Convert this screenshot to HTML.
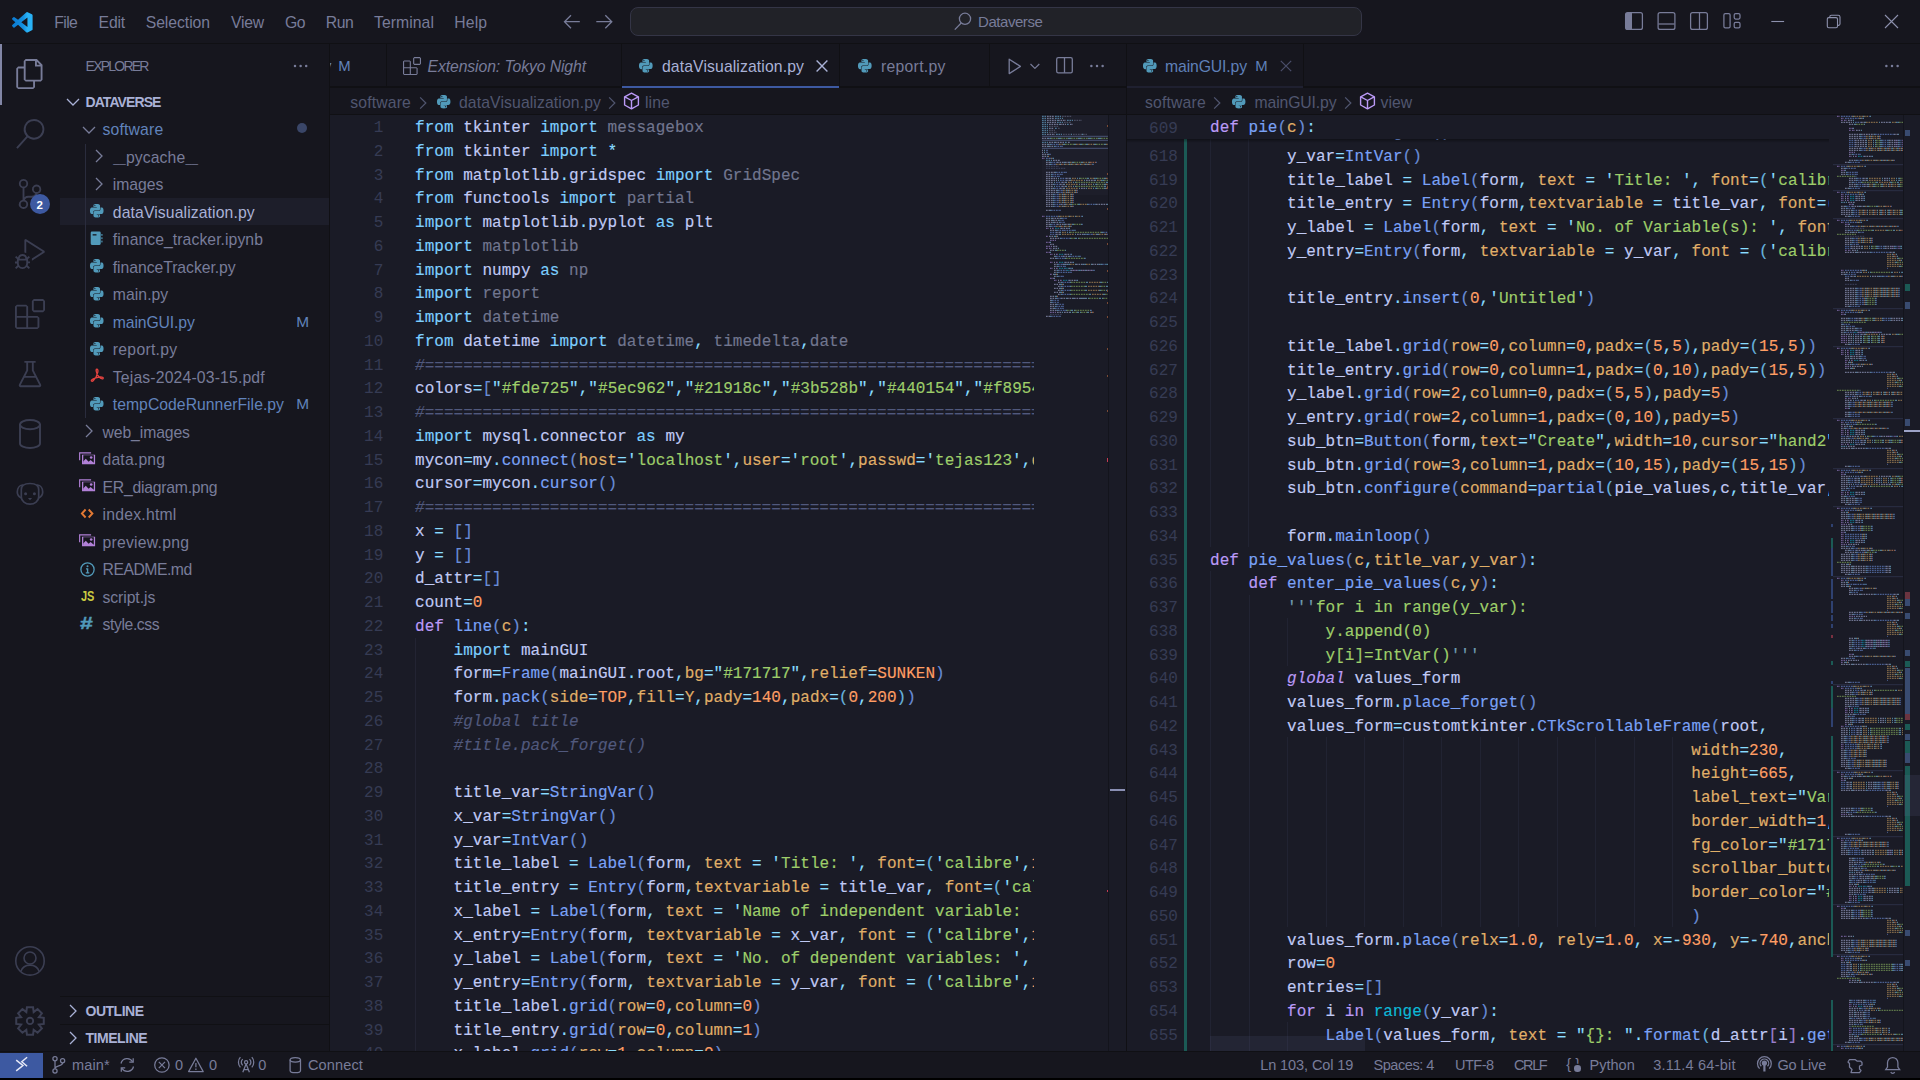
<!DOCTYPE html>
<html lang="en"><head><meta charset="utf-8"><title>Dataverse - Visual Studio Code</title>
<style>

*{box-sizing:border-box}
html,body{margin:0;padding:0;width:1920px;height:1080px;overflow:hidden;background:#16161e}
body{position:relative;font-family:"Liberation Sans",sans-serif;color:#787c99}
.a{position:absolute}
.ic{position:absolute;overflow:visible}
.t{position:absolute;white-space:pre;line-height:1;display:block}
.code{position:absolute;left:0;top:0;font-family:"Liberation Mono",monospace;font-size:16px;letter-spacing:0.025px;white-space:pre;color:#c0caf5}
.ln{position:absolute;white-space:pre;height:24px;line-height:24px;-webkit-text-stroke:0.15px}
.num{position:absolute;text-align:right;height:24px;line-height:24px;color:#363b54;font-family:"Liberation Mono",monospace;font-size:16px;letter-spacing:0.025px}
.k{color:#7dcfff}.d{color:#bb9af7}.i{font-style:italic}.f{color:#7aa2f7}.bf{color:#0db9d7}.p{color:#e0af68}
.n{color:#ff9e64}.s{color:#9ece6a}.q{color:#89ddff}.o{color:#89ddff}.v{color:#c0caf5}.u{color:#71768f}
.tq{color:#6f9bb0}.c{color:#51597d;font-style:italic}.C{color:#ff9e64}.b1{color:#698cd6}.b2{color:#68b3de}.b3{color:#9a7ecc}

</style></head>
<body>
<div class="a" style="left:0px;top:0px;width:1920px;height:43px;background:#16161e;"></div><div class="a" style="left:0px;top:43px;width:1920px;height:1px;background:#101014;"></div><svg class="ic" style="left:11.7px;top:11.6px" width="20.6" height="20.6" viewBox="0 0 24 24"><defs><linearGradient id="vg" x1="0" x2="1" y1="0" y2="0"><stop offset="0" stop-color="#0b7ad1"/><stop offset="0.55" stop-color="#1490e0"/><stop offset="0.75" stop-color="#29b2f6"/></linearGradient></defs><path fill="url(#vg)" d="M23.15 2.587L18.21.21a1.494 1.494 0 0 0-1.705.29l-9.46 8.63-4.12-3.128a.999.999 0 0 0-1.276.057L.327 7.261A1 1 0 0 0 .326 8.74L3.899 12 .326 15.26a1 1 0 0 0 .001 1.479L1.65 17.94a.999.999 0 0 0 1.276.057l4.12-3.128 9.46 8.63a1.492 1.492 0 0 0 1.704.29l4.942-2.377A1.5 1.5 0 0 0 24 20.06V3.939a1.5 1.5 0 0 0-.85-1.352zm-5.146 14.861L10.826 12l7.178-5.448v10.896z"/></svg><span class="t" style="left:54.3px;top:14px;font-size:15.75px;line-height:17px;color:#787c99;letter-spacing:-0.598px;">File</span><span class="t" style="left:98.6px;top:14px;font-size:15.75px;line-height:17px;color:#787c99;letter-spacing:-0.185px;">Edit</span><span class="t" style="left:145.7px;top:14px;font-size:15.75px;line-height:17px;color:#787c99;letter-spacing:-0.055px;">Selection</span><span class="t" style="left:231px;top:14px;font-size:15.75px;line-height:17px;color:#787c99;letter-spacing:-0.215px;">View</span><span class="t" style="left:285px;top:14px;font-size:15.75px;line-height:17px;color:#787c99;letter-spacing:-0.508px;">Go</span><span class="t" style="left:325.7px;top:14px;font-size:15.75px;line-height:17px;color:#787c99;letter-spacing:-0.435px;">Run</span><span class="t" style="left:374px;top:14px;font-size:15.75px;line-height:17px;color:#787c99;letter-spacing:0.059px;">Terminal</span><span class="t" style="left:454.3px;top:14px;font-size:15.75px;line-height:17px;color:#787c99;letter-spacing:0.148px;">Help</span><svg class="ic" style="left:560px;top:12px" width="60" height="20" viewBox="560 12 60 20"><g fill="none" stroke="#787c99" stroke-width="1.3"><path d="M579.8 21.7H564.6M571 15.2l-6.5 6.5 6.5 6.5"/><path d="M596.3 21.7h15.3M605.3 15.2l6.5 6.5-6.5 6.5"/></g></svg><div class="a" style="left:630px;top:7px;width:732px;height:29px;background:#212228;border:1px solid #343546;border-radius:8px"></div><svg class="ic" style="left:954px;top:11.5px" width="18" height="18" viewBox="0 0 18 18"><g fill="none" stroke="#787c99" stroke-width="1.3"><circle cx="11" cy="6.8" r="5.6"/><path d="M7.2 11L0.8 17.6"/></g></svg><span class="t" style="left:978px;top:13px;font-size:15px;line-height:17px;color:#787c99;letter-spacing:-0.442px;">Dataverse</span><svg class="ic" style="left:1620px;top:8px" width="130" height="28" viewBox="1620 8 130 28"><g fill="none" stroke="#787c99" stroke-width="1.25">
<rect x="1625.6" y="12.6" width="16.8" height="16.8" rx="2"/><path d="M1626 13h6v16h-6z" fill="#787c99" stroke="none"/>
<rect x="1658.1" y="12.6" width="16.8" height="16.8" rx="2"/><path d="M1658.5 24h16"/>
<rect x="1690.6" y="12.6" width="16.8" height="16.8" rx="2"/><path d="M1699.5 13v16"/>
<rect x="1723.9" y="13.6" width="6.2" height="14.2" rx="1.4"/><rect x="1734.2" y="13.6" width="5.8" height="5.4" rx="1.4"/><rect x="1734.2" y="22.4" width="5.8" height="5.4" rx="1.4"/>
</g></svg><svg class="ic" style="left:1760px;top:8px" width="150" height="28" viewBox="1760 8 150 28"><g fill="none" stroke="#8d91ad" stroke-width="1.1">
<path d="M1771.3 21.5h12.8"/>
<rect x="1827.3" y="17.6" width="10.2" height="10.2" rx="1.5"/><path d="M1829.8 17.4v-.6a1.6 1.6 0 0 1 1.6-1.6h6.8a1.8 1.8 0 0 1 1.8 1.8v6.8a1.6 1.6 0 0 1-1.6 1.6h-.7"/>
<path d="M1885 15l13 13M1898 15l-13 13"/>
</g></svg><div class="a" style="left:0px;top:44px;width:2.4px;height:60.5px;background:#8286a6;"></div><svg class="ic" style="left:15px;top:59px" width="30" height="30" viewBox="0 0 24 24"><path fill="#787c99" d="M17.5 0h-9L7 1.5V6H2.5L1 7.5v15.07L2.5 24h12.07L16 22.57V18h4.7l1.3-1.43V4.5L17.5 0zm0 2.12l2.38 2.38H17.5V2.12zm-3 20.38h-12v-15H7v9.07L8.5 18h6v4.5zm6-6h-12v-15H16V6h4.5v10.5z"/></svg><svg class="ic" style="left:15px;top:119px" width="30" height="30" viewBox="0 0 24 24"><path fill="#3b3e52" d="M15.25 0a8.25 8.25 0 0 0-6.18 13.72L1 22.88l1.12 1 8.05-9.12A8.251 8.251 0 1 0 15.25.01V0zm0 15a6.75 6.75 0 1 1 0-13.5 6.75 6.75 0 0 1 0 13.5z"/></svg><svg class="ic" style="left:15px;top:179px" width="30" height="30" viewBox="0 0 24 24"><path fill="#3b3e52" d="M21.007 8.222A3.738 3.738 0 0 0 15.045 5.2a3.737 3.737 0 0 0 1.156 6.583 2.988 2.988 0 0 1-2.668 1.67h-2.99a4.456 4.456 0 0 0-2.989 1.165V7.4a3.737 3.737 0 1 0-1.494 0v9.117a3.776 3.776 0 1 0 1.816.099 2.99 2.99 0 0 1 2.668-1.667h2.99a4.484 4.484 0 0 0 4.223-3.039 3.736 3.736 0 0 0 3.25-3.687zM4.565 3.738a2.242 2.242 0 1 1 4.484 0 2.242 2.242 0 0 1-4.484 0zm4.484 16.441a2.242 2.242 0 1 1-4.484 0 2.242 2.242 0 0 1 4.484 0zm8.221-9.715a2.242 2.242 0 1 1 0-4.485 2.242 2.242 0 0 1 0 4.485z"/></svg><svg class="ic" style="left:15px;top:239px" width="30" height="30" viewBox="0 0 24 24"><path fill="#3b3e52" d="M10.94 13.5l-1.32 1.32a3.73 3.73 0 0 0-7.24 0L1.06 13.5 0 14.56l1.72 1.72-.22.22V18H0v1.5h1.5v.08c.077.489.214.966.41 1.42L0 22.94 1.06 24l1.65-1.65A4.308 4.308 0 0 0 6 24a4.31 4.31 0 0 0 3.29-1.65L10.94 24 12 22.94 10.09 21c.198-.464.336-.951.41-1.45v-.1H12V18h-1.5v-1.5l-.22-.22L12 14.56l-1.06-1.06zM6 13.5a2.25 2.25 0 0 1 2.25 2.25h-4.5A2.25 2.25 0 0 1 6 13.5zm3 6a3.33 3.33 0 0 1-3 3 3.33 3.33 0 0 1-3-3v-2.25h6v2.25zm14.76-9.9v1.26L13.5 17.37V15.6l8.5-5.37L9 2v9.46a5.07 5.07 0 0 0-1.5-.72V.63L8.64 0l15.12 9.6z"/></svg><svg class="ic" style="left:15px;top:299px" width="30" height="30" viewBox="0 0 24 24"><path fill="#3b3e52" d="M13.5 1.5L15 0h7.5L24 1.5V9l-1.5 1.5H15L13.5 9V1.5zm1.5 0V9h7.5V1.5H15zM0 15V6l1.5-1.5H9L10.5 6v7.5H18l1.5 1.5v7.5L18 24H1.5L0 22.5V15zm9-1.5V6H1.5v7.5H9zM9 15H1.5v7.5H9V15zm1.5 7.5H18V15h-7.5v7.5z"/></svg><svg class="ic" style="left:15px;top:359px" width="30" height="30" viewBox="0 0 16 16"><path fill="#3b3e52" d="M13.893 13.558L10 6.006v-4h1v-1H9.994V1H6v.006H5v1h1v4l-3.893 7.552A1 1 0 0 0 3 15h10a1 1 0 0 0 .893-1.442zM7 6.251V2.006h2v4.245l.111.215L10.438 9H5.562l1.327-2.534L7 6.251zM3 14l2.062-4h5.876L13 14H3z"/></svg><div class="a" style="left:30px;top:194.4px;width:20px;height:20px;border-radius:10px;background:#3d59a1"></div><span class="t" style="left:36.6px;top:199px;font-size:11.5px;line-height:12px;color:#ffffff;font-weight:bold;">2</span><svg class="ic" style="left:0;top:404px" width="60" height="120" viewBox="0 404 60 120"><g fill="none" stroke="#3b3e52" stroke-width="1.9" stroke-linecap="round" stroke-linejoin="round"><ellipse cx="30" cy="424.6" rx="10" ry="4.6"/><path d="M20 424.6v18.8c0 2.5 4.5 4.6 10 4.6s10-2.1 10-4.6v-18.8"/><path d="M21.3 489.5c0-4 3.6-6 8.7-6s8.7 2 8.7 6v7.5c0 4.2-4 7.2-8.7 7.2s-8.7-3-8.7-7.2z" stroke-width="1.7"/><path d="M22.5 485c-3 .4-5.2 3.2-5.2 7 0 2.600 1.400 4.800 4 6" stroke-width="1.7"/><path d="M37.500 485c3 .4 5.200 3.200 5.200 7 0 2.600-1.400 4.800-4 6" stroke-width="1.700"/></g><g fill="#3b3e52"><circle cx="25.6" cy="493.7" r="1.5"/><circle cx="34.4" cy="493.7" r="1.500"/><path d="M27.900 498h4.200l-2.100 2.300z"/></g></svg><svg class="ic" style="left:0;top:940px" width="60" height="100" viewBox="0 940 60 100"><g fill="none" stroke="#3b3e52"><circle cx="30" cy="960.9" r="14.2" stroke-width="1.6"/><circle cx="30" cy="958" r="6" stroke-width="1.6"/><path d="M20.800 971.400c1.400-4 5-6.300 9.200-6.300s7.800 2.300 9.200 6.300" stroke-width="1.600"/><path d="M26.95 1007.13 L33.05 1007.13 L33.67 1012.03 L37.58 1009.01 L41.89 1013.32 L38.87 1017.23 L43.77 1017.85 L43.77 1023.95 L38.87 1024.57 L41.89 1028.48 L37.58 1032.79 L33.67 1029.77 L33.05 1034.67 L26.95 1034.67 L26.33 1029.77 L22.42 1032.79 L18.11 1028.48 L21.13 1024.57 L16.23 1023.95 L16.23 1017.85 L21.13 1017.23 L18.11 1013.32 L22.42 1009.01 L26.33 1012.03Z" stroke-width="2" stroke-linejoin="miter"/><circle cx="30" cy="1020.9" r="3.2" stroke-width="1.9"/></g></svg><div class="a" style="left:60px;top:44px;width:269px;height:1008px;background:#16161e;"></div><div class="a" style="left:329px;top:44px;width:1px;height:1008px;background:#101014;"></div><span class="t" style="left:85.6px;top:58px;font-size:14px;line-height:16px;color:#787c99;letter-spacing:-1.769px;">EXPLORER</span><svg class="ic" style="left:290px;top:60px" width="22" height="12" viewBox="290 60 22 12"><g fill="#787c99"><circle cx="295" cy="66" r="1.25"/><circle cx="300.6" cy="66" r="1.25"/><circle cx="306.200" cy="66" r="1.250"/></g></svg><svg class="ic" style="left:63px;top:92.3px" width="20" height="20" viewBox="-10 -10 20 20"><path d="M-6.0 -3.0 L0 3.0 L6.0 -3.0" fill="none" stroke="#a9b1d6" stroke-width="1.3"/></svg><span class="t" style="left:85.5px;top:94px;font-size:14px;line-height:16px;color:#a9b1d6;font-weight:bold;letter-spacing:-0.915px;">DATAVERSE</span><div class="a" style="left:60px;top:197.8px;width:269px;height:27.3px;background:#1d1e2a;"></div><div class="a" style="left:85.2px;top:143.5px;width:1px;height:274.5px;background:#2a2c3d;"></div><svg class="ic" style="left:78.8px;top:119.80000000000001px" width="20" height="20" viewBox="-10 -10 20 20"><path d="M-6.0 -3.0 L0 3.0 L6.0 -3.0" fill="none" stroke="#787c99" stroke-width="1.3"/></svg><span class="t" style="left:102.5px;top:121px;font-size:15.75px;line-height:17px;color:#6183bb;letter-spacing:0.159px;">software</span><div class="a" style="left:297.300px;top:123.4px;width:10px;height:10px;border-radius:5px;background:#3a4668"></div><svg class="ic" style="left:88.9px;top:146.1px" width="20" height="20" viewBox="-10 -10 20 20"><path d="M-3.0 -6.0 L3.0 0 L-3.0 6.0" fill="none" stroke="#787c99" stroke-width="1.3"/></svg><span class="t" style="left:113.200px;top:149px;font-size:15.750px;line-height:17px;color:#787c99"><span style="font-size:11.200px">__</span><span style="letter-spacing:0.090px;padding:0 0.300px">pycache</span><span style="font-size:11.200px">__</span></span><svg class="ic" style="left:88.9px;top:173.6px" width="20" height="20" viewBox="-10 -10 20 20"><path d="M-3.0 -6.0 L3.0 0 L-3.0 6.0" fill="none" stroke="#787c99" stroke-width="1.3"/></svg><span class="t" style="left:112.8px;top:176px;font-size:15.75px;line-height:17px;color:#787c99;letter-spacing:-0.047px;">images</span><svg class="ic" style="left:90.2px;top:204.3px" width="13.5" height="13.5" viewBox="0 0 24 24" ><path fill="#519aba" d="M14.25.18l.9.2.73.26.59.3.45.32.34.34.25.34.16.33.1.3.04.26.02.2-.01.13V8.5l-.05.63-.13.55-.21.46-.26.38-.3.31-.33.25-.35.19-.35.14-.33.1-.3.07-.26.04-.21.02H8.77l-.69.05-.59.14-.5.22-.41.27-.33.32-.27.35-.2.36-.15.37-.1.35-.07.32-.04.27-.02.21v3.06H3.17l-.21-.03-.28-.07-.32-.12-.35-.18-.36-.26-.36-.36-.35-.46-.32-.59-.28-.73-.21-.88-.14-1.05-.05-1.23.06-1.22.16-1.04.24-.87.32-.71.36-.57.4-.44.42-.33.42-.24.4-.16.36-.1.32-.05.24-.01h.16l.06.01h8.16v-.83H6.18l-.01-2.75-.02-.37.05-.34.11-.31.17-.28.25-.26.31-.23.38-.2.44-.18.51-.15.58-.12.64-.1.71-.06.77-.04.84-.02 1.27.05zm-6.3 1.98l-.23.33-.08.41.08.41.23.34.33.22.41.09.41-.09.33-.22.23-.34.08-.41-.08-.41-.23-.33-.33-.22-.41-.09-.41.09zm13.09 3.95l.28.06.32.12.35.18.36.27.36.35.35.47.32.59.28.73.21.88.14 1.04.05 1.23-.06 1.23-.16 1.04-.24.86-.32.71-.36.57-.4.45-.42.33-.42.24-.4.16-.36.09-.32.05-.24.02-.16-.01h-8.22v.82h5.84l.01 2.76.02.36-.05.34-.11.31-.17.29-.25.25-.31.24-.38.2-.44.17-.51.15-.58.13-.64.09-.71.07-.77.04-.84.01-1.27-.04-1.07-.14-.9-.2-.73-.25-.59-.3-.45-.33-.34-.34-.25-.34-.16-.33-.1-.3-.04-.25-.02-.2.01-.13v-5.34l.05-.64.13-.54.21-.46.26-.38.3-.32.33-.24.35-.2.35-.14.33-.1.3-.06.26-.04.21-.02.13-.01h5.84l.69-.05.59-.14.5-.21.41-.28.33-.32.27-.35.2-.36.15-.36.1-.35.07-.32.04-.28.02-.21V6.07h2.09l.14.01zm-6.47 14.25l-.23.33-.08.41.08.41.23.33.33.23.41.08.41-.08.33-.23.23-.33.08-.41-.08-.41-.23-.33-.33-.23-.41-.08-.41.08z"/></svg><span class="t" style="left:112.8px;top:204px;font-size:15.75px;line-height:17px;color:#a9b1d6;letter-spacing:0.109px;">dataVisualization.py</span><svg class="ic" style="left:90.4px;top:230.8px" width="13.200" height="15" viewBox="0 0 15 15" preserveAspectRatio="none"><path fill="#519aba" d="M2.2 0.6h8.6a1.4 1.400 0 0 1 1.400 1.400v10.600a1.400 1.400 0 0 1-1.400 1.400H2.200a1.400 1.400 0 0 1-1.400-1.400V2a1.400 1.400 0 0 1 1.400-1.400z"/><path fill="#16161e" d="M3 3.200h4.400v1.300H3z"/><g fill="#519aba"><rect x="12.9" y="3" width="1.3" height="1.800"/><rect x="12.9" y="6.300" width="1.300" height="1.800"/><rect x="12.900" y="9.600" width="1.300" height="1.800"/></g></svg><span class="t" style="left:112.8px;top:231px;font-size:15.75px;line-height:17px;color:#787c99;letter-spacing:0.065px;">finance_tracker.ipynb</span><svg class="ic" style="left:90.2px;top:259.3px" width="13.5" height="13.5" viewBox="0 0 24 24" ><path fill="#519aba" d="M14.25.18l.9.2.73.26.59.3.45.32.34.34.25.34.16.33.1.3.04.26.02.2-.01.13V8.5l-.05.63-.13.55-.21.46-.26.38-.3.31-.33.25-.35.19-.35.14-.33.1-.3.07-.26.04-.21.02H8.77l-.69.05-.59.14-.5.22-.41.27-.33.32-.27.35-.2.36-.15.37-.1.35-.07.32-.04.27-.02.21v3.06H3.17l-.21-.03-.28-.07-.32-.12-.35-.18-.36-.26-.36-.36-.35-.46-.32-.59-.28-.73-.21-.88-.14-1.05-.05-1.23.06-1.22.16-1.04.24-.87.32-.71.36-.57.4-.44.42-.33.42-.24.4-.16.36-.1.32-.05.24-.01h.16l.06.01h8.16v-.83H6.18l-.01-2.75-.02-.37.05-.34.11-.31.17-.28.25-.26.31-.23.38-.2.44-.18.51-.15.58-.12.64-.1.71-.06.77-.04.84-.02 1.27.05zm-6.3 1.98l-.23.33-.08.41.08.41.23.34.33.22.41.09.41-.09.33-.22.23-.34.08-.41-.08-.41-.23-.33-.33-.22-.41-.09-.41.09zm13.09 3.95l.28.06.32.12.35.18.36.27.36.35.35.47.32.59.28.73.21.88.14 1.04.05 1.23-.06 1.23-.16 1.04-.24.86-.32.71-.36.57-.4.45-.42.33-.42.24-.4.16-.36.09-.32.05-.24.02-.16-.01h-8.22v.82h5.84l.01 2.76.02.36-.05.34-.11.31-.17.29-.25.25-.31.24-.38.2-.44.17-.51.15-.58.13-.64.09-.71.07-.77.04-.84.01-1.27-.04-1.07-.14-.9-.2-.73-.25-.59-.3-.45-.33-.34-.34-.25-.34-.16-.33-.1-.3-.04-.25-.02-.2.01-.13v-5.34l.05-.64.13-.54.21-.46.26-.38.3-.32.33-.24.35-.2.35-.14.33-.1.3-.06.26-.04.21-.02.13-.01h5.84l.69-.05.59-.14.5-.21.41-.28.33-.32.27-.35.2-.36.15-.36.1-.35.07-.32.04-.28.02-.21V6.07h2.09l.14.01zm-6.47 14.25l-.23.33-.08.41.08.41.23.33.33.23.41.08.41-.08.33-.23.23-.33.08-.41-.08-.41-.23-.33-.33-.23-.41-.08-.41.08z"/></svg><span class="t" style="left:112.8px;top:259px;font-size:15.75px;line-height:17px;color:#787c99;letter-spacing:-0.055px;">financeTracker.py</span><svg class="ic" style="left:90.2px;top:286.8px" width="13.5" height="13.5" viewBox="0 0 24 24" ><path fill="#519aba" d="M14.25.18l.9.2.73.26.59.3.45.32.34.34.25.34.16.33.1.3.04.26.02.2-.01.13V8.5l-.05.63-.13.55-.21.46-.26.38-.3.31-.33.25-.35.19-.35.14-.33.1-.3.07-.26.04-.21.02H8.77l-.69.05-.59.14-.5.22-.41.27-.33.32-.27.35-.2.36-.15.37-.1.35-.07.32-.04.27-.02.21v3.06H3.17l-.21-.03-.28-.07-.32-.12-.35-.18-.36-.26-.36-.36-.35-.46-.32-.59-.28-.73-.21-.88-.14-1.05-.05-1.23.06-1.22.16-1.04.24-.87.32-.71.36-.57.4-.44.42-.33.42-.24.4-.16.36-.1.32-.05.24-.01h.16l.06.01h8.16v-.83H6.18l-.01-2.75-.02-.37.05-.34.11-.31.17-.28.25-.26.31-.23.38-.2.44-.18.51-.15.58-.12.64-.1.71-.06.77-.04.84-.02 1.27.05zm-6.3 1.98l-.23.33-.08.41.08.41.23.34.33.22.41.09.41-.09.33-.22.23-.34.08-.41-.08-.41-.23-.33-.33-.22-.41-.09-.41.09zm13.09 3.95l.28.06.32.12.35.18.36.27.36.35.35.47.32.59.28.73.21.88.14 1.04.05 1.23-.06 1.23-.16 1.04-.24.86-.32.71-.36.57-.4.45-.42.33-.42.24-.4.16-.36.09-.32.05-.24.02-.16-.01h-8.22v.82h5.84l.01 2.76.02.36-.05.34-.11.31-.17.29-.25.25-.31.24-.38.2-.44.17-.51.15-.58.13-.64.09-.71.07-.77.04-.84.01-1.27-.04-1.07-.14-.9-.2-.73-.25-.59-.3-.45-.33-.34-.34-.25-.34-.16-.33-.1-.3-.04-.25-.02-.2.01-.13v-5.34l.05-.64.13-.54.21-.46.26-.38.3-.32.33-.24.35-.2.35-.14.33-.1.3-.06.26-.04.21-.02.13-.01h5.84l.69-.05.59-.14.5-.21.41-.28.33-.32.27-.35.2-.36.15-.36.1-.35.07-.32.04-.28.02-.21V6.07h2.09l.14.01zm-6.47 14.25l-.23.33-.08.41.08.41.23.33.33.23.41.08.41-.08.33-.23.23-.33.08-.41-.08-.41-.23-.33-.33-.23-.41-.08-.41.08z"/></svg><span class="t" style="left:112.8px;top:286px;font-size:15.75px;line-height:17px;color:#787c99;letter-spacing:0.049px;">main.py</span><svg class="ic" style="left:90.2px;top:314.3px" width="13.5" height="13.5" viewBox="0 0 24 24" ><path fill="#519aba" d="M14.25.18l.9.2.73.26.59.3.45.32.34.34.25.34.16.33.1.3.04.26.02.2-.01.13V8.5l-.05.63-.13.55-.21.46-.26.38-.3.31-.33.25-.35.19-.35.14-.33.1-.3.07-.26.04-.21.02H8.77l-.69.05-.59.14-.5.22-.41.27-.33.32-.27.35-.2.36-.15.37-.1.35-.07.32-.04.27-.02.21v3.06H3.17l-.21-.03-.28-.07-.32-.12-.35-.18-.36-.26-.36-.36-.35-.46-.32-.59-.28-.73-.21-.88-.14-1.05-.05-1.23.06-1.22.16-1.04.24-.87.32-.71.36-.57.4-.44.42-.33.42-.24.4-.16.36-.1.32-.05.24-.01h.16l.06.01h8.16v-.83H6.18l-.01-2.75-.02-.37.05-.34.11-.31.17-.28.25-.26.31-.23.38-.2.44-.18.51-.15.58-.12.64-.1.71-.06.77-.04.84-.02 1.27.05zm-6.3 1.98l-.23.33-.08.41.08.41.23.34.33.22.41.09.41-.09.33-.22.23-.34.08-.41-.08-.41-.23-.33-.33-.22-.41-.09-.41.09zm13.09 3.95l.28.06.32.12.35.18.36.27.36.35.35.47.32.59.28.73.21.88.14 1.04.05 1.23-.06 1.23-.16 1.04-.24.86-.32.71-.36.57-.4.45-.42.33-.42.24-.4.16-.36.09-.32.05-.24.02-.16-.01h-8.22v.82h5.84l.01 2.76.02.36-.05.34-.11.31-.17.29-.25.25-.31.24-.38.2-.44.17-.51.15-.58.13-.64.09-.71.07-.77.04-.84.01-1.27-.04-1.07-.14-.9-.2-.73-.25-.59-.3-.45-.33-.34-.34-.25-.34-.16-.33-.1-.3-.04-.25-.02-.2.01-.13v-5.34l.05-.64.13-.54.21-.46.26-.38.3-.32.33-.24.35-.2.35-.14.33-.1.3-.06.26-.04.21-.02.13-.01h5.84l.69-.05.59-.14.5-.21.41-.28.33-.32.27-.35.2-.36.15-.36.1-.35.07-.32.04-.28.02-.21V6.07h2.09l.14.01zm-6.47 14.25l-.23.33-.08.41.08.41.23.33.33.23.41.08.41-.08.33-.23.23-.33.08-.41-.08-.41-.23-.33-.33-.23-.41-.08-.41.08z"/></svg><span class="t" style="left:112.8px;top:314px;font-size:15.75px;line-height:17px;color:#6183bb;letter-spacing:-0.126px;">mainGUI.py</span><span class="t" style="left:296.3px;top:313px;font-size:15.4px;line-height:17px;color:#6183bb;letter-spacing:-0.928px;">M</span><svg class="ic" style="left:90.2px;top:341.8px" width="13.5" height="13.5" viewBox="0 0 24 24" ><path fill="#519aba" d="M14.25.18l.9.2.73.26.59.3.45.32.34.34.25.34.16.33.1.3.04.26.02.2-.01.13V8.5l-.05.63-.13.55-.21.46-.26.38-.3.31-.33.25-.35.19-.35.14-.33.1-.3.07-.26.04-.21.02H8.77l-.69.05-.59.14-.5.22-.41.27-.33.32-.27.35-.2.36-.15.37-.1.35-.07.32-.04.27-.02.21v3.06H3.17l-.21-.03-.28-.07-.32-.12-.35-.18-.36-.26-.36-.36-.35-.46-.32-.59-.28-.73-.21-.88-.14-1.05-.05-1.23.06-1.22.16-1.04.24-.87.32-.71.36-.57.4-.44.42-.33.42-.24.4-.16.36-.1.32-.05.24-.01h.16l.06.01h8.16v-.83H6.18l-.01-2.75-.02-.37.05-.34.11-.31.17-.28.25-.26.31-.23.38-.2.44-.18.51-.15.58-.12.64-.1.71-.06.77-.04.84-.02 1.27.05zm-6.3 1.98l-.23.33-.08.41.08.41.23.34.33.22.41.09.41-.09.33-.22.23-.34.08-.41-.08-.41-.23-.33-.33-.22-.41-.09-.41.09zm13.09 3.95l.28.06.32.12.35.18.36.27.36.35.35.47.32.59.28.73.21.88.14 1.04.05 1.23-.06 1.23-.16 1.04-.24.86-.32.71-.36.57-.4.45-.42.33-.42.24-.4.16-.36.09-.32.05-.24.02-.16-.01h-8.22v.82h5.84l.01 2.76.02.36-.05.34-.11.31-.17.29-.25.25-.31.24-.38.2-.44.17-.51.15-.58.13-.64.09-.71.07-.77.04-.84.01-1.27-.04-1.07-.14-.9-.2-.73-.25-.59-.3-.45-.33-.34-.34-.25-.34-.16-.33-.1-.3-.04-.25-.02-.2.01-.13v-5.34l.05-.64.13-.54.21-.46.26-.38.3-.32.33-.24.35-.2.35-.14.33-.1.3-.06.26-.04.21-.02.13-.01h5.84l.69-.05.59-.14.5-.21.41-.28.33-.32.27-.35.2-.36.15-.36.1-.35.07-.32.04-.28.02-.21V6.07h2.09l.14.01zm-6.47 14.25l-.23.33-.08.41.08.41.23.33.33.23.41.08.41-.08.33-.23.23-.33.08-.41-.08-.41-.23-.33-.33-.23-.41-.08-.41.08z"/></svg><span class="t" style="left:112.8px;top:341px;font-size:15.75px;line-height:17px;color:#787c99;letter-spacing:0.272px;">report.py</span><svg class="ic" style="left:90.2px;top:368.3px" width="15" height="15" viewBox="0 0 15 15"><path fill="none" stroke="#e2423f" stroke-width="1.35" stroke-linecap="round" stroke-linejoin="round" d="M6.800 1.200c1.200 0 1.300 1.500 1 3-.5 2.600-2.500 6.600-4.600 8.600-1 .9-2.300.300-1.700-.700 1-1.700 6.800-3.500 10.500-3 1.700.200 1.600 1.800.200 1.700-2.300-.200-5.300-4-5.900-7.300-.200-1.200-.300-2.300.500-2.300z"/></svg><span class="t" style="left:112.8px;top:369px;font-size:15.75px;line-height:17px;color:#787c99;letter-spacing:0.157px;">Tejas-2024-03-15.pdf</span><svg class="ic" style="left:90.2px;top:396.8px" width="13.5" height="13.5" viewBox="0 0 24 24" ><path fill="#519aba" d="M14.25.18l.9.2.73.26.59.3.45.32.34.34.25.34.16.33.1.3.04.26.02.2-.01.13V8.5l-.05.63-.13.55-.21.46-.26.38-.3.31-.33.25-.35.19-.35.14-.33.1-.3.07-.26.04-.21.02H8.77l-.69.05-.59.14-.5.22-.41.27-.33.32-.27.35-.2.36-.15.37-.1.35-.07.32-.04.27-.02.21v3.06H3.17l-.21-.03-.28-.07-.32-.12-.35-.18-.36-.26-.36-.36-.35-.46-.32-.59-.28-.73-.21-.88-.14-1.05-.05-1.23.06-1.22.16-1.04.24-.87.32-.71.36-.57.4-.44.42-.33.42-.24.4-.16.36-.1.32-.05.24-.01h.16l.06.01h8.16v-.83H6.18l-.01-2.75-.02-.37.05-.34.11-.31.17-.28.25-.26.31-.23.38-.2.44-.18.51-.15.58-.12.64-.1.71-.06.77-.04.84-.02 1.27.05zm-6.3 1.98l-.23.33-.08.41.08.41.23.34.33.22.41.09.41-.09.33-.22.23-.34.08-.41-.08-.41-.23-.33-.33-.22-.41-.09-.41.09zm13.09 3.95l.28.06.32.12.35.18.36.27.36.35.35.47.32.59.28.73.21.88.14 1.04.05 1.23-.06 1.23-.16 1.04-.24.86-.32.71-.36.57-.4.45-.42.33-.42.24-.4.16-.36.09-.32.05-.24.02-.16-.01h-8.22v.82h5.84l.01 2.76.02.36-.05.34-.11.31-.17.29-.25.25-.31.24-.38.2-.44.17-.51.15-.58.13-.64.09-.71.07-.77.04-.84.01-1.27-.04-1.07-.14-.9-.2-.73-.25-.59-.3-.45-.33-.34-.34-.25-.34-.16-.33-.1-.3-.04-.25-.02-.2.01-.13v-5.34l.05-.64.13-.54.21-.46.26-.38.3-.32.33-.24.35-.2.35-.14.33-.1.3-.06.26-.04.21-.02.13-.01h5.84l.69-.05.59-.14.5-.21.41-.28.33-.32.27-.35.2-.36.15-.36.1-.35.07-.32.04-.28.02-.21V6.07h2.09l.14.01zm-6.47 14.25l-.23.33-.08.41.08.41.23.33.33.23.41.08.41-.08.33-.23.23-.33.08-.41-.08-.41-.23-.33-.33-.23-.41-.08-.41.08z"/></svg><span class="t" style="left:112.8px;top:396px;font-size:15.75px;line-height:17px;color:#6183bb;letter-spacing:0.023px;">tempCodeRunnerFile.py</span><span class="t" style="left:296.3px;top:395px;font-size:15.4px;line-height:17px;color:#6183bb;letter-spacing:-0.928px;">M</span><svg class="ic" style="left:78.6px;top:421.1px" width="20" height="20" viewBox="-10 -10 20 20"><path d="M-3.0 -6.0 L3.0 0 L-3.0 6.0" fill="none" stroke="#787c99" stroke-width="1.3"/></svg><span class="t" style="left:102.5px;top:424px;font-size:15.75px;line-height:17px;color:#787c99;letter-spacing:-0.104px;">web_images</span><svg class="ic" style="left:79px;top:451.5px" width="17" height="14" viewBox="0 0 17 14"><path fill="none" stroke="#b180d7" stroke-width="1.150" d="M0.650 8.300V0.850H12.100"/><path fill="none" stroke="#b180d7" stroke-width="1.300" d="M3.650 2.900V11.500H15.450V2.900"/><path fill="none" stroke="#b180d7" stroke-opacity="0.300" stroke-width="1.600" d="M3 2.900H16.100"/><path fill="#b180d7" d="M4.200 11.400V9.500L6.800 6.700l2.800 3.100 2-1.700L15 11V11.400z"/><circle cx="12.200" cy="5.500" r="1.350" fill="#b180d7"/></svg><span class="t" style="left:102.5px;top:451px;font-size:15.75px;line-height:17px;color:#787c99;letter-spacing:0.173px;">data.png</span><svg class="ic" style="left:79px;top:479.0px" width="17" height="14" viewBox="0 0 17 14"><path fill="none" stroke="#b180d7" stroke-width="1.150" d="M0.650 8.300V0.850H12.100"/><path fill="none" stroke="#b180d7" stroke-width="1.300" d="M3.650 2.900V11.500H15.450V2.900"/><path fill="none" stroke="#b180d7" stroke-opacity="0.300" stroke-width="1.600" d="M3 2.900H16.100"/><path fill="#b180d7" d="M4.200 11.400V9.500L6.800 6.700l2.800 3.100 2-1.700L15 11V11.400z"/><circle cx="12.200" cy="5.500" r="1.350" fill="#b180d7"/></svg><span class="t" style="left:102.5px;top:479px;font-size:15.75px;line-height:17px;color:#787c99;letter-spacing:-0.236px;">ER_diagram.png</span><svg class="ic" style="left:80.2px;top:506.29999999999995px" width="15" height="15" viewBox="0 0 15 15"><path fill="none" stroke="#e37933" stroke-width="1.900" d="M5.600 3.500L1.900 7.500l3.700 4M8.700 3.500l3.700 4-3.700 4"/></svg><span class="t" style="left:102.5px;top:506px;font-size:15.75px;line-height:17px;color:#787c99;letter-spacing:0.23px;">index.html</span><svg class="ic" style="left:79px;top:534.0px" width="17" height="14" viewBox="0 0 17 14"><path fill="none" stroke="#b180d7" stroke-width="1.150" d="M0.650 8.300V0.850H12.100"/><path fill="none" stroke="#b180d7" stroke-width="1.300" d="M3.650 2.900V11.500H15.450V2.900"/><path fill="none" stroke="#b180d7" stroke-opacity="0.300" stroke-width="1.600" d="M3 2.900H16.100"/><path fill="#b180d7" d="M4.200 11.400V9.500L6.800 6.700l2.800 3.100 2-1.700L15 11V11.400z"/><circle cx="12.200" cy="5.500" r="1.350" fill="#b180d7"/></svg><span class="t" style="left:102.5px;top:534px;font-size:15.75px;line-height:17px;color:#787c99;letter-spacing:0.24px;">preview.png</span><svg class="ic" style="left:79.5px;top:562.0px" width="15" height="15" viewBox="0 0 15 15"><circle cx="7.500" cy="7.500" r="6.600" fill="none" stroke="#519aba" stroke-width="1.300"/><g fill="#519aba"><circle cx="7.500" cy="4.300" r="1"/><path d="M6 6.300h2.300v4h1v1.100H5.800v-1.100h1.100V7.400H6z"/></g></svg><span class="t" style="left:102.5px;top:561px;font-size:15.75px;line-height:17px;color:#787c99;letter-spacing:-0.493px;">README.md</span><span class="t" style="left:80.5px;top:588px;font-size:14.3px;line-height:16px;color:#cbcb41;font-weight:bold;transform:scaleX(0.77);transform-origin:0 0;">JS</span><span class="t" style="left:102.5px;top:589px;font-size:15.75px;line-height:17px;color:#787c99;letter-spacing:-0.077px;">script.js</span><span class="t" style="left:80.3px;top:614px;font-size:16.2px;line-height:18px;color:#519aba;font-weight:bold;transform:scaleX(1.42);transform-origin:0 0;-webkit-text-stroke:0.4px;">#</span><span class="t" style="left:102.5px;top:616px;font-size:15.75px;line-height:17px;color:#787c99;letter-spacing:-0.399px;">style.css</span><div class="a" style="left:60px;top:996px;width:269px;height:1px;background:#101014;"></div><div class="a" style="left:60px;top:1024.2px;width:269px;height:1px;background:#101014;"></div><svg class="ic" style="left:63px;top:1000.6px" width="20" height="20" viewBox="-10 -10 20 20"><path d="M-3.0 -6.0 L3.0 0 L-3.0 6.0" fill="none" stroke="#a9b1d6" stroke-width="1.3"/></svg><svg class="ic" style="left:63px;top:1027.6px" width="20" height="20" viewBox="-10 -10 20 20"><path d="M-3.0 -6.0 L3.0 0 L-3.0 6.0" fill="none" stroke="#a9b1d6" stroke-width="1.3"/></svg><span class="t" style="left:85.5px;top:1003px;font-size:14px;line-height:16px;color:#a9b1d6;font-weight:bold;letter-spacing:-0.493px;">OUTLINE</span><span class="t" style="left:85.5px;top:1030px;font-size:14px;line-height:16px;color:#a9b1d6;font-weight:bold;letter-spacing:-0.455px;">TIMELINE</span><div class="a" style="left:330px;top:44px;width:796px;height:43px;background:#16161e;"></div><div class="a" style="left:330px;top:85.8px;width:796px;height:2px;background:#101014;"></div><div class="a" style="left:386px;top:44px;width:1px;height:42.5px;background:#101014;"></div><div class="a" style="left:621px;top:44px;width:1px;height:42.5px;background:#101014;"></div><div class="a" style="left:839px;top:44px;width:1px;height:42.5px;background:#101014;"></div><div class="a" style="left:989.3px;top:44px;width:1px;height:42.5px;background:#101014;"></div><div class="a" style="left:330px;top:50px;width:8px;height:30px;overflow:hidden"><span class="t" style="left:-6.5px;top:8px;font-size:15.75px;line-height:17px;color:#6183bb;">y</span></div><span class="t" style="left:338.3px;top:58px;font-size:14.9px;line-height:16px;color:#6183bb;letter-spacing:-0.506px;">M</span><svg class="ic" style="left:403px;top:57px" width="18" height="18" viewBox="0 0 24 24"><path fill="#787c99" d="M13.5 1.5L15 0h7.5L24 1.5V9l-1.5 1.5H15L13.5 9V1.5zm1.5 0V9h7.5V1.5H15zM0 15V6l1.5-1.5H9L10.5 6v7.5H18l1.5 1.5v7.5L18 24H1.5L0 22.5V15zm9-1.5V6H1.5v7.5H9zM9 15H1.5v7.5H9V15zm1.5 7.5H18V15h-7.5v7.5z"/></svg><span class="t" style="left:427.5px;top:58px;font-size:15.75px;line-height:17px;color:#787c99;font-style:italic;letter-spacing:-0.092px;">Extension: Tokyo Night</span><svg class="ic" style="left:639px;top:58.6px" width="13.6" height="13.6" viewBox="0 0 24 24" ><path fill="#519aba" d="M14.25.18l.9.2.73.26.59.3.45.32.34.34.25.34.16.33.1.3.04.26.02.2-.01.13V8.5l-.05.63-.13.55-.21.46-.26.38-.3.31-.33.25-.35.19-.35.14-.33.1-.3.07-.26.04-.21.02H8.77l-.69.05-.59.14-.5.22-.41.27-.33.32-.27.35-.2.36-.15.37-.1.35-.07.32-.04.27-.02.21v3.06H3.17l-.21-.03-.28-.07-.32-.12-.35-.18-.36-.26-.36-.36-.35-.46-.32-.59-.28-.73-.21-.88-.14-1.05-.05-1.23.06-1.22.16-1.04.24-.87.32-.71.36-.57.4-.44.42-.33.42-.24.4-.16.36-.1.32-.05.24-.01h.16l.06.01h8.16v-.83H6.18l-.01-2.75-.02-.37.05-.34.11-.31.17-.28.25-.26.31-.23.38-.2.44-.18.51-.15.58-.12.64-.1.71-.06.77-.04.84-.02 1.27.05zm-6.3 1.98l-.23.33-.08.41.08.41.23.34.33.22.41.09.41-.09.33-.22.23-.34.08-.41-.08-.41-.23-.33-.33-.22-.41-.09-.41.09zm13.09 3.95l.28.06.32.12.35.18.36.27.36.35.35.47.32.59.28.73.21.88.14 1.04.05 1.23-.06 1.23-.16 1.04-.24.86-.32.71-.36.57-.4.45-.42.33-.42.24-.4.16-.36.09-.32.05-.24.02-.16-.01h-8.22v.82h5.84l.01 2.76.02.36-.05.34-.11.31-.17.29-.25.25-.31.24-.38.2-.44.17-.51.15-.58.13-.64.09-.71.07-.77.04-.84.01-1.27-.04-1.07-.14-.9-.2-.73-.25-.59-.3-.45-.33-.34-.34-.25-.34-.16-.33-.1-.3-.04-.25-.02-.2.01-.13v-5.34l.05-.64.13-.54.21-.46.26-.38.3-.32.33-.24.35-.2.35-.14.33-.1.3-.06.26-.04.21-.02.13-.01h5.84l.69-.05.59-.14.5-.21.41-.28.33-.32.27-.35.2-.36.15-.36.1-.35.07-.32.04-.28.02-.21V6.07h2.09l.14.01zm-6.47 14.25l-.23.33-.08.41.08.41.23.33.33.23.41.08.41-.08.33-.23.23-.33.08-.41-.08-.41-.23-.33-.33-.23-.41-.08-.41.08z"/></svg><span class="t" style="left:662px;top:58px;font-size:15.75px;line-height:17px;color:#a9b1d6;letter-spacing:0.109px;">dataVisualization.py</span><svg class="ic" style="left:814px;top:58.2px" width="16" height="16" viewBox="-8 -8 16 16"><path d="M-5.4 -5.4L5.4 5.4M5.4 -5.4L-5.4 5.4" stroke="#a9b1d6" stroke-width="1.4" fill="none"/></svg><div class="a" style="left:621.6px;top:85.8px;width:217.6px;height:2.4px;background:#3d59a1;"></div><svg class="ic" style="left:858.4px;top:58.6px" width="13.6" height="13.6" viewBox="0 0 24 24" ><path fill="#519aba" d="M14.25.18l.9.2.73.26.59.3.45.32.34.34.25.34.16.33.1.3.04.26.02.2-.01.13V8.5l-.05.63-.13.55-.21.46-.26.38-.3.31-.33.25-.35.19-.35.14-.33.1-.3.07-.26.04-.21.02H8.77l-.69.05-.59.14-.5.22-.41.27-.33.32-.27.35-.2.36-.15.37-.1.35-.07.32-.04.27-.02.21v3.06H3.17l-.21-.03-.28-.07-.32-.12-.35-.18-.36-.26-.36-.36-.35-.46-.32-.59-.28-.73-.21-.88-.14-1.05-.05-1.23.06-1.22.16-1.04.24-.87.32-.71.36-.57.4-.44.42-.33.42-.24.4-.16.36-.1.32-.05.24-.01h.16l.06.01h8.16v-.83H6.18l-.01-2.75-.02-.37.05-.34.11-.31.17-.28.25-.26.31-.23.38-.2.44-.18.51-.15.58-.12.64-.1.71-.06.77-.04.84-.02 1.27.05zm-6.3 1.98l-.23.33-.08.41.08.41.23.34.33.22.41.09.41-.09.33-.22.23-.34.08-.41-.08-.41-.23-.33-.33-.22-.41-.09-.41.09zm13.09 3.95l.28.06.32.12.35.18.36.27.36.35.35.47.32.59.28.73.21.88.14 1.04.05 1.23-.06 1.23-.16 1.04-.24.86-.32.71-.36.57-.4.45-.42.33-.42.24-.4.16-.36.09-.32.05-.24.02-.16-.01h-8.22v.82h5.84l.01 2.76.02.36-.05.34-.11.31-.17.29-.25.25-.31.24-.38.2-.44.17-.51.15-.58.13-.64.09-.71.07-.77.04-.84.01-1.27-.04-1.07-.14-.9-.2-.73-.25-.59-.3-.45-.33-.34-.34-.25-.34-.16-.33-.1-.3-.04-.25-.02-.2.01-.13v-5.34l.05-.64.13-.54.21-.46.26-.38.3-.32.33-.24.35-.2.35-.14.33-.1.3-.06.26-.04.21-.02.13-.01h5.84l.69-.05.59-.14.5-.21.41-.28.33-.32.27-.35.2-.36.15-.36.1-.35.07-.32.04-.28.02-.21V6.07h2.09l.14.01zm-6.47 14.25l-.23.33-.08.41.08.41.23.33.33.23.41.08.41-.08.33-.23.23-.33.08-.41-.08-.41-.23-.33-.33-.23-.41-.08-.41.08z"/></svg><span class="t" style="left:881px;top:58px;font-size:15.75px;line-height:17px;color:#787c99;letter-spacing:0.272px;">report.py</span><svg class="ic" style="left:1000px;top:52px" width="110" height="28" viewBox="1000 52 110 28"><g fill="none" stroke="#787c99" stroke-width="1.3" stroke-linejoin="round"><path d="M1009.200 59.200v14.400l11.200-7.200z"/><path d="M1030.500 64l4.400 4.400 4.400-4.400" stroke-width="1.200"/><rect x="1056.700" y="57.600" width="15.600" height="15.200" rx="1.600"/><path d="M1064.500 57.600v15.200"/></g></svg><svg class="ic" style="left:1086.5px;top:62px" width="20" height="8" viewBox="-10 -4 20 8"><g fill="#787c99"><circle cx="-5.6" cy="0" r="1.25"/><circle cx="0" cy="0" r="1.25"/><circle cx="5.6" cy="0" r="1.25"/></g></svg><div class="a" style="left:330px;top:88.2px;width:796px;height:26px;background:#16161e;"></div><span class="t" style="left:350.2px;top:94px;font-size:15.75px;line-height:17px;color:#515670;letter-spacing:0.159px;">software</span><svg class="ic" style="left:412.5px;top:92.7px" width="20" height="20" viewBox="-10 -10 20 20"><path d="M-2.8499999999999996 -5.699999999999999 L2.8499999999999996 0 L-2.8499999999999996 5.699999999999999" fill="none" stroke="#515670" stroke-width="1.2"/></svg><svg class="ic" style="left:437px;top:95px" width="13.4" height="13.4" viewBox="0 0 24 24" ><path fill="#519aba" d="M14.25.18l.9.2.73.26.59.3.45.32.34.34.25.34.16.33.1.3.04.26.02.2-.01.13V8.5l-.05.63-.13.55-.21.46-.26.38-.3.31-.33.25-.35.19-.35.14-.33.1-.3.07-.26.04-.21.02H8.77l-.69.05-.59.14-.5.22-.41.27-.33.32-.27.35-.2.36-.15.37-.1.35-.07.32-.04.27-.02.21v3.06H3.17l-.21-.03-.28-.07-.32-.12-.35-.18-.36-.26-.36-.36-.35-.46-.32-.59-.28-.73-.21-.88-.14-1.05-.05-1.23.06-1.22.16-1.04.24-.87.32-.71.36-.57.4-.44.42-.33.42-.24.4-.16.36-.1.32-.05.24-.01h.16l.06.01h8.16v-.83H6.18l-.01-2.75-.02-.37.05-.34.11-.31.17-.28.25-.26.31-.23.38-.2.44-.18.51-.15.58-.12.64-.1.71-.06.77-.04.84-.02 1.27.05zm-6.3 1.98l-.23.33-.08.41.08.41.23.34.33.22.41.09.41-.09.33-.22.23-.34.08-.41-.08-.41-.23-.33-.33-.22-.41-.09-.41.09zm13.09 3.95l.28.06.32.12.35.18.36.27.36.35.35.47.32.59.28.73.21.88.14 1.04.05 1.23-.06 1.23-.16 1.04-.24.86-.32.71-.36.57-.4.45-.42.33-.42.24-.4.16-.36.09-.32.05-.24.02-.16-.01h-8.22v.82h5.84l.01 2.76.02.36-.05.34-.11.31-.17.29-.25.25-.31.24-.38.2-.44.17-.51.15-.58.13-.64.09-.71.07-.77.04-.84.01-1.27-.04-1.07-.14-.9-.2-.73-.25-.59-.3-.45-.33-.34-.34-.25-.34-.16-.33-.1-.3-.04-.25-.02-.2.01-.13v-5.34l.05-.64.13-.54.21-.46.26-.38.3-.32.33-.24.35-.2.35-.14.33-.1.3-.06.26-.04.21-.02.13-.01h5.84l.69-.05.59-.14.5-.21.41-.28.33-.32.27-.35.2-.36.15-.36.1-.35.07-.32.04-.28.02-.21V6.07h2.09l.14.01zm-6.47 14.25l-.23.33-.08.41.08.41.23.33.33.23.41.08.41-.08.33-.23.23-.33.08-.41-.08-.41-.23-.33-.33-.23-.41-.08-.41.08z"/></svg><span class="t" style="left:459px;top:94px;font-size:15.75px;line-height:17px;color:#515670;letter-spacing:0.109px;">dataVisualization.py</span><svg class="ic" style="left:602px;top:92.7px" width="20" height="20" viewBox="-10 -10 20 20"><path d="M-2.8499999999999996 -5.699999999999999 L2.8499999999999996 0 L-2.8499999999999996 5.699999999999999" fill="none" stroke="#515670" stroke-width="1.2"/></svg><svg class="ic" style="left:622.5px;top:91.9px" width="17" height="18" viewBox="0 0 17 18"><g fill="none" stroke="#bb9af7" stroke-width="1.4" stroke-linejoin="round"><path d="M8.500 1.200L15.400 4.800v8.200L8.500 16.800 1.600 13V4.800z"/><path d="M1.800 4.900l6.700 3.600 6.700-3.600M8.500 8.500v8.100"/></g></svg><span class="t" style="left:645px;top:94px;font-size:15.75px;line-height:17px;color:#515670;letter-spacing:0.117px;">line</span><div class="a" style="left:330px;top:114px;width:796px;height:1px;background:#101014;"></div><div class="a" style="left:330px;top:115px;width:796px;height:936px;background:#1a1b26;"></div><div class="a" style="left:415.3px;top:637.5px;width:1px;height:413.5px;background:#232433;"></div><div class="a code" style="left:330px;top:115px;width:704px;height:936px;overflow:hidden"><div class="num" style="left:-6.699999999999989px;width:60px;top:1px;">1</div><div class="ln" style="left:85px;top:1px"><span class="k">from</span> <span class="v">tkinter</span> <span class="k">import</span> <span class="u">messagebox</span></div><div class="num" style="left:-6.699999999999989px;width:60px;top:25px;">2</div><div class="ln" style="left:85px;top:25px"><span class="k">from</span> <span class="v">tkinter</span> <span class="k">import</span> <span class="o">*</span></div><div class="num" style="left:-6.699999999999989px;width:60px;top:49px;">3</div><div class="ln" style="left:85px;top:49px"><span class="k">from</span> <span class="v">matplotlib</span><span class="o">.</span><span class="v">gridspec</span> <span class="k">import</span> <span class="u">GridSpec</span></div><div class="num" style="left:-6.699999999999989px;width:60px;top:72px;">4</div><div class="ln" style="left:85px;top:72px"><span class="k">from</span> <span class="v">functools</span> <span class="k">import</span> <span class="u">partial</span></div><div class="num" style="left:-6.699999999999989px;width:60px;top:96px;">5</div><div class="ln" style="left:85px;top:96px"><span class="k">import</span> <span class="v">matplotlib</span><span class="o">.</span><span class="v">pyplot</span> <span class="k">as</span> <span class="v">plt</span></div><div class="num" style="left:-6.699999999999989px;width:60px;top:120px;">6</div><div class="ln" style="left:85px;top:120px"><span class="k">import</span> <span class="u">matplotlib</span></div><div class="num" style="left:-6.699999999999989px;width:60px;top:144px;">7</div><div class="ln" style="left:85px;top:144px"><span class="k">import</span> <span class="v">numpy</span> <span class="k">as</span> <span class="u">np</span></div><div class="num" style="left:-6.699999999999989px;width:60px;top:167px;">8</div><div class="ln" style="left:85px;top:167px"><span class="k">import</span> <span class="u">report</span></div><div class="num" style="left:-6.699999999999989px;width:60px;top:191px;">9</div><div class="ln" style="left:85px;top:191px"><span class="k">import</span> <span class="u">datetime</span></div><div class="num" style="left:-6.699999999999989px;width:60px;top:215px;">10</div><div class="ln" style="left:85px;top:215px"><span class="k">from</span> <span class="v">datetime</span> <span class="k">import</span> <span class="u">datetime</span><span class="o">,</span> <span class="u">timedelta</span><span class="o">,</span><span class="u">date</span></div><div class="num" style="left:-6.699999999999989px;width:60px;top:239px;">11</div><div class="ln" style="left:85px;top:239px"><span class="c">#========================================================================</span></div><div class="num" style="left:-6.699999999999989px;width:60px;top:262px;">12</div><div class="ln" style="left:85px;top:262px"><span class="v">colors</span><span class="o">=</span><span class="b1">[</span><span class="q">"</span><span class="s">#fde725</span><span class="q">"</span><span class="o">,</span><span class="q">"</span><span class="s">#5ec962</span><span class="q">"</span><span class="o">,</span><span class="q">"</span><span class="s">#21918c</span><span class="q">"</span><span class="o">,</span><span class="q">"</span><span class="s">#3b528b</span><span class="q">"</span><span class="o">,</span><span class="q">"</span><span class="s">#440154</span><span class="q">"</span><span class="o">,</span><span class="q">"</span><span class="s">#f89540</span><span class="q">"</span><span class="o">,</span><span class="q">"</span><span class="s">#cc4778</span><span class="q">"</span><span class="b1">]</span></div><div class="num" style="left:-6.699999999999989px;width:60px;top:286px;">13</div><div class="ln" style="left:85px;top:286px"><span class="c">#========================================================================</span></div><div class="num" style="left:-6.699999999999989px;width:60px;top:310px;">14</div><div class="ln" style="left:85px;top:310px"><span class="k">import</span> <span class="v">mysql</span><span class="o">.</span><span class="v">connector</span> <span class="k">as</span> <span class="v">my</span></div><div class="num" style="left:-6.699999999999989px;width:60px;top:334px;">15</div><div class="ln" style="left:85px;top:334px"><span class="v">mycon</span><span class="o">=</span><span class="v">my</span><span class="o">.</span><span class="f">connect</span><span class="b1">(</span><span class="p">host</span><span class="o">=</span><span class="q">'</span><span class="s">localhost</span><span class="q">'</span><span class="o">,</span><span class="p">user</span><span class="o">=</span><span class="q">'</span><span class="s">root</span><span class="q">'</span><span class="o">,</span><span class="p">passwd</span><span class="o">=</span><span class="q">'</span><span class="s">tejas123</span><span class="q">'</span><span class="o">,</span><span class="p">database</span><span class="o">=</span><span class="q">'</span><span class="s">dataverse</span><span class="q">'</span><span class="b1">)</span></div><div class="num" style="left:-6.699999999999989px;width:60px;top:357px;">16</div><div class="ln" style="left:85px;top:357px"><span class="v">cursor</span><span class="o">=</span><span class="v">mycon</span><span class="o">.</span><span class="f">cursor</span><span class="b1">(</span><span class="b1">)</span></div><div class="num" style="left:-6.699999999999989px;width:60px;top:381px;">17</div><div class="ln" style="left:85px;top:381px"><span class="c">#========================================================================</span></div><div class="num" style="left:-6.699999999999989px;width:60px;top:405px;">18</div><div class="ln" style="left:85px;top:405px"><span class="v">x</span> <span class="o">=</span> <span class="b1">[</span><span class="b1">]</span></div><div class="num" style="left:-6.699999999999989px;width:60px;top:429px;">19</div><div class="ln" style="left:85px;top:429px"><span class="v">y</span> <span class="o">=</span> <span class="b1">[</span><span class="b1">]</span></div><div class="num" style="left:-6.699999999999989px;width:60px;top:452px;">20</div><div class="ln" style="left:85px;top:452px"><span class="v">d_attr</span><span class="o">=</span><span class="b1">[</span><span class="b1">]</span></div><div class="num" style="left:-6.699999999999989px;width:60px;top:476px;">21</div><div class="ln" style="left:85px;top:476px"><span class="v">count</span><span class="o">=</span><span class="n">0</span></div><div class="num" style="left:-6.699999999999989px;width:60px;top:500px;">22</div><div class="ln" style="left:85px;top:500px"><span class="d">def</span> <span class="f">line</span><span class="b1">(</span><span class="p">c</span><span class="b1">)</span><span class="o">:</span></div><div class="num" style="left:-6.699999999999989px;width:60px;top:524px;">23</div><div class="ln" style="left:85px;top:524px">    <span class="k">import</span> <span class="v">mainGUI</span></div><div class="num" style="left:-6.699999999999989px;width:60px;top:547px;">24</div><div class="ln" style="left:85px;top:547px">    <span class="v">form</span><span class="o">=</span><span class="f">Frame</span><span class="b1">(</span><span class="v">mainGUI</span><span class="o">.</span><span class="v">root</span><span class="o">,</span><span class="p">bg</span><span class="o">=</span><span class="q">"</span><span class="s">#171717</span><span class="q">"</span><span class="o">,</span><span class="p">relief</span><span class="o">=</span><span class="C">SUNKEN</span><span class="b1">)</span></div><div class="num" style="left:-6.699999999999989px;width:60px;top:571px;">25</div><div class="ln" style="left:85px;top:571px">    <span class="v">form</span><span class="o">.</span><span class="f">pack</span><span class="b1">(</span><span class="p">side</span><span class="o">=</span><span class="C">TOP</span><span class="o">,</span><span class="p">fill</span><span class="o">=</span><span class="p">Y</span><span class="o">,</span><span class="p">pady</span><span class="o">=</span><span class="n">140</span><span class="o">,</span><span class="p">padx</span><span class="o">=</span><span class="b2">(</span><span class="n">0</span><span class="o">,</span><span class="n">200</span><span class="b2">)</span><span class="b1">)</span></div><div class="num" style="left:-6.699999999999989px;width:60px;top:595px;">26</div><div class="ln" style="left:85px;top:595px">    <span class="c">#global title</span></div><div class="num" style="left:-6.699999999999989px;width:60px;top:619px;">27</div><div class="ln" style="left:85px;top:619px">    <span class="c">#title.pack_forget()</span></div><div class="num" style="left:-6.699999999999989px;width:60px;top:642px;">28</div><div class="num" style="left:-6.699999999999989px;width:60px;top:666px;">29</div><div class="ln" style="left:85px;top:666px">    <span class="v">title_var</span><span class="o">=</span><span class="f">StringVar</span><span class="b1">(</span><span class="b1">)</span></div><div class="num" style="left:-6.699999999999989px;width:60px;top:690px;">30</div><div class="ln" style="left:85px;top:690px">    <span class="v">x_var</span><span class="o">=</span><span class="f">StringVar</span><span class="b1">(</span><span class="b1">)</span></div><div class="num" style="left:-6.699999999999989px;width:60px;top:714px;">31</div><div class="ln" style="left:85px;top:714px">    <span class="v">y_var</span><span class="o">=</span><span class="f">IntVar</span><span class="b1">(</span><span class="b1">)</span></div><div class="num" style="left:-6.699999999999989px;width:60px;top:737px;">32</div><div class="ln" style="left:85px;top:737px">    <span class="v">title_label</span> <span class="o">=</span> <span class="f">Label</span><span class="b1">(</span><span class="v">form</span><span class="o">,</span> <span class="p">text</span> <span class="o">=</span> <span class="q">'</span><span class="s">Title: </span><span class="q">'</span><span class="o">,</span> <span class="p">font</span><span class="o">=</span><span class="b2">(</span><span class="q">'</span><span class="s">calibre</span><span class="q">'</span><span class="o">,</span><span class="n">10</span><span class="o">,</span> <span class="q">'</span><span class="s">bold</span><span class="q">'</span><span class="b2">)</span><span class="b1">)</span></div><div class="num" style="left:-6.699999999999989px;width:60px;top:761px;">33</div><div class="ln" style="left:85px;top:761px">    <span class="v">title_entry</span> <span class="o">=</span> <span class="f">Entry</span><span class="b1">(</span><span class="v">form</span><span class="o">,</span><span class="p">textvariable</span> <span class="o">=</span> <span class="v">title_var</span><span class="o">,</span> <span class="p">font</span><span class="o">=</span><span class="b2">(</span><span class="q">'</span><span class="s">calibre</span><span class="q">'</span><span class="o">,</span><span class="n">10</span><span class="o">,</span><span class="q">'</span><span class="s">normal</span><span class="q">'</span><span class="b2">)</span><span class="b1">)</span></div><div class="num" style="left:-6.699999999999989px;width:60px;top:785px;">34</div><div class="ln" style="left:85px;top:785px">    <span class="v">x_label</span> <span class="o">=</span> <span class="f">Label</span><span class="b1">(</span><span class="v">form</span><span class="o">,</span> <span class="p">text</span> <span class="o">=</span> <span class="q">'</span><span class="s">Name of independent variable: </span><span class="q">'</span><span class="o">,</span> <span class="p">font</span> <span class="o">=</span> <span class="b2">(</span><span class="q">'</span><span class="s">calibre</span><span class="q">'</span><span class="o">,</span><span class="n">10</span><span class="o">,</span><span class="q">'</span><span class="s">bold</span><span class="q">'</span><span class="b2">)</span><span class="b1">)</span></div><div class="num" style="left:-6.699999999999989px;width:60px;top:809px;">35</div><div class="ln" style="left:85px;top:809px">    <span class="v">x_entry</span><span class="o">=</span><span class="f">Entry</span><span class="b1">(</span><span class="v">form</span><span class="o">,</span> <span class="p">textvariable</span> <span class="o">=</span> <span class="v">x_var</span><span class="o">,</span> <span class="p">font</span> <span class="o">=</span> <span class="b2">(</span><span class="q">'</span><span class="s">calibre</span><span class="q">'</span><span class="o">,</span><span class="n">10</span><span class="o">,</span><span class="q">'</span><span class="s">normal</span><span class="q">'</span><span class="b2">)</span><span class="b1">)</span></div><div class="num" style="left:-6.699999999999989px;width:60px;top:832px;">36</div><div class="ln" style="left:85px;top:832px">    <span class="v">y_label</span> <span class="o">=</span> <span class="f">Label</span><span class="b1">(</span><span class="v">form</span><span class="o">,</span> <span class="p">text</span> <span class="o">=</span> <span class="q">'</span><span class="s">No. of dependent variables: </span><span class="q">'</span><span class="o">,</span> <span class="p">font</span> <span class="o">=</span> <span class="b2">(</span><span class="q">'</span><span class="s">calibre</span><span class="q">'</span><span class="o">,</span><span class="n">10</span><span class="o">,</span><span class="q">'</span><span class="s">bold</span><span class="q">'</span><span class="b2">)</span><span class="b1">)</span></div><div class="num" style="left:-6.699999999999989px;width:60px;top:856px;">37</div><div class="ln" style="left:85px;top:856px">    <span class="v">y_entry</span><span class="o">=</span><span class="f">Entry</span><span class="b1">(</span><span class="v">form</span><span class="o">,</span> <span class="p">textvariable</span> <span class="o">=</span> <span class="v">y_var</span><span class="o">,</span> <span class="p">font</span> <span class="o">=</span> <span class="b2">(</span><span class="q">'</span><span class="s">calibre</span><span class="q">'</span><span class="o">,</span><span class="n">10</span><span class="o">,</span><span class="q">'</span><span class="s">normal</span><span class="q">'</span><span class="b2">)</span><span class="b1">)</span></div><div class="num" style="left:-6.699999999999989px;width:60px;top:880px;">38</div><div class="ln" style="left:85px;top:880px">    <span class="v">title_label</span><span class="o">.</span><span class="f">grid</span><span class="b1">(</span><span class="p">row</span><span class="o">=</span><span class="n">0</span><span class="o">,</span><span class="p">column</span><span class="o">=</span><span class="n">0</span><span class="b1">)</span></div><div class="num" style="left:-6.699999999999989px;width:60px;top:904px;">39</div><div class="ln" style="left:85px;top:904px">    <span class="v">title_entry</span><span class="o">.</span><span class="f">grid</span><span class="b1">(</span><span class="p">row</span><span class="o">=</span><span class="n">0</span><span class="o">,</span><span class="p">column</span><span class="o">=</span><span class="n">1</span><span class="b1">)</span></div><div class="num" style="left:-6.699999999999989px;width:60px;top:927px;">40</div><div class="ln" style="left:85px;top:927px">    <span class="v">x_label</span><span class="o">.</span><span class="f">grid</span><span class="b1">(</span><span class="p">row</span><span class="o">=</span><span class="n">1</span><span class="o">,</span><span class="p">column</span><span class="o">=</span><span class="n">0</span><span class="b1">)</span></div></div><svg class="ic" style="left:1041.5px;top:115px" width="66.500" height="936" viewBox="0 0 66.500 936"><rect x="0" y="0" width="66.500" height="80" fill="#868bc4" fill-opacity="0.03"/><path fill="none" stroke="#4a5275" stroke-width="1.1" stroke-opacity="0.8" d="M0 21.4h66M0 25.4h66M0 33.4h66"/><g fill="none" stroke-width="1.2" stroke-opacity="0.5" stroke-dasharray="1.7 0.8"><path stroke="#7dcfff" d="M0 1.4h4M13 1.4h6M0 3.4h4M13 3.4h6M0 5.4h4M25 5.4h6M0 7.4h4M15 7.4h6M0 9.4h6M25 9.4h2M0 11.4h6M0 13.4h6M13 13.4h2M0 15.4h6M0 17.4h6M0 19.4h4M14 19.4h6M0 27.4h6M23 27.4h2M4 45.4h6"/><path stroke="#c0caf5" d="M5 1.4h7M5 3.4h7M5 5.4h10M16 5.4h8M5 7.4h9M7 9.4h10M18 9.4h6M28 9.4h3M7 13.4h5M5 19.4h8M0 23.4h6M7 27.4h5M13 27.4h9M26 27.4h2M0 29.4h5M6 29.4h2M0 31.4h6M7 31.4h5M0 35.4h1M0 37.4h1M0 39.4h6M0 41.4h5M11 45.4h7M4 47.4h4M15 47.4h7M23 47.4h4M4 49.4h4M4 57.4h9M4 59.4h5M4 61.4h5M4 63.4h11M24 63.4h4M4 65.4h11M24 65.4h4M44 65.4h9M4 67.4h7M20 67.4h4M4 69.4h7M18 69.4h4M39 69.4h5M4 71.4h7M20 71.4h4M4 73.4h7M18 73.4h4M39 73.4h5M4 75.4h11M4 77.4h11M4 79.4h7M4 81.4h7M4 83.4h7M4 85.4h7M4 87.4h7M4 89.4h7M19 89.4h4M54 89.4h11M4 91.4h7M4 95.4h4M4 103.4h5M10 103.4h9M4 105.4h6M11 105.4h5M4 107.4h7M12 107.4h5M4 109.4h4M15 109.4h7M23 109.4h4M4 111.4h4M8 113.4h1M19 113.4h7M8 115.4h6M14 117.4h4M14 119.4h4M35 119.4h6M42 119.4h1M55 119.4h1M7 121.4h5M8 123.4h10M8 129.4h4M11 131.4h5M11 133.4h5M8 135.4h5M12 139.4h1M23 139.4h5M12 141.4h1M21 141.4h6M8 143.4h6M12 147.4h1M23 147.4h7M12 149.4h3M21 149.4h1M23 149.4h1M25 149.4h1M34 149.4h6M41 149.4h1M50 149.4h6M57 149.4h1M12 151.4h3M12 153.4h1M27 153.4h1M12 155.4h3M29 155.4h1M31 155.4h1M34 155.4h1M39 155.4h1M41 155.4h1M44 155.4h1M46 155.4h1M49 155.4h1M12 157.4h3M11 159.4h1M12 161.4h3M16 165.4h1M27 165.4h7M16 167.4h3M12 169.4h4M17 169.4h1M16 171.4h3M12 173.4h4M17 173.4h1M16 175.4h3M12 177.4h4M17 177.4h1M16 179.4h3M8 181.4h5M8 183.4h6M19 183.4h5M25 183.4h6M32 183.4h6M39 183.4h1M41 183.4h1M43 183.4h1M8 185.4h1M8 187.4h1M8 189.4h6M8 191.4h5M8 193.4h4M8 195.4h7M15 197.4h5M22 197.4h6M4 201.4h4"/><path stroke="#71768f" d="M20 1.4h10M32 5.4h8M22 7.4h7M7 11.4h10M16 13.4h2M7 15.4h6M7 17.4h8M21 19.4h8M31 19.4h9M41 19.4h4"/><path stroke="#89ddff" d="M20 3.4h1M15 5.4h1M17 9.4h1M29 19.4h1M40 19.4h1M6 23.4h1M8 23.4h1M16 23.4h1M17 23.4h1M18 23.4h1M26 23.4h1M27 23.4h1M28 23.4h1M36 23.4h1M37 23.4h1M38 23.4h1M46 23.4h1M47 23.4h1M48 23.4h1M56 23.4h1M57 23.4h1M58 23.4h1M12 27.4h1M5 29.4h1M8 29.4h1M21 29.4h1M22 29.4h1M32 29.4h1M33 29.4h1M38 29.4h1M39 29.4h1M44 29.4h1M45 29.4h1M52 29.4h1M53 29.4h1M62 29.4h1M63 29.4h1M6 31.4h1M12 31.4h1M2 35.4h1M2 37.4h1M6 39.4h1M5 41.4h1M11 43.4h1M8 47.4h1M22 47.4h1M27 47.4h1M30 47.4h1M31 47.4h1M39 47.4h1M40 47.4h1M47 47.4h1M8 49.4h1M18 49.4h1M22 49.4h1M27 49.4h1M29 49.4h1M34 49.4h1M38 49.4h1M43 49.4h1M46 49.4h1M13 57.4h1M9 59.4h1M9 61.4h1M16 63.4h1M28 63.4h1M35 63.4h1M37 63.4h1M45 63.4h1M46 63.4h1M52 63.4h1M54 63.4h1M62 63.4h1M63 63.4h1M16 65.4h1M28 65.4h1M42 65.4h1M53 65.4h1M59 65.4h1M61 65.4h1M12 67.4h1M24 67.4h1M31 67.4h1M33 67.4h1M64 67.4h1M65 67.4h1M11 69.4h1M22 69.4h1M37 69.4h1M44 69.4h1M51 69.4h1M54 69.4h1M62 69.4h1M63 69.4h1M12 71.4h1M24 71.4h1M31 71.4h1M33 71.4h1M62 71.4h1M63 71.4h1M11 73.4h1M22 73.4h1M37 73.4h1M44 73.4h1M51 73.4h1M54 73.4h1M62 73.4h1M63 73.4h1M15 75.4h1M24 75.4h1M26 75.4h1M33 75.4h1M15 77.4h1M24 77.4h1M26 77.4h1M33 77.4h1M11 79.4h1M20 79.4h1M22 79.4h1M29 79.4h1M11 81.4h1M20 81.4h1M22 81.4h1M29 81.4h1M11 83.4h1M20 83.4h1M22 83.4h1M29 83.4h1M11 85.4h1M20 85.4h1M22 85.4h1M29 85.4h1M11 87.4h1M20 87.4h1M22 87.4h1M29 87.4h1M11 89.4h1M23 89.4h1M28 89.4h1M29 89.4h1M36 89.4h1M37 89.4h1M45 89.4h1M65 89.4h1M11 91.4h1M20 91.4h1M22 91.4h1M29 91.4h1M8 95.4h1M17 101.4h1M27 101.4h1M33 101.4h1M40 101.4h1M9 103.4h1M19 103.4h1M10 105.4h1M16 105.4h1M11 107.4h1M17 107.4h1M8 109.4h1M22 109.4h1M27 109.4h1M30 109.4h1M31 109.4h1M39 109.4h1M8 111.4h1M18 111.4h1M22 111.4h1M27 111.4h1M27 113.4h1M14 115.4h1M18 117.4h1M25 117.4h1M27 117.4h1M59 117.4h1M60 117.4h1M18 119.4h1M33 119.4h1M45 119.4h1M54 119.4h1M56 119.4h1M63 119.4h1M12 121.4h1M13 121.4h1M15 121.4h1M18 123.4h1M28 123.4h1M33 123.4h1M34 123.4h1M36 123.4h1M8 127.4h1M16 133.4h1M13 135.4h1M14 135.4h1M23 135.4h1M8 137.4h1M29 139.4h1M13 141.4h1M27 141.4h1M14 143.4h1M23 143.4h1M42 143.4h1M31 147.4h1M15 149.4h1M22 149.4h1M27 149.4h1M33 149.4h1M43 149.4h1M49 149.4h1M59 149.4h1M65 149.4h1M15 151.4h1M30 153.4h1M15 155.4h1M37 155.4h1M43 155.4h1M15 157.4h1M12 159.4h1M13 159.4h1M15 159.4h1M15 161.4h1M12 163.4h1M35 165.4h1M19 167.4h1M28 167.4h1M44 167.4h1M45 167.4h1M58 167.4h1M59 167.4h1M65 167.4h1M18 169.4h1M19 169.4h1M21 169.4h1M19 171.4h1M28 171.4h1M43 171.4h1M44 171.4h1M57 171.4h1M58 171.4h1M64 171.4h1M65 171.4h1M18 173.4h1M19 173.4h1M21 173.4h1M19 175.4h1M28 175.4h1M43 175.4h1M44 175.4h1M57 175.4h1M58 175.4h1M64 175.4h1M65 175.4h1M18 177.4h1M19 177.4h1M21 177.4h1M19 179.4h1M28 179.4h1M47 179.4h1M48 179.4h1M61 179.4h1M62 179.4h1M13 181.4h1M14 181.4h1M14 183.4h1M24 183.4h1M31 183.4h1M38 183.4h1M40 183.4h1M42 183.4h1M44 183.4h1M46 183.4h1M57 183.4h1M58 183.4h1M60 183.4h1M9 185.4h1M9 187.4h1M14 189.4h1M13 191.4h1M12 193.4h1M15 195.4h1M24 195.4h1M29 195.4h1M30 195.4h1M32 195.4h1M48 195.4h1M20 197.4h1M28 197.4h1M30 197.4h1M35 197.4h1M36 197.4h1M38 197.4h1M45 197.4h1M46 197.4h1M49 197.4h1M8 201.4h1"/><path stroke="#698cd6" d="M7 23.4h1M16 29.4h1M19 31.4h1M20 31.4h1M4 35.4h1M5 35.4h1M4 37.4h1M5 37.4h1M7 39.4h1M8 39.4h1M8 43.4h1M10 43.4h1M14 47.4h1M54 47.4h1M13 49.4h1M51 49.4h1M23 57.4h1M24 57.4h1M19 59.4h1M20 59.4h1M16 61.4h1M17 61.4h1M23 63.4h1M23 65.4h1M19 67.4h1M17 69.4h1M19 71.4h1M17 73.4h1M20 75.4h1M35 75.4h1M20 77.4h1M35 77.4h1M16 79.4h1M31 79.4h1M16 81.4h1M31 81.4h1M16 83.4h1M31 83.4h1M16 85.4h1M31 85.4h1M16 87.4h1M31 87.4h1M18 89.4h1M16 91.4h1M31 91.4h1M17 95.4h1M18 95.4h1M15 101.4h1M39 101.4h1M23 103.4h1M24 103.4h1M20 105.4h1M21 105.4h1M21 107.4h1M22 107.4h1M14 109.4h1M40 109.4h1M13 111.4h1M29 111.4h1M18 113.4h1M26 113.4h1M21 115.4h1M33 115.4h1M13 117.4h1M13 119.4h1M44 119.4h1M50 119.4h1M65 119.4h1M27 123.4h1M22 139.4h1M28 139.4h1M20 141.4h1M38 141.4h1M22 143.4h1M43 143.4h1M22 147.4h1M30 147.4h1M20 149.4h1M22 151.4h1M23 151.4h1M22 153.4h1M29 153.4h1M24 155.4h1M52 155.4h1M28 157.4h1M29 157.4h1M20 161.4h1M21 161.4h1M26 165.4h1M34 165.4h1M27 167.4h1M27 171.4h1M27 175.4h1M27 179.4h1M18 183.4h1M15 185.4h1M16 185.4h1M15 187.4h1M16 187.4h1M20 189.4h1M21 189.4h1M20 191.4h1M21 191.4h1M20 193.4h1M21 193.4h1M23 195.4h1M49 195.4h1M17 201.4h1M18 201.4h1"/><path stroke="#9ece6a" d="M9 23.4h7M19 23.4h7M29 23.4h7M39 23.4h7M49 23.4h7M59 23.4h7M23 29.4h9M40 29.4h4M54 29.4h8M32 47.4h7M38 63.4h7M55 63.4h7M62 65.4h4M34 67.4h30M55 69.4h7M34 71.4h28M55 73.4h7M30 89.4h6M32 109.4h7M28 117.4h31M29 123.4h4M37 123.4h29M15 135.4h8M24 143.4h18M29 167.4h15M60 167.4h5M29 171.4h14M59 171.4h5M29 175.4h14M59 175.4h5M29 179.4h18M63 179.4h3M47 183.4h10M61 183.4h5M25 195.4h4M33 195.4h15M31 197.4h4M39 197.4h6"/><path stroke="#7aa2f7" d="M9 29.4h7M13 31.4h6M4 43.4h4M9 47.4h5M9 49.4h4M14 57.4h9M10 59.4h9M10 61.4h6M18 63.4h5M18 65.4h5M14 67.4h5M12 69.4h5M14 71.4h5M12 73.4h5M16 75.4h4M16 77.4h4M12 79.4h4M12 81.4h4M12 83.4h4M12 85.4h4M12 87.4h4M12 89.4h6M46 89.4h7M12 91.4h4M9 95.4h8M4 101.4h11M20 103.4h3M17 105.4h3M18 107.4h3M9 109.4h5M9 111.4h4M15 115.4h6M22 115.4h9M8 117.4h5M61 117.4h5M8 119.4h5M46 119.4h4M19 123.4h8M14 141.4h6M28 141.4h8M15 143.4h7M16 149.4h4M60 149.4h3M16 151.4h6M16 155.4h8M16 157.4h12M16 161.4h4M20 167.4h7M20 171.4h7M20 175.4h7M20 179.4h7M15 183.4h3M10 185.4h5M10 187.4h5M15 189.4h5M14 191.4h6M13 193.4h7M16 195.4h7M9 201.4h8"/><path stroke="#e0af68" d="M17 29.4h4M34 29.4h4M46 29.4h6M64 29.4h2M9 43.4h1M28 47.4h2M41 47.4h6M14 49.4h4M23 49.4h4M28 49.4h1M30 49.4h4M39 49.4h4M30 63.4h4M48 63.4h4M29 65.4h12M55 65.4h4M26 67.4h4M24 69.4h12M46 69.4h4M26 71.4h4M65 71.4h1M24 73.4h12M46 73.4h4M21 75.4h3M27 75.4h6M21 77.4h3M27 77.4h6M17 79.4h3M23 79.4h6M17 81.4h3M23 81.4h6M17 83.4h3M23 83.4h6M17 85.4h3M23 85.4h6M17 87.4h3M23 87.4h6M24 89.4h4M38 89.4h7M17 91.4h3M23 91.4h6M16 101.4h1M18 101.4h9M28 101.4h5M34 101.4h5M28 109.4h2M14 111.4h4M23 111.4h4M28 111.4h1M20 117.4h4M20 119.4h12M51 119.4h3M57 119.4h6M28 149.4h5M44 149.4h5M47 167.4h11M46 171.4h11M46 175.4h11M50 179.4h11"/><path stroke="#ff9e64" d="M6 41.4h1M48 47.4h6M19 49.4h3M35 49.4h3M45 49.4h1M47 49.4h3M64 63.4h2M64 69.4h2M64 73.4h2M25 75.4h1M34 75.4h1M25 77.4h1M34 77.4h1M21 79.4h1M30 79.4h1M21 81.4h1M30 81.4h1M21 83.4h1M30 83.4h1M21 85.4h1M30 85.4h1M21 87.4h1M30 87.4h1M21 91.4h1M30 91.4h1M19 111.4h3M64 119.4h1M14 121.4h1M14 159.4h1M20 169.4h1M20 173.4h1M20 177.4h1M15 181.4h1M48 197.4h1M50 197.4h2"/><path stroke="#bb9af7" d="M0 43.4h3M0 101.4h3M4 113.4h3M10 113.4h2M4 121.4h2M8 125.4h6M4 127.4h4M4 131.4h6M4 133.4h2M7 133.4h3M4 137.4h4M8 139.4h3M14 139.4h2M8 147.4h3M14 147.4h2M8 153.4h3M14 153.4h2M8 159.4h2M8 163.4h4M12 165.4h3M18 165.4h2M8 197.4h6"/><path stroke="#68b3de" d="M44 49.4h1M50 49.4h1M53 63.4h1M60 65.4h1M53 69.4h1M53 73.4h1M53 89.4h1M31 115.4h1M32 115.4h1M41 119.4h1M43 119.4h1M36 141.4h1M37 141.4h1M24 149.4h1M26 149.4h1M40 149.4h1M42 149.4h1M56 149.4h1M58 149.4h1M63 149.4h1M64 149.4h1M26 153.4h1M28 153.4h1M28 155.4h1M36 155.4h1M38 155.4h1M51 155.4h1"/><path stroke="#51597d" d="M4 51.4h13M4 53.4h20M8 199.4h12"/><path stroke="#0db9d7" d="M13 113.4h5M17 139.4h5M17 147.4h5M17 153.4h5M23 153.4h3M25 155.4h3M21 165.4h5"/><path stroke="#9a7ecc" d="M30 155.4h1M32 155.4h1M33 155.4h1M35 155.4h1M40 155.4h1M42 155.4h1M45 155.4h1M47 155.4h1M48 155.4h1M50 155.4h1"/></g></svg><div class="a" style="left:1108.3px;top:115px;width:1px;height:936px;background:#13141c;"></div><div class="a" style="left:1109.5px;top:789.2px;width:15.5px;height:2px;background:#8a8fb3;"></div><div class="a" style="left:1106.6px;top:125px;width:1.5px;height:1.5px;background:#7a4a36;"></div><div class="a" style="left:1106.6px;top:173px;width:1.5px;height:1.5px;background:#7a4a36;"></div><div class="a" style="left:1106.6px;top:186px;width:1.5px;height:1.5px;background:#7a4a36;"></div><div class="a" style="left:1106.6px;top:208px;width:1.5px;height:1.5px;background:#7a4a36;"></div><div class="a" style="left:1106.6px;top:243px;width:1.5px;height:1.5px;background:#7a4a36;"></div><div class="a" style="left:1106.6px;top:270px;width:1.5px;height:1.5px;background:#7a4a36;"></div><div class="a" style="left:1106.6px;top:290px;width:1.5px;height:1.5px;background:#7a4a36;"></div><div class="a" style="left:1106.6px;top:302px;width:1.5px;height:1.5px;background:#7a4a36;"></div><div class="a" style="left:1106.6px;top:316px;width:1.5px;height:1.5px;background:#7a4a36;"></div><div class="a" style="left:1106.6px;top:348px;width:1.5px;height:1.5px;background:#7a4a36;"></div><div class="a" style="left:1106.6px;top:375px;width:1.5px;height:1.5px;background:#7a4a36;"></div><div class="a" style="left:1106.6px;top:410px;width:1.5px;height:1.5px;background:#7a4a36;"></div><div class="a" style="left:1106.6px;top:458.2px;width:1.5px;height:3.5px;background:#c53b53;"></div><div class="a" style="left:1106.6px;top:890px;width:1.5px;height:1.5px;background:#c53b53;"></div><div class="a" style="left:1126px;top:44px;width:1px;height:1008px;background:#101014;"></div><div class="a" style="left:1127px;top:44px;width:793px;height:43px;background:#16161e;"></div><div class="a" style="left:1127px;top:85.8px;width:793px;height:2px;background:#101014;"></div><div class="a" style="left:1127px;top:85.8px;width:176px;height:2.4px;background:#1f2030;"></div><div class="a" style="left:1303px;top:44px;width:1.1px;height:42px;background:#101014;"></div><svg class="ic" style="left:1142.7px;top:58.6px" width="13.6" height="13.6" viewBox="0 0 24 24" ><path fill="#519aba" d="M14.25.18l.9.2.73.26.59.3.45.32.34.34.25.34.16.33.1.3.04.26.02.2-.01.13V8.5l-.05.63-.13.55-.21.46-.26.38-.3.31-.33.25-.35.19-.35.14-.33.1-.3.07-.26.04-.21.02H8.77l-.69.05-.59.14-.5.22-.41.27-.33.32-.27.35-.2.36-.15.37-.1.35-.07.32-.04.27-.02.21v3.06H3.17l-.21-.03-.28-.07-.32-.12-.35-.18-.36-.26-.36-.36-.35-.46-.32-.59-.28-.73-.21-.88-.14-1.05-.05-1.23.06-1.22.16-1.04.24-.87.32-.71.36-.57.4-.44.42-.33.42-.24.4-.16.36-.1.32-.05.24-.01h.16l.06.01h8.16v-.83H6.18l-.01-2.75-.02-.37.05-.34.11-.31.17-.28.25-.26.31-.23.38-.2.44-.18.51-.15.58-.12.64-.1.71-.06.77-.04.84-.02 1.27.05zm-6.3 1.98l-.23.33-.08.41.08.41.23.34.33.22.41.09.41-.09.33-.22.23-.34.08-.41-.08-.41-.23-.33-.33-.22-.41-.09-.41.09zm13.09 3.95l.28.06.32.12.35.18.36.27.36.35.35.47.32.59.28.73.21.88.14 1.04.05 1.23-.06 1.23-.16 1.04-.24.86-.32.71-.36.57-.4.45-.42.33-.42.24-.4.16-.36.09-.32.05-.24.02-.16-.01h-8.22v.82h5.84l.01 2.76.02.36-.05.34-.11.31-.17.29-.25.25-.31.24-.38.2-.44.17-.51.15-.58.13-.64.09-.71.07-.77.04-.84.01-1.27-.04-1.07-.14-.9-.2-.73-.25-.59-.3-.45-.33-.34-.34-.25-.34-.16-.33-.1-.3-.04-.25-.02-.2.01-.13v-5.34l.05-.64.13-.54.21-.46.26-.38.3-.32.33-.24.35-.2.35-.14.33-.1.3-.06.26-.04.21-.02.13-.01h5.84l.69-.05.59-.14.5-.21.41-.28.33-.32.27-.35.2-.36.15-.36.1-.35.07-.32.04-.28.02-.21V6.07h2.09l.14.01zm-6.47 14.25l-.23.33-.08.41.08.41.23.33.33.23.41.08.41-.08.33-.23.23-.33.08-.41-.08-.41-.23-.33-.33-.23-.41-.08-.41.08z"/></svg><span class="t" style="left:1165px;top:58px;font-size:15.75px;line-height:17px;color:#5f80b8;letter-spacing:-0.126px;">mainGUI.py</span><span class="t" style="left:1255.2px;top:58px;font-size:14.9px;line-height:16px;color:#5f80b8;letter-spacing:-0.506px;">M</span><svg class="ic" style="left:1277.5px;top:58.2px" width="16" height="16" viewBox="-8 -8 16 16"><path d="M-5.2 -5.2L5.2 5.2M5.2 -5.2L-5.2 5.2" stroke="#4b4f6b" stroke-width="1.2" fill="none"/></svg><svg class="ic" style="left:1881.7px;top:62px" width="20" height="8" viewBox="-10 -4 20 8"><g fill="#787c99"><circle cx="-5.6" cy="0" r="1.25"/><circle cx="0" cy="0" r="1.25"/><circle cx="5.6" cy="0" r="1.25"/></g></svg><div class="a" style="left:1127px;top:88.2px;width:793px;height:26px;background:#16161e;"></div><span class="t" style="left:1145px;top:94px;font-size:15.75px;line-height:17px;color:#515670;letter-spacing:0.159px;">software</span><svg class="ic" style="left:1207.3px;top:92.7px" width="20" height="20" viewBox="-10 -10 20 20"><path d="M-2.8499999999999996 -5.699999999999999 L2.8499999999999996 0 L-2.8499999999999996 5.699999999999999" fill="none" stroke="#515670" stroke-width="1.2"/></svg><svg class="ic" style="left:1231.8px;top:95px" width="13.4" height="13.4" viewBox="0 0 24 24" ><path fill="#519aba" d="M14.25.18l.9.2.73.26.59.3.45.32.34.34.25.34.16.33.1.3.04.26.02.2-.01.13V8.5l-.05.63-.13.55-.21.46-.26.38-.3.31-.33.25-.35.19-.35.14-.33.1-.3.07-.26.04-.21.02H8.77l-.69.05-.59.14-.5.22-.41.27-.33.32-.27.35-.2.36-.15.37-.1.35-.07.32-.04.27-.02.21v3.06H3.17l-.21-.03-.28-.07-.32-.12-.35-.18-.36-.26-.36-.36-.35-.46-.32-.59-.28-.73-.21-.88-.14-1.05-.05-1.23.06-1.22.16-1.04.24-.87.32-.71.36-.57.4-.44.42-.33.42-.24.4-.16.36-.1.32-.05.24-.01h.16l.06.01h8.16v-.83H6.18l-.01-2.75-.02-.37.05-.34.11-.31.17-.28.25-.26.31-.23.38-.2.44-.18.51-.15.58-.12.64-.1.71-.06.77-.04.84-.02 1.27.05zm-6.3 1.98l-.23.33-.08.41.08.41.23.34.33.22.41.09.41-.09.33-.22.23-.34.08-.41-.08-.41-.23-.33-.33-.22-.41-.09-.41.09zm13.09 3.95l.28.06.32.12.35.18.36.27.36.35.35.47.32.59.28.73.21.88.14 1.04.05 1.23-.06 1.23-.16 1.04-.24.86-.32.71-.36.57-.4.45-.42.33-.42.24-.4.16-.36.09-.32.05-.24.02-.16-.01h-8.22v.82h5.84l.01 2.76.02.36-.05.34-.11.31-.17.29-.25.25-.31.24-.38.2-.44.17-.51.15-.58.13-.64.09-.71.07-.77.04-.84.01-1.27-.04-1.07-.14-.9-.2-.73-.25-.59-.3-.45-.33-.34-.34-.25-.34-.16-.33-.1-.3-.04-.25-.02-.2.01-.13v-5.34l.05-.64.13-.54.21-.46.26-.38.3-.32.33-.24.35-.2.35-.14.33-.1.3-.06.26-.04.21-.02.13-.01h5.84l.69-.05.59-.14.5-.21.41-.28.33-.32.27-.35.2-.36.15-.36.1-.35.07-.32.04-.28.02-.21V6.07h2.09l.14.01zm-6.47 14.25l-.23.33-.08.41.08.41.23.33.33.23.41.08.41-.08.33-.23.23-.33.08-.41-.08-.41-.23-.33-.33-.23-.41-.08-.41.08z"/></svg><span class="t" style="left:1254.5px;top:94px;font-size:15.75px;line-height:17px;color:#515670;letter-spacing:-0.126px;">mainGUI.py</span><svg class="ic" style="left:1337.6px;top:92.7px" width="20" height="20" viewBox="-10 -10 20 20"><path d="M-2.8499999999999996 -5.699999999999999 L2.8499999999999996 0 L-2.8499999999999996 5.699999999999999" fill="none" stroke="#515670" stroke-width="1.2"/></svg><svg class="ic" style="left:1358.5px;top:91.9px" width="17" height="18" viewBox="0 0 17 18"><g fill="none" stroke="#bb9af7" stroke-width="1.4" stroke-linejoin="round"><path d="M8.500 1.200L15.400 4.800v8.200L8.500 16.800 1.600 13V4.800z"/><path d="M1.800 4.900l6.700 3.600 6.700-3.600M8.500 8.500v8.100"/></g></svg><span class="t" style="left:1380.6px;top:94px;font-size:15.75px;line-height:17px;color:#515670;letter-spacing:-0.029px;">view</span><div class="a" style="left:1127px;top:114px;width:793px;height:1px;background:#101014;"></div><div class="a" style="left:1127px;top:115px;width:793px;height:936px;background:#1a1b26;"></div><div class="a" style="left:1210.3px;top:139px;width:1px;height:408.1px;background:#212332;"></div><div class="a" style="left:1248.4px;top:139px;width:1px;height:408.1px;background:#212332;"></div><div class="a" style="left:1210.3px;top:570.85px;width:1px;height:480.15px;background:#212332;"></div><div class="a" style="left:1248.6px;top:594.6px;width:1px;height:456.4px;background:#212332;"></div><div class="a" style="left:1287.1px;top:618.35px;width:1px;height:47.5px;background:#212332;"></div><div class="a" style="left:1287.1px;top:737.1px;width:1px;height:190.0px;background:#212332;"></div><div class="a" style="left:1325.6px;top:737.1px;width:1px;height:190.0px;background:#212332;"></div><div class="a" style="left:1364.1px;top:737.1px;width:1px;height:190.0px;background:#212332;"></div><div class="a" style="left:1402.6px;top:737.1px;width:1px;height:190.0px;background:#212332;"></div><div class="a" style="left:1441.1px;top:737.1px;width:1px;height:190.0px;background:#212332;"></div><div class="a" style="left:1479.6px;top:737.1px;width:1px;height:190.0px;background:#212332;"></div><div class="a" style="left:1518.1px;top:737.1px;width:1px;height:190.0px;background:#212332;"></div><div class="a" style="left:1556.6px;top:737.1px;width:1px;height:190.0px;background:#212332;"></div><div class="a" style="left:1595.1px;top:737.1px;width:1px;height:190.0px;background:#212332;"></div><div class="a" style="left:1633.6px;top:737.1px;width:1px;height:190.0px;background:#212332;"></div><div class="a" style="left:1672.1px;top:737.1px;width:1px;height:190.0px;background:#212332;"></div><div class="a" style="left:1287.1px;top:1022.1px;width:1px;height:28.899999999999977px;background:#212332;"></div><div class="a" style="left:1184px;top:139px;width:3.2px;height:912px;background:#1b5a55;"></div><div class="a code" style="left:1127px;top:115px;width:702px;height:936px;overflow:hidden"><div class="num" style="left:-9px;width:60px;top:6px;">617</div><div class="ln" style="left:83px;top:6px">        <span class="v">x_var</span><span class="o">=</span><span class="f">StringVar</span><span class="b1">(</span><span class="b1">)</span></div><div class="num" style="left:-9px;width:60px;top:30px;">618</div><div class="ln" style="left:83px;top:30px">        <span class="v">y_var</span><span class="o">=</span><span class="f">IntVar</span><span class="b1">(</span><span class="b1">)</span></div><div class="num" style="left:-9px;width:60px;top:54px;">619</div><div class="ln" style="left:83px;top:54px">        <span class="v">title_label</span> <span class="o">=</span> <span class="f">Label</span><span class="b1">(</span><span class="v">form</span><span class="o">,</span> <span class="p">text</span> <span class="o">=</span> <span class="q">'</span><span class="s">Title: </span><span class="q">'</span><span class="o">,</span> <span class="p">font</span><span class="o">=</span><span class="b2">(</span><span class="q">'</span><span class="s">calibre</span><span class="q">'</span><span class="o">,</span><span class="n">10</span><span class="o">,</span> <span class="q">'</span><span class="s">bold</span><span class="q">'</span><span class="b2">)</span><span class="b1">)</span></div><div class="num" style="left:-9px;width:60px;top:77px;">620</div><div class="ln" style="left:83px;top:77px">        <span class="v">title_entry</span> <span class="o">=</span> <span class="f">Entry</span><span class="b1">(</span><span class="v">form</span><span class="o">,</span><span class="p">textvariable</span> <span class="o">=</span> <span class="v">title_var</span><span class="o">,</span> <span class="p">font</span><span class="o">=</span><span class="b2">(</span><span class="q">'</span><span class="s">calibre</span><span class="q">'</span><span class="o">,</span><span class="n">10</span><span class="o">,</span><span class="q">'</span><span class="s">normal</span><span class="q">'</span><span class="b2">)</span><span class="b1">)</span></div><div class="num" style="left:-9px;width:60px;top:101px;">621</div><div class="ln" style="left:83px;top:101px">        <span class="v">y_label</span> <span class="o">=</span> <span class="f">Label</span><span class="b1">(</span><span class="v">form</span><span class="o">,</span> <span class="p">text</span> <span class="o">=</span> <span class="q">'</span><span class="s">No. of Variable(s): </span><span class="q">'</span><span class="o">,</span> <span class="p">font</span> <span class="o">=</span> <span class="b2">(</span><span class="q">'</span><span class="s">calibre</span><span class="q">'</span><span class="o">,</span><span class="n">10</span><span class="o">,</span><span class="q">'</span><span class="s">bold</span><span class="q">'</span><span class="b2">)</span><span class="b1">)</span></div><div class="num" style="left:-9px;width:60px;top:125px;">622</div><div class="ln" style="left:83px;top:125px">        <span class="v">y_entry</span><span class="o">=</span><span class="f">Entry</span><span class="b1">(</span><span class="v">form</span><span class="o">,</span> <span class="p">textvariable</span> <span class="o">=</span> <span class="v">y_var</span><span class="o">,</span> <span class="p">font</span> <span class="o">=</span> <span class="b2">(</span><span class="q">'</span><span class="s">calibre</span><span class="q">'</span><span class="o">,</span><span class="n">10</span><span class="o">,</span><span class="q">'</span><span class="s">normal</span><span class="q">'</span><span class="b2">)</span><span class="b1">)</span></div><div class="num" style="left:-9px;width:60px;top:149px;">623</div><div class="num" style="left:-9px;width:60px;top:172px;">624</div><div class="ln" style="left:83px;top:172px">        <span class="v">title_entry</span><span class="o">.</span><span class="f">insert</span><span class="b1">(</span><span class="n">0</span><span class="o">,</span><span class="q">'</span><span class="s">Untitled</span><span class="q">'</span><span class="b1">)</span></div><div class="num" style="left:-9px;width:60px;top:196px;">625</div><div class="num" style="left:-9px;width:60px;top:220px;">626</div><div class="ln" style="left:83px;top:220px">        <span class="v">title_label</span><span class="o">.</span><span class="f">grid</span><span class="b1">(</span><span class="p">row</span><span class="o">=</span><span class="n">0</span><span class="o">,</span><span class="p">column</span><span class="o">=</span><span class="n">0</span><span class="o">,</span><span class="p">padx</span><span class="o">=</span><span class="b2">(</span><span class="n">5</span><span class="o">,</span><span class="n">5</span><span class="b2">)</span><span class="o">,</span><span class="p">pady</span><span class="o">=</span><span class="b2">(</span><span class="n">15</span><span class="o">,</span><span class="n">5</span><span class="b2">)</span><span class="b1">)</span></div><div class="num" style="left:-9px;width:60px;top:244px;">627</div><div class="ln" style="left:83px;top:244px">        <span class="v">title_entry</span><span class="o">.</span><span class="f">grid</span><span class="b1">(</span><span class="p">row</span><span class="o">=</span><span class="n">0</span><span class="o">,</span><span class="p">column</span><span class="o">=</span><span class="n">1</span><span class="o">,</span><span class="p">padx</span><span class="o">=</span><span class="b2">(</span><span class="n">0</span><span class="o">,</span><span class="n">10</span><span class="b2">)</span><span class="o">,</span><span class="p">pady</span><span class="o">=</span><span class="b2">(</span><span class="n">15</span><span class="o">,</span><span class="n">5</span><span class="b2">)</span><span class="b1">)</span></div><div class="num" style="left:-9px;width:60px;top:267px;">628</div><div class="ln" style="left:83px;top:267px">        <span class="v">y_label</span><span class="o">.</span><span class="f">grid</span><span class="b1">(</span><span class="p">row</span><span class="o">=</span><span class="n">2</span><span class="o">,</span><span class="p">column</span><span class="o">=</span><span class="n">0</span><span class="o">,</span><span class="p">padx</span><span class="o">=</span><span class="b2">(</span><span class="n">5</span><span class="o">,</span><span class="n">5</span><span class="b2">)</span><span class="o">,</span><span class="p">pady</span><span class="o">=</span><span class="n">5</span><span class="b1">)</span></div><div class="num" style="left:-9px;width:60px;top:291px;">629</div><div class="ln" style="left:83px;top:291px">        <span class="v">y_entry</span><span class="o">.</span><span class="f">grid</span><span class="b1">(</span><span class="p">row</span><span class="o">=</span><span class="n">2</span><span class="o">,</span><span class="p">column</span><span class="o">=</span><span class="n">1</span><span class="o">,</span><span class="p">padx</span><span class="o">=</span><span class="b2">(</span><span class="n">0</span><span class="o">,</span><span class="n">10</span><span class="b2">)</span><span class="o">,</span><span class="p">pady</span><span class="o">=</span><span class="n">5</span><span class="b1">)</span></div><div class="num" style="left:-9px;width:60px;top:315px;">630</div><div class="ln" style="left:83px;top:315px">        <span class="v">sub_btn</span><span class="o">=</span><span class="f">Button</span><span class="b1">(</span><span class="v">form</span><span class="o">,</span><span class="p">text</span><span class="o">=</span><span class="q">"</span><span class="s">Create</span><span class="q">"</span><span class="o">,</span><span class="p">width</span><span class="o">=</span><span class="n">10</span><span class="o">,</span><span class="p">cursor</span><span class="o">=</span><span class="q">"</span><span class="s">hand2</span><span class="q">"</span><span class="o">,</span><span class="p">font</span><span class="o">=</span><span class="b2">(</span><span class="q">"</span><span class="s">calibre</span><span class="q">"</span><span class="o">,</span><span class="n">10</span><span class="b2">)</span><span class="b1">)</span></div><div class="num" style="left:-9px;width:60px;top:339px;">631</div><div class="ln" style="left:83px;top:339px">        <span class="v">sub_btn</span><span class="o">.</span><span class="f">grid</span><span class="b1">(</span><span class="p">row</span><span class="o">=</span><span class="n">3</span><span class="o">,</span><span class="p">column</span><span class="o">=</span><span class="n">1</span><span class="o">,</span><span class="p">padx</span><span class="o">=</span><span class="b2">(</span><span class="n">10</span><span class="o">,</span><span class="n">15</span><span class="b2">)</span><span class="o">,</span><span class="p">pady</span><span class="o">=</span><span class="b2">(</span><span class="n">15</span><span class="o">,</span><span class="n">15</span><span class="b2">)</span><span class="b1">)</span></div><div class="num" style="left:-9px;width:60px;top:362px;">632</div><div class="ln" style="left:83px;top:362px">        <span class="v">sub_btn</span><span class="o">.</span><span class="f">configure</span><span class="b1">(</span><span class="p">command</span><span class="o">=</span><span class="f">partial</span><span class="b2">(</span><span class="v">pie_values</span><span class="o">,</span><span class="v">c</span><span class="o">,</span><span class="v">title_var</span><span class="o">,</span><span class="v">y_var</span><span class="b2">)</span><span class="b1">)</span></div><div class="num" style="left:-9px;width:60px;top:386px;">633</div><div class="num" style="left:-9px;width:60px;top:410px;">634</div><div class="ln" style="left:83px;top:410px">        <span class="v">form</span><span class="o">.</span><span class="f">mainloop</span><span class="b1">(</span><span class="b1">)</span></div><div class="num" style="left:-9px;width:60px;top:434px;">635</div><div class="ln" style="left:83px;top:434px"><span class="d">def</span> <span class="f">pie_values</span><span class="b1">(</span><span class="p">c</span><span class="o">,</span><span class="p">title_var</span><span class="o">,</span><span class="p">y_var</span><span class="b1">)</span><span class="o">:</span></div><div class="num" style="left:-9px;width:60px;top:457px;">636</div><div class="ln" style="left:83px;top:457px">    <span class="d">def</span> <span class="f">enter_pie_values</span><span class="b1">(</span><span class="p">c</span><span class="o">,</span><span class="p">y</span><span class="b1">)</span><span class="o">:</span></div><div class="num" style="left:-9px;width:60px;top:481px;">637</div><div class="ln" style="left:83px;top:481px">        <span class="tq">'''</span><span class="s">for i in range(y_var):</span></div><div class="num" style="left:-9px;width:60px;top:505px;">638</div><div class="ln" style="left:83px;top:505px"><span class="s">            y.append(0)</span></div><div class="num" style="left:-9px;width:60px;top:529px;">639</div><div class="ln" style="left:83px;top:529px"><span class="s">            y[i]=IntVar()</span><span class="tq">'''</span></div><div class="num" style="left:-9px;width:60px;top:552px;">640</div><div class="ln" style="left:83px;top:552px">        <span class="d i">global</span> <span class="v">values_form</span></div><div class="num" style="left:-9px;width:60px;top:576px;">641</div><div class="ln" style="left:83px;top:576px">        <span class="v">values_form</span><span class="o">.</span><span class="f">place_forget</span><span class="b1">(</span><span class="b1">)</span></div><div class="num" style="left:-9px;width:60px;top:600px;">642</div><div class="ln" style="left:83px;top:600px">        <span class="v">values_form</span><span class="o">=</span><span class="v">customtkinter</span><span class="o">.</span><span class="f">CTkScrollableFrame</span><span class="b1">(</span><span class="v">root</span><span class="o">,</span></div><div class="num" style="left:-9px;width:60px;top:624px;">643</div><div class="ln" style="left:83px;top:624px">                                                  <span class="p">width</span><span class="o">=</span><span class="n">230</span><span class="o">,</span></div><div class="num" style="left:-9px;width:60px;top:647px;">644</div><div class="ln" style="left:83px;top:647px">                                                  <span class="p">height</span><span class="o">=</span><span class="n">665</span><span class="o">,</span></div><div class="num" style="left:-9px;width:60px;top:671px;">645</div><div class="ln" style="left:83px;top:671px">                                                  <span class="p">label_text</span><span class="o">=</span><span class="q">"</span><span class="s">Variables</span><span class="q">"</span><span class="o">,</span></div><div class="num" style="left:-9px;width:60px;top:695px;">646</div><div class="ln" style="left:83px;top:695px">                                                  <span class="p">border_width</span><span class="o">=</span><span class="n">1</span><span class="o">,</span></div><div class="num" style="left:-9px;width:60px;top:719px;">647</div><div class="ln" style="left:83px;top:719px">                                                  <span class="p">fg_color</span><span class="o">=</span><span class="q">"</span><span class="s">#171717</span><span class="q">"</span><span class="o">,</span></div><div class="num" style="left:-9px;width:60px;top:742px;">648</div><div class="ln" style="left:83px;top:742px">                                                  <span class="p">scrollbar_button_color</span><span class="o">=</span><span class="q">"</span><span class="s">#171717</span><span class="q">"</span><span class="o">,</span></div><div class="num" style="left:-9px;width:60px;top:766px;">649</div><div class="ln" style="left:83px;top:766px">                                                  <span class="p">border_color</span><span class="o">=</span><span class="q">"</span><span class="s">#ffffff</span><span class="q">"</span></div><div class="num" style="left:-9px;width:60px;top:790px;">650</div><div class="ln" style="left:83px;top:790px">                                                  <span class="b1">)</span></div><div class="num" style="left:-9px;width:60px;top:814px;">651</div><div class="ln" style="left:83px;top:814px">        <span class="v">values_form</span><span class="o">.</span><span class="f">place</span><span class="b1">(</span><span class="p">relx</span><span class="o">=</span><span class="n">1.0</span><span class="o">,</span> <span class="p">rely</span><span class="o">=</span><span class="n">1.0</span><span class="o">,</span> <span class="p">x</span><span class="o">=</span><span class="o">-</span><span class="n">930</span><span class="o">,</span> <span class="p">y</span><span class="o">=</span><span class="o">-</span><span class="n">740</span><span class="o">,</span><span class="p">anchor</span><span class="o">=</span><span class="q">'</span><span class="s">se</span><span class="q">'</span><span class="b1">)</span></div><div class="num" style="left:-9px;width:60px;top:837px;">652</div><div class="ln" style="left:83px;top:837px">        <span class="v">row</span><span class="o">=</span><span class="n">0</span></div><div class="num" style="left:-9px;width:60px;top:861px;">653</div><div class="ln" style="left:83px;top:861px">        <span class="v">entries</span><span class="o">=</span><span class="b1">[</span><span class="b1">]</span></div><div class="num" style="left:-9px;width:60px;top:885px;">654</div><div class="ln" style="left:83px;top:885px">        <span class="d">for</span> <span class="v">i</span> <span class="d">in</span> <span class="bf">range</span><span class="b1">(</span><span class="v">y_var</span><span class="b1">)</span><span class="o">:</span></div><div class="num" style="left:-9px;width:60px;top:909px;">655</div><div class="ln" style="left:83px;top:909px">            <span class="f">Label</span><span class="b1">(</span><span class="v">values_form</span><span class="o">,</span> <span class="p">text</span> <span class="o">=</span> <span class="q">"</span><span class="s">{}: </span><span class="q">"</span><span class="o">.</span><span class="f">format</span><span class="b2">(</span><span class="v">d_attr</span><span class="b3">[</span><span class="v">i</span><span class="b3">]</span><span class="o">.</span><span class="f">get</span><span class="b3">(</span><span class="b3">)</span><span class="b2">)</span><span class="o">,</span> <span class="p">font</span><span class="o">=</span><span class="b2">(</span><span class="q">"</span><span class="s">calibre</span><span class="q">"</span><span class="o">,</span><span class="n">10</span><span class="b2">)</span><span class="b1">)</span><span class="o">.</span><span class="f">grid</span><span class="b1">(</span><span class="p">row</span><span class="o">=</span><span class="v">row</span><span class="b1">)</span></div><div class="num" style="left:-9px;width:60px;top:932px;">656</div><div class="ln" style="left:83px;top:932px">            <span class="v">entries</span><span class="o">.</span><span class="f">append</span><span class="b1">(</span><span class="f">Entry</span><span class="b2">(</span><span class="v">values_form</span><span class="o">,</span> <span class="p">textvariable</span><span class="o">=</span><span class="v">y</span><span class="b3">[</span><span class="v">i</span><span class="b3">]</span><span class="o">,</span> <span class="p">width</span><span class="o">=</span><span class="n">15</span><span class="o">,</span> <span class="p">font</span><span class="o">=</span><span class="b3">(</span><span class="q">'</span><span class="s">calibre</span><span class="q">'</span><span class="o">,</span><span class="n">10</span><span class="o">,</span><span class="q">'</span><span class="s">normal</span><span class="q">'</span><span class="b3">)</span><span class="b2">)</span><span class="b1">)</span></div><div class="a" style="left:0;top:0;width:702px;height:23.80000000000001px;background:#1a1b26"></div><div class="a" style="left:0;top:23.80000000000001px;width:702px;height:4px;background:linear-gradient(rgba(0,0,0,0.38),rgba(0,0,0,0))"></div><div class="num" style="left:-9px;width:60px;top:2px;">609</div><div class="ln" style="left:83px;top:1px"><span class="d">def</span> <span class="f">pie</span><span class="b1">(</span><span class="p">c</span><span class="b1">)</span><span class="o">:</span></div></div><div class="a" style="left:1210px;top:1036.3px;width:155px;height:14.700000000000045px;background:rgba(134,139,196,0.09);"></div><svg class="ic" style="left:1837px;top:115px" width="66" height="936" viewBox="0 0 66 936"><path d="M-4 49.7h70" stroke="#2c2f45" stroke-width="1"/><path d="M-4 75.7h70" stroke="#2c2f45" stroke-width="1"/><path d="M-4 103.7h70" stroke="#2c2f45" stroke-width="1"/><path d="M-4 193.7h70" stroke="#2c2f45" stroke-width="1"/><path d="M-4 231.7h70" stroke="#2c2f45" stroke-width="1"/><path d="M-4 303.7h70" stroke="#2c2f45" stroke-width="1"/><path d="M-4 353.7h70" stroke="#2c2f45" stroke-width="1"/><path d="M-4 391.7h70" stroke="#2c2f45" stroke-width="1"/><path d="M-4 461.7h70" stroke="#2c2f45" stroke-width="1"/><path d="M-4 569.7h70" stroke="#2c2f45" stroke-width="1"/><path d="M-4 655.7h70" stroke="#2c2f45" stroke-width="1"/><path d="M-4 721.7h70" stroke="#2c2f45" stroke-width="1"/><path d="M-4 789.7h70" stroke="#2c2f45" stroke-width="1"/><path d="M-4 839.7h70" stroke="#2c2f45" stroke-width="1"/><path d="M-4 929.7h70" stroke="#2c2f45" stroke-width="1"/><g fill="none" stroke-width="1.2" stroke-opacity="0.5" stroke-dasharray="1.7 0.8"><path stroke="#bb9af7" d="M0 1.4h3M4 3.4h3M4 5.4h2M7 5.4h3M12 13.4h4M12 15.4h2M15 15.4h3M12 37.4h6M12 41.4h3M18 41.4h2M0 51.4h3M4 55.4h4M0 77.4h3M4 79.4h3M4 81.4h3M10 81.4h2M4 83.4h3M10 83.4h2M4 85.4h3M10 85.4h2M12 89.4h4M0 105.4h3M4 107.4h3M8 109.4h4M8 135.4h2M11 135.4h3M4 155.4h3M0 195.4h3M4 197.4h3M4 199.4h4M4 221.4h6M4 223.4h6M4 225.4h6M4 227.4h6M0 233.4h3M4 235.4h3M10 235.4h2M4 237.4h3M10 237.4h2M4 239.4h3M10 239.4h2M8 245.4h3M14 245.4h2M8 247.4h2M8 251.4h6M8 283.4h2M11 283.4h3M8 293.4h4M0 305.4h3M4 307.4h3M4 311.4h2M4 315.4h3M10 315.4h2M4 317.4h3M10 317.4h2M4 319.4h3M10 319.4h2M4 329.4h3M10 329.4h2M0 355.4h3M4 357.4h3M4 359.4h4M4 377.4h3M10 377.4h2M4 379.4h3M10 379.4h2M0 393.4h3M4 395.4h3M4 405.4h3M10 405.4h2M4 407.4h3M10 407.4h2M4 409.4h6M4 417.4h4M4 419.4h3M4 421.4h3M4 423.4h3M4 425.4h3M10 425.4h2M4 427.4h3M10 427.4h2M4 429.4h6M0 463.4h3M4 465.4h3M12 501.4h6M12 539.4h4M4 545.4h6M4 547.4h2M0 571.4h3M4 573.4h3M8 593.4h3M14 593.4h2M8 595.4h3M14 595.4h2M8 597.4h3M14 597.4h2M8 609.4h2M4 611.4h3M4 629.4h3M4 631.4h3M4 633.4h3M0 657.4h3M4 659.4h3M4 663.4h2M4 665.4h4M4 699.4h6M0 723.4h3M4 725.4h3M12 771.4h3M18 771.4h2M12 781.4h3M18 781.4h2M12 783.4h3M18 783.4h2M12 785.4h3M18 785.4h2M0 791.4h3M4 793.4h4M4 821.4h2M7 821.4h3M0 841.4h3M4 843.4h3M4 845.4h3M12 865.4h2M12 889.4h3M12 891.4h3M18 891.4h2M12 913.4h3M12 915.4h3M12 917.4h3M0 931.4h3M4 933.4h3"/><path stroke="#7aa2f7" d="M4 1.4h10M8 3.4h13M18 7.4h5M38 19.4h18M24 21.4h4M24 23.4h4M12 25.4h5M45 25.4h6M62 25.4h3M12 27.4h5M45 27.4h6M62 27.4h3M12 29.4h5M45 29.4h6M62 29.4h3M12 31.4h5M45 31.4h6M62 31.4h3M24 33.4h4M24 35.4h4M16 39.4h6M20 45.4h4M13 47.4h8M4 51.4h5M9 53.4h8M10 57.4h9M10 59.4h9M20 63.4h5M20 65.4h5M16 67.4h7M20 69.4h6M20 71.4h6M13 73.4h8M4 77.4h5M8 79.4h13M9 91.4h5M10 93.4h6M16 95.4h5M16 97.4h5M16 99.4h5M13 101.4h8M4 105.4h7M8 107.4h11M16 111.4h4M12 115.4h7M22 117.4h3M16 123.4h4M16 125.4h4M16 127.4h4M14 129.4h6M8 131.4h5M41 131.4h6M58 131.4h3M8 133.4h5M41 133.4h6M58 133.4h3M34 137.4h18M8 155.4h16M14 157.4h5M9 159.4h8M8 161.4h5M46 161.4h4M14 165.4h6M20 173.4h4M20 175.4h4M20 177.4h4M20 179.4h4M20 181.4h4M20 183.4h6M20 185.4h6M20 187.4h6M20 189.4h6M13 191.4h8M4 195.4h9M8 197.4h12M12 203.4h6M46 203.4h7M12 205.4h6M46 205.4h7M6 209.4h5M10 211.4h6M20 213.4h3M20 215.4h3M8 217.4h8M18 219.4h5M13 229.4h8M4 233.4h9M24 241.4h3M24 243.4h3M16 249.4h4M34 257.4h18M20 277.4h5M20 279.4h5M10 281.4h6M24 281.4h8M18 285.4h5M13 287.4h4M13 289.4h4M13 291.4h4M13 297.4h4M13 299.4h8M13 301.4h8M4 305.4h9M8 307.4h11M11 309.4h7M9 313.4h4M4 321.4h5M37 321.4h6M54 321.4h3M12 323.4h4M18 325.4h5M18 327.4h5M30 333.4h18M13 351.4h8M4 355.4h10M8 357.4h12M18 361.4h5M12 363.4h5M12 365.4h5M12 367.4h5M18 369.4h5M14 371.4h5M11 373.4h5M6 375.4h5M9 381.4h7M20 383.4h3M20 385.4h3M20 387.4h3M13 389.4h8M4 393.4h11M8 395.4h11M12 399.4h4M12 401.4h4M12 403.4h4M16 411.4h6M16 413.4h6M16 415.4h6M8 419.4h16M8 421.4h16M8 423.4h16M10 431.4h6M16 433.4h4M13 435.4h5M20 437.4h6M16 439.4h4M16 441.4h4M16 443.4h4M16 445.4h4M30 451.4h18M30 453.4h18M30 455.4h18M30 457.4h18M13 459.4h8M4 463.4h5M8 465.4h12M11 469.4h6M18 469.4h9M20 473.4h4M18 475.4h6M14 477.4h5M38 479.4h18M24 497.4h4M17 499.4h7M18 503.4h6M38 505.4h18M16 525.4h8M16 527.4h8M16 529.4h8M16 531.4h8M14 533.4h6M28 533.4h8M18 535.4h6M20 541.4h4M10 543.4h6M30 549.4h18M13 567.4h8M4 571.4h11M8 573.4h11M18 575.4h5M16 577.4h4M16 579.4h4M20 583.4h4M20 585.4h4M20 587.4h4M20 589.4h4M13 591.4h7M18 599.4h9M12 601.4h4M16 603.4h5M16 605.4h5M16 607.4h5M8 611.4h16M14 613.4h5M14 615.4h5M14 617.4h5M14 619.4h5M9 621.4h4M9 623.4h4M9 625.4h4M9 627.4h4M8 629.4h11M8 631.4h11M8 633.4h11M9 635.4h4M9 637.4h4M9 639.4h4M9 641.4h4M9 643.4h8M12 645.4h4M12 647.4h4M12 649.4h4M12 651.4h4M13 653.4h8M4 657.4h12M8 659.4h12M9 661.4h5M4 667.4h5M42 667.4h4M4 669.4h5M42 669.4h4M4 671.4h5M42 671.4h4M4 673.4h5M42 673.4h4M30 675.4h18M16 693.4h6M16 695.4h6M11 697.4h7M30 701.4h18M13 719.4h8M4 723.4h10M8 725.4h12M9 727.4h4M9 729.4h4M9 731.4h4M8 733.4h12M12 735.4h6M19 735.4h5M12 737.4h6M19 737.4h5M12 739.4h6M19 739.4h5M17 743.4h8M17 745.4h8M24 747.4h4M19 749.4h7M16 751.4h7M25 753.4h3M20 755.4h4M24 759.4h12M17 761.4h5M17 763.4h5M14 765.4h6M28 765.4h8M14 767.4h6M28 767.4h8M26 773.4h5M26 775.4h5M26 777.4h5M18 779.4h9M13 787.4h8M4 791.4h12M16 795.4h6M16 797.4h6M16 799.4h6M16 801.4h6M30 803.4h18M16 825.4h4M16 827.4h4M16 829.4h4M16 831.4h4M12 833.4h4M12 835.4h4M13 837.4h8M4 841.4h9M8 843.4h11M8 845.4h16M4 849.4h5M57 849.4h6M4 851.4h5M57 851.4h6M4 853.4h5M57 853.4h6M4 855.4h5M57 855.4h6M12 857.4h4M16 859.4h4M11 861.4h5M38 867.4h18M14 885.4h6M28 885.4h8M14 887.4h6M28 887.4h8M16 889.4h16M24 893.4h4M22 895.4h5M28 897.4h3M28 899.4h3M28 901.4h3M14 903.4h6M28 903.4h8M24 905.4h4M24 907.4h4M18 909.4h6M16 913.4h11M16 915.4h11M16 917.4h11M16 919.4h7M24 923.4h4M24 925.4h4M13 927.4h8M4 931.4h4M8 933.4h12"/><path stroke="#698cd6" d="M14 1.4h1M32 1.4h1M21 3.4h1M25 3.4h1M23 7.4h1M56 19.4h1M28 21.4h1M43 21.4h1M28 23.4h1M43 23.4h1M17 25.4h1M17 27.4h1M17 29.4h1M17 31.4h1M28 33.4h1M28 35.4h1M22 39.4h1M23 39.4h1M26 41.4h1M34 41.4h1M24 45.4h1M57 45.4h1M21 47.4h1M22 47.4h1M9 51.4h1M27 51.4h1M17 53.4h1M18 53.4h1M19 57.4h1M20 57.4h1M19 59.4h1M20 59.4h1M25 63.4h1M25 65.4h1M23 67.4h1M26 69.4h1M26 71.4h1M21 73.4h1M22 73.4h1M9 77.4h1M27 77.4h1M21 79.4h1M25 79.4h1M18 81.4h1M26 81.4h1M18 83.4h1M26 83.4h1M18 85.4h1M26 85.4h1M14 91.4h1M54 91.4h1M16 93.4h1M17 93.4h1M21 95.4h1M21 97.4h1M21 99.4h1M21 101.4h1M22 101.4h1M11 105.4h1M29 105.4h1M19 107.4h1M23 107.4h1M20 111.4h1M61 111.4h1M19 115.4h1M25 117.4h1M26 117.4h1M20 123.4h1M35 123.4h1M20 125.4h1M35 125.4h1M20 127.4h1M35 127.4h1M20 129.4h1M21 129.4h1M13 131.4h1M13 133.4h1M52 137.4h1M50 153.4h1M24 155.4h1M28 155.4h1M19 157.4h1M17 159.4h1M18 159.4h1M13 161.4h1M44 161.4h1M50 161.4h1M65 161.4h1M20 165.4h1M21 165.4h1M24 173.4h1M62 173.4h1M24 175.4h1M62 175.4h1M24 177.4h1M62 177.4h1M24 179.4h1M62 179.4h1M24 181.4h1M62 181.4h1M26 183.4h1M39 183.4h1M26 185.4h1M39 185.4h1M26 187.4h1M39 187.4h1M26 189.4h1M39 189.4h1M21 191.4h1M22 191.4h1M13 195.4h1M31 195.4h1M20 197.4h1M24 197.4h1M18 203.4h1M18 205.4h1M11 209.4h1M12 209.4h1M16 211.4h1M17 211.4h1M23 213.4h1M24 213.4h1M23 215.4h1M24 215.4h1M16 217.4h1M44 217.4h1M23 219.4h1M21 229.4h1M22 229.4h1M13 233.4h1M31 233.4h1M18 235.4h1M24 235.4h1M18 237.4h1M24 237.4h1M18 239.4h1M24 239.4h1M27 241.4h1M28 241.4h1M27 243.4h1M28 243.4h1M22 245.4h1M28 245.4h1M20 249.4h1M35 249.4h1M52 257.4h1M50 273.4h1M25 277.4h1M25 279.4h1M16 281.4h1M34 281.4h1M23 285.4h1M17 287.4h1M55 287.4h1M17 289.4h1M55 289.4h1M17 291.4h1M55 291.4h1M17 297.4h1M55 297.4h1M21 299.4h1M22 299.4h1M21 301.4h1M22 301.4h1M13 305.4h1M31 305.4h1M19 307.4h1M23 307.4h1M18 309.4h1M39 309.4h1M13 313.4h1M51 313.4h1M18 315.4h1M26 315.4h1M18 317.4h1M26 317.4h1M18 319.4h1M26 319.4h1M9 321.4h1M16 323.4h1M31 323.4h1M23 325.4h1M23 327.4h1M18 329.4h1M26 329.4h1M48 333.4h1M50 349.4h1M21 351.4h1M22 351.4h1M14 355.4h1M32 355.4h1M20 357.4h1M24 357.4h1M23 361.4h1M17 363.4h1M17 365.4h1M17 367.4h1M23 369.4h1M19 371.4h1M16 373.4h1M17 373.4h1M11 375.4h1M12 375.4h1M18 377.4h1M26 377.4h1M18 379.4h1M26 379.4h1M16 381.4h1M17 381.4h1M23 383.4h1M24 383.4h1M23 385.4h1M24 385.4h1M23 387.4h1M24 387.4h1M21 389.4h1M22 389.4h1M15 393.4h1M33 393.4h1M19 395.4h1M23 395.4h1M16 399.4h1M57 399.4h1M16 401.4h1M57 401.4h1M16 403.4h1M57 403.4h1M18 405.4h1M24 405.4h1M18 407.4h1M24 407.4h1M22 411.4h1M35 411.4h1M22 413.4h1M35 413.4h1M22 415.4h1M35 415.4h1M24 419.4h1M28 419.4h1M24 421.4h1M28 421.4h1M24 423.4h1M28 423.4h1M18 425.4h1M26 425.4h1M18 427.4h1M26 427.4h1M16 431.4h1M17 431.4h1M20 433.4h1M35 433.4h1M18 435.4h1M58 435.4h1M26 437.4h1M39 437.4h1M20 439.4h1M35 439.4h1M20 441.4h1M35 441.4h1M20 443.4h1M35 443.4h1M20 445.4h1M35 445.4h1M48 451.4h1M48 453.4h1M48 455.4h1M48 457.4h1M21 459.4h1M22 459.4h1M9 463.4h1M27 463.4h1M20 465.4h1M24 465.4h1M17 469.4h1M29 469.4h1M24 473.4h1M39 473.4h1M24 475.4h1M25 475.4h1M19 477.4h1M20 477.4h1M56 479.4h1M50 495.4h1M28 497.4h1M24 499.4h1M25 499.4h1M24 503.4h1M25 503.4h1M56 505.4h1M50 521.4h1M24 525.4h1M52 525.4h1M24 527.4h1M52 527.4h1M24 529.4h1M52 529.4h1M24 531.4h1M52 531.4h1M20 533.4h1M38 533.4h1M24 535.4h1M25 535.4h1M24 541.4h1M58 541.4h1M16 543.4h1M17 543.4h1M48 549.4h1M50 565.4h1M21 567.4h1M22 567.4h1M15 571.4h1M33 571.4h1M19 573.4h1M23 573.4h1M23 575.4h1M20 577.4h1M35 577.4h1M20 579.4h1M35 579.4h1M24 583.4h1M63 583.4h1M24 585.4h1M63 585.4h1M24 587.4h1M63 587.4h1M24 589.4h1M63 589.4h1M20 591.4h1M21 591.4h1M22 593.4h1M30 593.4h1M22 595.4h1M30 595.4h1M22 597.4h1M30 597.4h1M27 599.4h1M28 599.4h1M16 601.4h1M17 601.4h1M21 603.4h1M21 605.4h1M21 607.4h1M24 611.4h1M28 611.4h1M19 613.4h1M19 615.4h1M19 617.4h1M19 619.4h1M13 621.4h1M51 621.4h1M13 623.4h1M51 623.4h1M13 625.4h1M51 625.4h1M13 627.4h1M51 627.4h1M19 629.4h1M43 629.4h1M19 631.4h1M43 631.4h1M19 633.4h1M43 633.4h1M13 635.4h1M29 635.4h1M13 637.4h1M29 637.4h1M13 639.4h1M29 639.4h1M13 641.4h1M29 641.4h1M17 643.4h1M18 643.4h1M16 645.4h1M49 645.4h1M16 647.4h1M49 647.4h1M16 649.4h1M49 649.4h1M16 651.4h1M49 651.4h1M21 653.4h1M22 653.4h1M16 657.4h1M34 657.4h1M20 659.4h1M24 659.4h1M14 661.4h1M54 661.4h1M9 667.4h1M40 667.4h1M46 667.4h1M61 667.4h1M9 669.4h1M40 669.4h1M46 669.4h1M61 669.4h1M9 671.4h1M40 671.4h1M46 671.4h1M61 671.4h1M9 673.4h1M40 673.4h1M46 673.4h1M61 673.4h1M48 675.4h1M50 691.4h1M22 693.4h1M35 693.4h1M22 695.4h1M35 695.4h1M18 697.4h1M39 697.4h1M48 701.4h1M50 717.4h1M21 719.4h1M22 719.4h1M14 723.4h1M32 723.4h1M20 725.4h1M24 725.4h1M13 727.4h1M51 727.4h1M13 729.4h1M51 729.4h1M13 731.4h1M51 731.4h1M20 733.4h1M21 733.4h1M18 735.4h1M18 737.4h1M18 739.4h1M25 743.4h1M26 743.4h1M25 745.4h1M26 745.4h1M28 747.4h1M43 747.4h1M26 749.4h1M47 749.4h1M23 751.4h1M28 753.4h1M29 753.4h1M24 755.4h1M58 755.4h1M36 759.4h1M37 759.4h1M22 761.4h1M48 761.4h1M22 763.4h1M48 763.4h1M20 765.4h1M38 765.4h1M20 767.4h1M38 767.4h1M26 771.4h1M33 771.4h1M31 773.4h1M31 775.4h1M31 777.4h1M27 779.4h1M28 779.4h1M26 781.4h1M34 781.4h1M26 783.4h1M34 783.4h1M26 785.4h1M34 785.4h1M21 787.4h1M22 787.4h1M16 791.4h1M34 791.4h1M22 795.4h1M35 795.4h1M22 797.4h1M35 797.4h1M22 799.4h1M35 799.4h1M22 801.4h1M35 801.4h1M48 803.4h1M50 819.4h1M20 825.4h1M59 825.4h1M20 827.4h1M59 827.4h1M20 829.4h1M59 829.4h1M20 831.4h1M59 831.4h1M16 833.4h1M31 833.4h1M16 835.4h1M31 835.4h1M21 837.4h1M22 837.4h1M13 841.4h1M31 841.4h1M19 843.4h1M23 843.4h1M24 845.4h1M28 845.4h1M9 849.4h1M9 851.4h1M9 853.4h1M9 855.4h1M16 857.4h1M31 857.4h1M20 859.4h1M35 859.4h1M16 861.4h1M17 861.4h1M56 867.4h1M50 883.4h1M20 885.4h1M38 885.4h1M20 887.4h1M38 887.4h1M32 889.4h1M36 889.4h1M26 891.4h1M34 891.4h1M28 893.4h1M43 893.4h1M27 895.4h1M31 897.4h1M32 897.4h1M31 899.4h1M32 899.4h1M31 901.4h1M32 901.4h1M20 903.4h1M38 903.4h1M28 905.4h1M43 905.4h1M28 907.4h1M43 907.4h1M24 909.4h1M25 909.4h1M27 913.4h1M51 913.4h1M27 915.4h1M51 915.4h1M27 917.4h1M51 917.4h1M23 919.4h1M28 923.4h1M28 925.4h1M21 927.4h1M22 927.4h1M8 931.4h1M26 931.4h1M20 933.4h1M24 933.4h1"/><path stroke="#e0af68" d="M15 1.4h1M17 1.4h9M27 1.4h5M22 3.4h1M24 3.4h1M29 7.4h12M55 7.4h4M29 21.4h3M35 21.4h6M29 23.4h3M35 23.4h6M31 25.4h4M31 27.4h4M31 29.4h4M31 31.4h4M29 33.4h3M35 33.4h6M44 33.4h4M56 33.4h4M29 35.4h3M35 35.4h6M44 35.4h4M56 35.4h4M25 45.4h3M31 45.4h6M40 45.4h4M51 45.4h4M10 51.4h1M12 51.4h9M22 51.4h5M32 63.4h12M54 63.4h4M32 65.4h12M54 65.4h4M42 67.4h11M63 67.4h3M32 69.4h4M46 69.4h5M55 69.4h6M32 71.4h4M46 71.4h5M55 71.4h6M10 77.4h1M12 77.4h9M22 77.4h5M22 79.4h1M24 79.4h1M28 91.4h2M41 91.4h6M22 95.4h4M32 95.4h4M42 95.4h1M50 95.4h1M57 95.4h6M22 97.4h4M32 97.4h4M42 97.4h1M50 97.4h1M57 97.4h6M22 99.4h4M32 99.4h4M42 99.4h1M50 99.4h1M57 99.4h6M12 105.4h1M14 105.4h9M24 105.4h5M20 107.4h1M22 107.4h1M21 111.4h3M27 111.4h6M36 111.4h4M49 111.4h4M38 115.4h11M59 115.4h3M21 123.4h3M27 123.4h6M21 125.4h3M27 125.4h6M21 127.4h3M27 127.4h6M27 131.4h4M27 133.4h4M50 139.4h5M50 141.4h6M50 143.4h10M50 145.4h12M50 147.4h8M50 149.4h16M50 151.4h12M25 155.4h1M27 155.4h1M26 157.4h4M57 157.4h4M20 161.4h12M51 161.4h3M57 161.4h6M25 173.4h3M31 173.4h6M40 173.4h4M51 173.4h4M25 175.4h3M31 175.4h6M40 175.4h4M51 175.4h4M25 177.4h3M31 177.4h6M40 177.4h4M51 177.4h4M25 179.4h3M31 179.4h6M40 179.4h4M51 179.4h4M25 181.4h3M31 181.4h6M40 181.4h4M51 181.4h4M14 195.4h1M16 195.4h9M26 195.4h5M21 197.4h1M23 197.4h1M24 203.4h4M38 203.4h7M24 205.4h4M38 205.4h7M29 219.4h12M55 219.4h4M14 233.4h1M16 233.4h9M26 233.4h5M21 249.4h3M27 249.4h6M50 259.4h5M50 261.4h6M50 263.4h10M50 265.4h12M50 267.4h8M50 269.4h16M50 271.4h12M26 277.4h4M36 277.4h4M46 277.4h1M54 277.4h1M61 277.4h5M26 279.4h4M36 279.4h4M46 279.4h1M54 279.4h1M61 279.4h5M30 285.4h4M61 285.4h4M18 287.4h4M27 287.4h4M32 287.4h1M34 287.4h4M43 287.4h4M18 289.4h4M27 289.4h4M32 289.4h1M34 289.4h4M43 289.4h4M18 291.4h4M27 291.4h4M32 291.4h1M34 291.4h4M43 291.4h4M18 297.4h4M27 297.4h4M32 297.4h1M34 297.4h4M43 297.4h4M14 305.4h1M16 305.4h9M26 305.4h5M20 307.4h1M22 307.4h1M14 313.4h4M23 313.4h4M28 313.4h1M30 313.4h4M39 313.4h4M23 321.4h4M62 321.4h4M17 323.4h3M23 323.4h6M30 325.4h4M48 325.4h4M30 327.4h4M48 327.4h4M50 335.4h5M50 337.4h6M50 339.4h10M50 341.4h12M50 343.4h8M50 345.4h16M50 347.4h12M15 355.4h1M17 355.4h9M27 355.4h5M21 357.4h1M23 357.4h1M29 361.4h12M55 361.4h4M24 363.4h12M46 363.4h4M24 365.4h12M46 365.4h4M24 367.4h12M46 367.4h4M29 369.4h12M55 369.4h4M26 371.4h4M57 371.4h4M16 393.4h1M18 393.4h9M28 393.4h5M20 395.4h1M22 395.4h1M17 399.4h3M23 399.4h6M32 399.4h4M45 399.4h4M17 401.4h3M23 401.4h6M32 401.4h4M45 401.4h4M17 403.4h3M23 403.4h6M32 403.4h4M45 403.4h4M25 419.4h1M27 419.4h1M25 421.4h1M27 421.4h1M25 423.4h1M27 423.4h1M21 433.4h3M27 433.4h6M32 435.4h2M45 435.4h6M21 439.4h3M27 439.4h6M21 441.4h3M27 441.4h6M21 443.4h3M27 443.4h6M21 445.4h3M27 445.4h6M10 463.4h1M12 463.4h9M22 463.4h5M21 465.4h1M23 465.4h1M25 473.4h3M31 473.4h6M50 481.4h5M50 483.4h6M50 485.4h10M50 487.4h12M50 489.4h8M50 491.4h16M50 493.4h12M29 497.4h3M35 497.4h6M44 497.4h4M56 497.4h4M50 507.4h5M50 509.4h6M50 511.4h10M50 513.4h12M50 515.4h8M50 517.4h16M50 519.4h12M25 541.4h3M31 541.4h6M40 541.4h4M52 541.4h4M50 551.4h5M50 553.4h6M50 555.4h10M50 557.4h12M50 559.4h8M50 561.4h16M50 563.4h12M16 571.4h1M18 571.4h9M28 571.4h5M20 573.4h1M22 573.4h1M30 575.4h4M61 575.4h4M21 577.4h3M27 577.4h6M21 579.4h3M27 579.4h6M25 583.4h3M31 583.4h6M40 583.4h4M52 583.4h4M25 585.4h3M31 585.4h6M40 585.4h4M52 585.4h4M25 587.4h3M31 587.4h6M40 587.4h4M52 587.4h4M25 589.4h3M31 589.4h6M40 589.4h4M52 589.4h4M28 603.4h12M50 603.4h4M28 605.4h12M50 605.4h4M28 607.4h12M50 607.4h4M25 611.4h1M27 611.4h1M26 613.4h4M65 613.4h1M26 615.4h4M65 615.4h1M26 617.4h4M65 617.4h1M26 619.4h4M65 619.4h1M14 621.4h4M23 621.4h4M28 621.4h1M30 621.4h4M39 621.4h4M14 623.4h4M23 623.4h4M28 623.4h1M30 623.4h4M39 623.4h4M14 625.4h4M23 625.4h4M28 625.4h1M30 625.4h4M39 625.4h4M14 627.4h4M23 627.4h4M28 627.4h1M30 627.4h4M39 627.4h4M20 629.4h1M22 629.4h9M32 629.4h5M38 629.4h5M20 631.4h1M22 631.4h9M32 631.4h5M38 631.4h5M20 633.4h1M22 633.4h9M32 633.4h5M38 633.4h5M14 635.4h4M23 635.4h4M28 635.4h1M14 637.4h4M23 637.4h4M28 637.4h1M14 639.4h4M23 639.4h4M28 639.4h1M14 641.4h4M23 641.4h4M28 641.4h1M17 645.4h3M23 645.4h6M32 645.4h4M43 645.4h4M17 647.4h3M23 647.4h6M32 647.4h4M43 647.4h4M17 649.4h3M23 649.4h6M32 649.4h4M43 649.4h4M17 651.4h3M23 651.4h6M32 651.4h4M43 651.4h4M17 657.4h1M19 657.4h9M29 657.4h5M21 659.4h1M23 659.4h1M28 661.4h2M41 661.4h6M16 667.4h12M47 667.4h3M53 667.4h6M16 669.4h12M47 669.4h3M53 669.4h6M16 671.4h12M47 671.4h3M53 671.4h6M16 673.4h12M47 673.4h3M53 673.4h6M50 677.4h5M50 679.4h6M50 681.4h10M50 683.4h12M50 685.4h8M50 687.4h16M50 689.4h12M50 703.4h5M50 705.4h6M50 707.4h10M50 709.4h12M50 711.4h8M50 713.4h16M50 715.4h12M15 723.4h1M17 723.4h9M27 723.4h5M21 725.4h1M23 725.4h1M14 727.4h4M23 727.4h4M28 727.4h1M30 727.4h4M39 727.4h4M14 729.4h4M23 729.4h4M28 729.4h1M30 729.4h4M39 729.4h4M14 731.4h4M23 731.4h4M28 731.4h1M30 731.4h4M39 731.4h4M38 735.4h12M57 735.4h5M38 737.4h12M57 737.4h5M38 739.4h12M57 739.4h5M29 747.4h3M35 747.4h6M43 751.4h11M64 751.4h2M25 755.4h3M31 755.4h6M40 755.4h4M52 755.4h4M36 761.4h2M36 763.4h2M37 773.4h12M63 773.4h3M37 775.4h12M63 775.4h3M37 777.4h12M63 777.4h3M17 791.4h1M19 791.4h9M29 791.4h5M50 805.4h5M50 807.4h6M50 809.4h10M50 811.4h12M50 813.4h8M50 815.4h16M50 817.4h12M21 825.4h3M27 825.4h6M36 825.4h4M48 825.4h4M21 827.4h3M27 827.4h6M36 827.4h4M48 827.4h4M21 829.4h3M27 829.4h6M36 829.4h4M48 829.4h4M21 831.4h3M27 831.4h6M36 831.4h4M48 831.4h4M17 833.4h3M23 833.4h6M17 835.4h3M23 835.4h6M14 841.4h1M16 841.4h9M26 841.4h5M20 843.4h1M22 843.4h1M25 845.4h1M27 845.4h1M16 849.4h4M16 851.4h4M16 853.4h4M16 855.4h4M17 857.4h3M23 857.4h6M21 859.4h3M27 859.4h6M50 869.4h5M50 871.4h6M50 873.4h10M50 875.4h12M50 877.4h8M50 879.4h16M50 881.4h12M33 889.4h1M35 889.4h1M29 893.4h3M35 893.4h6M34 895.4h4M29 905.4h3M35 905.4h6M29 907.4h3M35 907.4h6M28 913.4h1M30 913.4h9M40 913.4h5M46 913.4h5M28 915.4h1M30 915.4h9M40 915.4h5M46 915.4h5M28 917.4h1M30 917.4h9M40 917.4h5M46 917.4h5M46 919.4h11M29 923.4h3M35 923.4h6M44 923.4h4M56 923.4h4M29 925.4h3M35 925.4h6M44 925.4h4M56 925.4h4M9 931.4h1M11 931.4h9M21 931.4h5M21 933.4h1M23 933.4h1"/><path stroke="#89ddff" d="M16 1.4h1M26 1.4h1M33 1.4h1M23 3.4h1M26 3.4h1M16 5.4h1M16 7.4h1M28 7.4h1M42 7.4h1M53 7.4h1M59 7.4h1M61 7.4h1M17 9.4h1M18 9.4h1M27 9.4h1M16 13.4h1M24 15.4h1M23 19.4h1M37 19.4h1M61 19.4h1M23 21.4h1M32 21.4h1M34 21.4h1M41 21.4h1M23 23.4h1M32 23.4h1M34 23.4h1M41 23.4h1M29 25.4h1M36 25.4h1M38 25.4h1M43 25.4h1M44 25.4h1M61 25.4h1M29 27.4h1M36 27.4h1M38 27.4h1M43 27.4h1M44 27.4h1M61 27.4h1M29 29.4h1M36 29.4h1M38 29.4h1M43 29.4h1M44 29.4h1M61 29.4h1M29 31.4h1M36 31.4h1M38 31.4h1M43 31.4h1M44 31.4h1M61 31.4h1M23 33.4h1M32 33.4h1M34 33.4h1M41 33.4h1M43 33.4h1M48 33.4h1M51 33.4h1M55 33.4h1M60 33.4h1M64 33.4h1M23 35.4h1M32 35.4h1M34 35.4h1M41 35.4h1M43 35.4h1M48 35.4h1M51 35.4h1M55 35.4h1M60 35.4h1M64 35.4h1M15 39.4h1M35 41.4h1M19 45.4h1M28 45.4h1M30 45.4h1M37 45.4h1M39 45.4h1M44 45.4h1M47 45.4h1M50 45.4h1M55 45.4h1M12 47.4h1M11 51.4h1M21 51.4h1M28 51.4h1M8 53.4h1M8 55.4h1M9 57.4h1M9 59.4h1M19 63.4h1M30 63.4h1M45 63.4h1M52 63.4h1M59 63.4h1M62 63.4h1M19 65.4h1M30 65.4h1M45 65.4h1M52 65.4h1M59 65.4h1M62 65.4h1M15 67.4h1M24 67.4h1M39 67.4h1M40 67.4h1M53 67.4h1M54 67.4h1M60 67.4h1M61 67.4h1M19 69.4h1M31 69.4h1M36 69.4h1M37 69.4h1M44 69.4h1M45 69.4h1M51 69.4h1M54 69.4h1M61 69.4h1M62 69.4h1M19 71.4h1M31 71.4h1M36 71.4h1M37 71.4h1M44 71.4h1M45 71.4h1M51 71.4h1M54 71.4h1M61 71.4h1M62 71.4h1M12 73.4h1M11 77.4h1M21 77.4h1M28 77.4h1M23 79.4h1M26 79.4h1M27 81.4h1M27 83.4h1M27 85.4h1M16 89.4h1M8 91.4h1M22 91.4h1M27 91.4h1M30 91.4h1M31 91.4h1M39 91.4h1M40 91.4h1M47 91.4h1M9 93.4h1M15 95.4h1M26 95.4h1M30 95.4h1M36 95.4h1M40 95.4h1M43 95.4h1M44 95.4h1M48 95.4h1M51 95.4h1M52 95.4h1M56 95.4h1M63 95.4h1M64 95.4h1M15 97.4h1M26 97.4h1M30 97.4h1M36 97.4h1M40 97.4h1M43 97.4h1M44 97.4h1M48 97.4h1M51 97.4h1M52 97.4h1M56 97.4h1M63 97.4h1M64 97.4h1M15 99.4h1M26 99.4h1M30 99.4h1M36 99.4h1M40 99.4h1M43 99.4h1M44 99.4h1M48 99.4h1M51 99.4h1M52 99.4h1M56 99.4h1M63 99.4h1M64 99.4h1M12 101.4h1M13 105.4h1M23 105.4h1M30 105.4h1M21 107.4h1M24 107.4h1M12 109.4h1M15 111.4h1M24 111.4h1M26 111.4h1M33 111.4h1M35 111.4h1M40 111.4h1M44 111.4h1M48 111.4h1M53 111.4h1M57 111.4h1M11 115.4h1M20 115.4h1M35 115.4h1M36 115.4h1M49 115.4h1M50 115.4h1M56 115.4h1M57 115.4h1M62 115.4h1M15 117.4h1M21 117.4h1M15 123.4h1M24 123.4h1M26 123.4h1M33 123.4h1M15 125.4h1M24 125.4h1M26 125.4h1M33 125.4h1M15 127.4h1M24 127.4h1M26 127.4h1M33 127.4h1M13 129.4h1M25 131.4h1M32 131.4h1M34 131.4h1M39 131.4h1M40 131.4h1M57 131.4h1M64 131.4h1M25 133.4h1M32 133.4h1M34 133.4h1M39 133.4h1M40 133.4h1M57 133.4h1M64 133.4h1M20 135.4h1M19 137.4h1M33 137.4h1M57 137.4h1M55 139.4h1M59 139.4h1M56 141.4h1M60 141.4h1M60 143.4h1M61 143.4h1M62 145.4h1M64 145.4h1M58 147.4h1M59 147.4h1M62 151.4h1M63 151.4h1M26 155.4h1M29 155.4h1M12 157.4h1M24 157.4h1M31 157.4h1M33 157.4h1M54 157.4h1M55 157.4h1M62 157.4h1M65 157.4h1M8 159.4h1M18 161.4h1M33 161.4h1M45 161.4h1M54 161.4h1M56 161.4h1M63 161.4h1M13 165.4h1M19 173.4h1M28 173.4h1M30 173.4h1M37 173.4h1M39 173.4h1M44 173.4h1M47 173.4h1M50 173.4h1M55 173.4h1M59 173.4h1M19 175.4h1M28 175.4h1M30 175.4h1M37 175.4h1M39 175.4h1M44 175.4h1M47 175.4h1M50 175.4h1M55 175.4h1M59 175.4h1M19 177.4h1M28 177.4h1M30 177.4h1M37 177.4h1M39 177.4h1M44 177.4h1M47 177.4h1M50 177.4h1M55 177.4h1M59 177.4h1M19 179.4h1M28 179.4h1M30 179.4h1M37 179.4h1M39 179.4h1M44 179.4h1M47 179.4h1M50 179.4h1M55 179.4h1M59 179.4h1M19 181.4h1M28 181.4h1M30 181.4h1M37 181.4h1M39 181.4h1M44 181.4h1M47 181.4h1M50 181.4h1M55 181.4h1M59 181.4h1M19 183.4h1M28 183.4h1M29 183.4h1M38 183.4h1M19 185.4h1M28 185.4h1M29 185.4h1M38 185.4h1M19 187.4h1M28 187.4h1M29 187.4h1M38 187.4h1M19 189.4h1M28 189.4h1M29 189.4h1M38 189.4h1M12 191.4h1M15 195.4h1M25 195.4h1M32 195.4h1M22 197.4h1M25 197.4h1M8 199.4h1M11 203.4h1M23 203.4h1M28 203.4h1M29 203.4h1M36 203.4h1M37 203.4h1M45 203.4h1M65 203.4h1M11 205.4h1M23 205.4h1M28 205.4h1M29 205.4h1M36 205.4h1M37 205.4h1M45 205.4h1M65 205.4h1M5 209.4h1M9 211.4h1M9 213.4h1M19 213.4h1M9 215.4h1M19 215.4h1M7 217.4h1M29 217.4h1M35 217.4h1M16 219.4h1M28 219.4h1M42 219.4h1M53 219.4h1M59 219.4h1M61 219.4h1M16 221.4h1M24 221.4h1M26 221.4h1M31 221.4h1M32 221.4h1M34 221.4h1M41 221.4h1M42 221.4h1M45 221.4h1M16 223.4h1M24 223.4h1M26 223.4h1M31 223.4h1M32 223.4h1M34 223.4h1M41 223.4h1M42 223.4h1M45 223.4h1M16 225.4h1M24 225.4h1M26 225.4h1M31 225.4h1M32 225.4h1M34 225.4h1M41 225.4h1M42 225.4h1M45 225.4h1M16 227.4h1M24 227.4h1M26 227.4h1M31 227.4h1M32 227.4h1M34 227.4h1M41 227.4h1M42 227.4h1M45 227.4h1M12 229.4h1M15 233.4h1M25 233.4h1M32 233.4h1M25 235.4h1M25 237.4h1M25 239.4h1M13 241.4h1M23 241.4h1M13 243.4h1M23 243.4h1M29 245.4h1M12 247.4h1M13 247.4h1M15 247.4h1M15 249.4h1M24 249.4h1M26 249.4h1M33 249.4h1M14 253.4h1M15 253.4h1M17 253.4h1M19 257.4h1M33 257.4h1M57 257.4h1M55 259.4h1M59 259.4h1M56 261.4h1M60 261.4h1M60 263.4h1M61 263.4h1M62 265.4h1M64 265.4h1M58 267.4h1M59 267.4h1M62 271.4h1M63 271.4h1M19 277.4h1M30 277.4h1M34 277.4h1M40 277.4h1M44 277.4h1M47 277.4h1M48 277.4h1M52 277.4h1M55 277.4h1M56 277.4h1M60 277.4h1M19 279.4h1M30 279.4h1M34 279.4h1M40 279.4h1M44 279.4h1M47 279.4h1M48 279.4h1M52 279.4h1M55 279.4h1M56 279.4h1M60 279.4h1M9 281.4h1M23 281.4h1M20 283.4h1M16 285.4h1M28 285.4h1M35 285.4h1M37 285.4h1M58 285.4h1M59 285.4h1M12 287.4h1M22 287.4h1M26 287.4h1M31 287.4h1M33 287.4h1M38 287.4h1M42 287.4h1M47 287.4h1M50 287.4h1M12 289.4h1M22 289.4h1M26 289.4h1M31 289.4h1M33 289.4h1M38 289.4h1M42 289.4h1M47 289.4h1M50 289.4h1M12 291.4h1M22 291.4h1M26 291.4h1M31 291.4h1M33 291.4h1M38 291.4h1M42 291.4h1M47 291.4h1M50 291.4h1M12 293.4h1M12 297.4h1M22 297.4h1M26 297.4h1M31 297.4h1M33 297.4h1M38 297.4h1M42 297.4h1M47 297.4h1M50 297.4h1M12 299.4h1M12 301.4h1M15 305.4h1M25 305.4h1M32 305.4h1M21 307.4h1M24 307.4h1M10 309.4h1M19 309.4h1M38 309.4h1M12 311.4h1M13 311.4h1M15 311.4h1M8 313.4h1M18 313.4h1M22 313.4h1M27 313.4h1M29 313.4h1M34 313.4h1M38 313.4h1M43 313.4h1M46 313.4h1M27 315.4h1M27 317.4h1M27 319.4h1M21 321.4h1M28 321.4h1M30 321.4h1M35 321.4h1M36 321.4h1M53 321.4h1M60 321.4h1M11 323.4h1M20 323.4h1M22 323.4h1M29 323.4h1M16 325.4h1M28 325.4h1M35 325.4h1M37 325.4h1M45 325.4h1M46 325.4h1M52 325.4h1M54 325.4h1M62 325.4h1M63 325.4h1M16 327.4h1M28 327.4h1M35 327.4h1M37 327.4h1M45 327.4h1M46 327.4h1M52 327.4h1M54 327.4h1M62 327.4h1M63 327.4h1M27 329.4h1M15 333.4h1M29 333.4h1M53 333.4h1M55 335.4h1M59 335.4h1M56 337.4h1M60 337.4h1M60 339.4h1M61 339.4h1M62 341.4h1M64 341.4h1M58 343.4h1M59 343.4h1M62 347.4h1M63 347.4h1M12 351.4h1M16 355.4h1M26 355.4h1M33 355.4h1M22 357.4h1M25 357.4h1M8 359.4h1M16 361.4h1M28 361.4h1M42 361.4h1M53 361.4h1M59 361.4h1M61 361.4h1M11 363.4h1M22 363.4h1M37 363.4h1M44 363.4h1M51 363.4h1M54 363.4h1M62 363.4h1M63 363.4h1M11 365.4h1M22 365.4h1M37 365.4h1M44 365.4h1M51 365.4h1M54 365.4h1M62 365.4h1M63 365.4h1M11 367.4h1M22 367.4h1M37 367.4h1M44 367.4h1M51 367.4h1M54 367.4h1M62 367.4h1M63 367.4h1M16 369.4h1M28 369.4h1M42 369.4h1M53 369.4h1M59 369.4h1M61 369.4h1M12 371.4h1M24 371.4h1M31 371.4h1M33 371.4h1M54 371.4h1M55 371.4h1M62 371.4h1M65 371.4h1M10 373.4h1M5 375.4h1M27 377.4h1M27 379.4h1M8 381.4h1M9 383.4h1M19 383.4h1M9 385.4h1M19 385.4h1M9 387.4h1M19 387.4h1M12 389.4h1M17 393.4h1M27 393.4h1M34 393.4h1M21 395.4h1M24 395.4h1M9 397.4h1M10 397.4h1M11 399.4h1M20 399.4h1M22 399.4h1M29 399.4h1M31 399.4h1M36 399.4h1M40 399.4h1M44 399.4h1M49 399.4h1M53 399.4h1M11 401.4h1M20 401.4h1M22 401.4h1M29 401.4h1M31 401.4h1M36 401.4h1M40 401.4h1M44 401.4h1M49 401.4h1M53 401.4h1M11 403.4h1M20 403.4h1M22 403.4h1M29 403.4h1M31 403.4h1M36 403.4h1M40 403.4h1M44 403.4h1M49 403.4h1M53 403.4h1M25 405.4h1M25 407.4h1M15 411.4h1M24 411.4h1M25 411.4h1M34 411.4h1M15 413.4h1M24 413.4h1M25 413.4h1M34 413.4h1M15 415.4h1M24 415.4h1M25 415.4h1M34 415.4h1M8 417.4h1M26 419.4h1M29 419.4h1M26 421.4h1M29 421.4h1M26 423.4h1M29 423.4h1M27 425.4h1M27 427.4h1M9 431.4h1M15 433.4h1M24 433.4h1M26 433.4h1M33 433.4h1M12 435.4h1M26 435.4h1M31 435.4h1M34 435.4h1M35 435.4h1M43 435.4h1M44 435.4h1M51 435.4h1M19 437.4h1M28 437.4h1M29 437.4h1M38 437.4h1M15 439.4h1M24 439.4h1M26 439.4h1M33 439.4h1M15 441.4h1M24 441.4h1M26 441.4h1M33 441.4h1M15 443.4h1M24 443.4h1M26 443.4h1M33 443.4h1M15 445.4h1M24 445.4h1M26 445.4h1M33 445.4h1M10 449.4h1M11 449.4h1M13 449.4h1M15 451.4h1M29 451.4h1M53 451.4h1M15 453.4h1M29 453.4h1M53 453.4h1M15 455.4h1M29 455.4h1M53 455.4h1M15 457.4h1M29 457.4h1M53 457.4h1M12 459.4h1M11 463.4h1M21 463.4h1M28 463.4h1M22 465.4h1M25 465.4h1M9 467.4h1M10 467.4h1M10 469.4h1M10 471.4h1M11 471.4h1M13 471.4h1M19 473.4h1M28 473.4h1M30 473.4h1M37 473.4h1M17 475.4h1M13 477.4h1M23 479.4h1M37 479.4h1M61 479.4h1M55 481.4h1M59 481.4h1M56 483.4h1M60 483.4h1M60 485.4h1M61 485.4h1M62 487.4h1M64 487.4h1M58 489.4h1M59 489.4h1M62 493.4h1M63 493.4h1M23 497.4h1M32 497.4h1M34 497.4h1M41 497.4h1M43 497.4h1M48 497.4h1M51 497.4h1M55 497.4h1M60 497.4h1M64 497.4h1M16 499.4h1M17 503.4h1M23 505.4h1M37 505.4h1M61 505.4h1M55 507.4h1M59 507.4h1M56 509.4h1M60 509.4h1M60 511.4h1M61 511.4h1M62 513.4h1M64 513.4h1M58 515.4h1M59 515.4h1M62 519.4h1M63 519.4h1M18 523.4h1M19 523.4h1M21 523.4h1M15 525.4h1M37 525.4h1M43 525.4h1M15 527.4h1M37 527.4h1M43 527.4h1M15 529.4h1M37 529.4h1M43 529.4h1M15 531.4h1M37 531.4h1M43 531.4h1M13 533.4h1M27 533.4h1M17 535.4h1M16 539.4h1M19 541.4h1M28 541.4h1M30 541.4h1M37 541.4h1M39 541.4h1M44 541.4h1M47 541.4h1M51 541.4h1M56 541.4h1M9 543.4h1M8 547.4h1M9 547.4h1M11 547.4h1M15 549.4h1M29 549.4h1M53 549.4h1M55 551.4h1M59 551.4h1M56 553.4h1M60 553.4h1M60 555.4h1M61 555.4h1M62 557.4h1M64 557.4h1M58 559.4h1M59 559.4h1M62 563.4h1M63 563.4h1M12 567.4h1M17 571.4h1M27 571.4h1M34 571.4h1M21 573.4h1M24 573.4h1M16 575.4h1M28 575.4h1M35 575.4h1M37 575.4h1M58 575.4h1M59 575.4h1M15 577.4h1M24 577.4h1M26 577.4h1M33 577.4h1M15 579.4h1M24 579.4h1M26 579.4h1M33 579.4h1M19 583.4h1M28 583.4h1M30 583.4h1M37 583.4h1M39 583.4h1M44 583.4h1M47 583.4h1M51 583.4h1M56 583.4h1M60 583.4h1M19 585.4h1M28 585.4h1M30 585.4h1M37 585.4h1M39 585.4h1M44 585.4h1M47 585.4h1M51 585.4h1M56 585.4h1M60 585.4h1M19 587.4h1M28 587.4h1M30 587.4h1M37 587.4h1M39 587.4h1M44 587.4h1M47 587.4h1M51 587.4h1M56 587.4h1M60 587.4h1M19 589.4h1M28 589.4h1M30 589.4h1M37 589.4h1M39 589.4h1M44 589.4h1M47 589.4h1M51 589.4h1M56 589.4h1M60 589.4h1M12 591.4h1M31 593.4h1M31 595.4h1M31 597.4h1M17 599.4h1M11 601.4h1M15 603.4h1M26 603.4h1M41 603.4h1M48 603.4h1M55 603.4h1M58 603.4h1M15 605.4h1M26 605.4h1M41 605.4h1M48 605.4h1M55 605.4h1M58 605.4h1M15 607.4h1M26 607.4h1M41 607.4h1M48 607.4h1M55 607.4h1M58 607.4h1M12 609.4h1M13 609.4h1M15 609.4h1M26 611.4h1M29 611.4h1M12 613.4h1M24 613.4h1M31 613.4h1M33 613.4h1M62 613.4h1M63 613.4h1M12 615.4h1M24 615.4h1M31 615.4h1M33 615.4h1M62 615.4h1M63 615.4h1M12 617.4h1M24 617.4h1M31 617.4h1M33 617.4h1M62 617.4h1M63 617.4h1M12 619.4h1M24 619.4h1M31 619.4h1M33 619.4h1M62 619.4h1M63 619.4h1M8 621.4h1M18 621.4h1M22 621.4h1M27 621.4h1M29 621.4h1M34 621.4h1M38 621.4h1M43 621.4h1M46 621.4h1M8 623.4h1M18 623.4h1M22 623.4h1M27 623.4h1M29 623.4h1M34 623.4h1M38 623.4h1M43 623.4h1M46 623.4h1M8 625.4h1M18 625.4h1M22 625.4h1M27 625.4h1M29 625.4h1M34 625.4h1M38 625.4h1M43 625.4h1M46 625.4h1M8 627.4h1M18 627.4h1M22 627.4h1M27 627.4h1M29 627.4h1M34 627.4h1M38 627.4h1M43 627.4h1M46 627.4h1M21 629.4h1M31 629.4h1M37 629.4h1M44 629.4h1M21 631.4h1M31 631.4h1M37 631.4h1M44 631.4h1M21 633.4h1M31 633.4h1M37 633.4h1M44 633.4h1M8 635.4h1M18 635.4h1M22 635.4h1M27 635.4h1M8 637.4h1M18 637.4h1M22 637.4h1M27 637.4h1M8 639.4h1M18 639.4h1M22 639.4h1M27 639.4h1M8 641.4h1M18 641.4h1M22 641.4h1M27 641.4h1M8 643.4h1M11 645.4h1M20 645.4h1M22 645.4h1M29 645.4h1M31 645.4h1M36 645.4h1M39 645.4h1M42 645.4h1M47 645.4h1M11 647.4h1M20 647.4h1M22 647.4h1M29 647.4h1M31 647.4h1M36 647.4h1M39 647.4h1M42 647.4h1M47 647.4h1M11 649.4h1M20 649.4h1M22 649.4h1M29 649.4h1M31 649.4h1M36 649.4h1M39 649.4h1M42 649.4h1M47 649.4h1M11 651.4h1M20 651.4h1M22 651.4h1M29 651.4h1M31 651.4h1M36 651.4h1M39 651.4h1M42 651.4h1M47 651.4h1M12 653.4h1M18 657.4h1M28 657.4h1M35 657.4h1M22 659.4h1M25 659.4h1M8 661.4h1M22 661.4h1M27 661.4h1M30 661.4h1M31 661.4h1M39 661.4h1M40 661.4h1M47 661.4h1M12 663.4h1M13 663.4h1M15 663.4h1M8 665.4h1M14 667.4h1M29 667.4h1M41 667.4h1M50 667.4h1M52 667.4h1M59 667.4h1M14 669.4h1M29 669.4h1M41 669.4h1M50 669.4h1M52 669.4h1M59 669.4h1M14 671.4h1M29 671.4h1M41 671.4h1M50 671.4h1M52 671.4h1M59 671.4h1M14 673.4h1M29 673.4h1M41 673.4h1M50 673.4h1M52 673.4h1M59 673.4h1M15 675.4h1M29 675.4h1M53 675.4h1M55 677.4h1M59 677.4h1M56 679.4h1M60 679.4h1M60 681.4h1M61 681.4h1M62 683.4h1M64 683.4h1M58 685.4h1M59 685.4h1M62 689.4h1M63 689.4h1M15 693.4h1M24 693.4h1M25 693.4h1M34 693.4h1M15 695.4h1M24 695.4h1M25 695.4h1M34 695.4h1M10 697.4h1M19 697.4h1M38 697.4h1M15 701.4h1M29 701.4h1M53 701.4h1M55 703.4h1M59 703.4h1M56 705.4h1M60 705.4h1M60 707.4h1M61 707.4h1M62 709.4h1M64 709.4h1M58 711.4h1M59 711.4h1M62 715.4h1M63 715.4h1M12 719.4h1M16 723.4h1M26 723.4h1M33 723.4h1M22 725.4h1M25 725.4h1M8 727.4h1M18 727.4h1M22 727.4h1M27 727.4h1M29 727.4h1M34 727.4h1M38 727.4h1M43 727.4h1M46 727.4h1M8 729.4h1M18 729.4h1M22 729.4h1M27 729.4h1M29 729.4h1M34 729.4h1M38 729.4h1M43 729.4h1M46 729.4h1M8 731.4h1M18 731.4h1M22 731.4h1M27 731.4h1M29 731.4h1M34 731.4h1M38 731.4h1M43 731.4h1M46 731.4h1M7 733.4h1M11 735.4h1M36 735.4h1M50 735.4h1M55 735.4h1M62 735.4h1M65 735.4h1M11 737.4h1M36 737.4h1M50 737.4h1M55 737.4h1M62 737.4h1M65 737.4h1M11 739.4h1M36 739.4h1M50 739.4h1M55 739.4h1M62 739.4h1M65 739.4h1M16 743.4h1M16 745.4h1M23 747.4h1M32 747.4h1M34 747.4h1M41 747.4h1M18 749.4h1M27 749.4h1M46 749.4h1M15 751.4h1M24 751.4h1M40 751.4h1M41 751.4h1M54 751.4h1M55 751.4h1M61 751.4h1M62 751.4h1M18 753.4h1M24 753.4h1M19 755.4h1M28 755.4h1M30 755.4h1M37 755.4h1M39 755.4h1M44 755.4h1M47 755.4h1M51 755.4h1M56 755.4h1M23 759.4h1M16 761.4h1M30 761.4h1M35 761.4h1M38 761.4h1M39 761.4h1M47 761.4h1M16 763.4h1M30 763.4h1M35 763.4h1M38 763.4h1M39 763.4h1M47 763.4h1M13 765.4h1M27 765.4h1M13 767.4h1M27 767.4h1M18 769.4h1M19 769.4h1M21 769.4h1M34 771.4h1M24 773.4h1M36 773.4h1M50 773.4h1M61 773.4h1M24 775.4h1M36 775.4h1M50 775.4h1M61 775.4h1M24 777.4h1M36 777.4h1M50 777.4h1M61 777.4h1M17 779.4h1M35 781.4h1M35 783.4h1M35 785.4h1M12 787.4h1M18 791.4h1M28 791.4h1M35 791.4h1M8 793.4h1M15 795.4h1M24 795.4h1M25 795.4h1M34 795.4h1M15 797.4h1M24 797.4h1M25 797.4h1M34 797.4h1M15 799.4h1M24 799.4h1M25 799.4h1M34 799.4h1M15 801.4h1M24 801.4h1M25 801.4h1M34 801.4h1M15 803.4h1M29 803.4h1M53 803.4h1M55 805.4h1M59 805.4h1M56 807.4h1M60 807.4h1M60 809.4h1M61 809.4h1M62 811.4h1M64 811.4h1M58 813.4h1M59 813.4h1M62 817.4h1M63 817.4h1M16 821.4h1M15 825.4h1M24 825.4h1M26 825.4h1M33 825.4h1M35 825.4h1M40 825.4h1M43 825.4h1M47 825.4h1M52 825.4h1M56 825.4h1M15 827.4h1M24 827.4h1M26 827.4h1M33 827.4h1M35 827.4h1M40 827.4h1M43 827.4h1M47 827.4h1M52 827.4h1M56 827.4h1M15 829.4h1M24 829.4h1M26 829.4h1M33 829.4h1M35 829.4h1M40 829.4h1M43 829.4h1M47 829.4h1M52 829.4h1M56 829.4h1M15 831.4h1M24 831.4h1M26 831.4h1M33 831.4h1M35 831.4h1M40 831.4h1M43 831.4h1M47 831.4h1M52 831.4h1M56 831.4h1M11 833.4h1M20 833.4h1M22 833.4h1M29 833.4h1M11 835.4h1M20 835.4h1M22 835.4h1M29 835.4h1M12 837.4h1M15 841.4h1M25 841.4h1M32 841.4h1M21 843.4h1M24 843.4h1M26 845.4h1M29 845.4h1M10 847.4h1M11 847.4h1M13 847.4h1M14 849.4h1M21 849.4h1M23 849.4h1M55 849.4h1M56 849.4h1M65 849.4h1M14 851.4h1M21 851.4h1M23 851.4h1M55 851.4h1M56 851.4h1M65 851.4h1M14 853.4h1M21 853.4h1M23 853.4h1M55 853.4h1M56 853.4h1M65 853.4h1M14 855.4h1M21 855.4h1M23 855.4h1M55 855.4h1M56 855.4h1M65 855.4h1M11 857.4h1M20 857.4h1M22 857.4h1M29 857.4h1M15 859.4h1M24 859.4h1M26 859.4h1M33 859.4h1M10 861.4h1M20 865.4h1M21 865.4h1M23 865.4h1M23 867.4h1M37 867.4h1M61 867.4h1M55 869.4h1M59 869.4h1M56 871.4h1M60 871.4h1M60 873.4h1M61 873.4h1M62 875.4h1M64 875.4h1M58 877.4h1M59 877.4h1M62 881.4h1M63 881.4h1M13 885.4h1M27 885.4h1M13 887.4h1M27 887.4h1M34 889.4h1M37 889.4h1M35 891.4h1M23 893.4h1M32 893.4h1M34 893.4h1M41 893.4h1M20 895.4h1M32 895.4h1M39 895.4h1M41 895.4h1M17 897.4h1M27 897.4h1M17 899.4h1M27 899.4h1M17 901.4h1M27 901.4h1M13 903.4h1M27 903.4h1M23 905.4h1M32 905.4h1M34 905.4h1M41 905.4h1M23 907.4h1M32 907.4h1M34 907.4h1M41 907.4h1M17 909.4h1M29 913.4h1M39 913.4h1M45 913.4h1M52 913.4h1M29 915.4h1M39 915.4h1M45 915.4h1M52 915.4h1M29 917.4h1M39 917.4h1M45 917.4h1M52 917.4h1M15 919.4h1M24 919.4h1M43 919.4h1M44 919.4h1M57 919.4h1M58 919.4h1M64 919.4h1M65 919.4h1M18 921.4h1M19 921.4h1M21 921.4h1M23 923.4h1M32 923.4h1M34 923.4h1M41 923.4h1M43 923.4h1M48 923.4h1M51 923.4h1M55 923.4h1M60 923.4h1M64 923.4h1M23 925.4h1M32 925.4h1M34 925.4h1M41 925.4h1M43 925.4h1M48 925.4h1M51 925.4h1M55 925.4h1M60 925.4h1M64 925.4h1M12 927.4h1M10 931.4h1M20 931.4h1M27 931.4h1M22 933.4h1M25 933.4h1"/><path stroke="#c0caf5" d="M11 5.4h5M4 7.4h11M24 7.4h4M44 7.4h9M12 9.4h5M19 15.4h5M12 19.4h11M24 19.4h13M57 19.4h4M12 21.4h11M12 23.4h11M18 25.4h11M52 25.4h6M59 25.4h1M18 27.4h11M52 27.4h6M59 27.4h1M18 29.4h11M52 29.4h6M59 29.4h1M18 31.4h11M52 31.4h6M59 31.4h1M12 33.4h11M12 35.4h11M12 39.4h3M16 41.4h1M27 41.4h7M12 45.4h7M8 47.4h4M4 53.4h4M4 57.4h5M4 59.4h5M12 63.4h7M26 63.4h4M47 63.4h5M12 65.4h7M26 65.4h4M47 65.4h5M12 67.4h3M12 69.4h7M27 69.4h4M12 71.4h7M27 71.4h4M8 73.4h4M8 81.4h1M19 81.4h7M8 83.4h1M19 83.4h7M8 85.4h1M19 85.4h7M11 87.4h7M4 91.4h4M15 91.4h7M23 91.4h4M4 93.4h5M4 95.4h11M4 97.4h11M4 99.4h11M8 101.4h4M8 111.4h7M8 115.4h3M8 117.4h7M16 117.4h5M8 123.4h7M8 125.4h7M8 127.4h7M8 129.4h5M14 131.4h11M48 131.4h6M55 131.4h1M14 133.4h11M48 133.4h6M55 133.4h1M15 135.4h5M8 137.4h11M20 137.4h13M53 137.4h4M4 157.4h7M20 157.4h4M4 159.4h4M14 161.4h4M35 161.4h6M42 161.4h1M55 161.4h1M8 163.4h4M8 165.4h5M8 173.4h11M8 175.4h11M8 177.4h11M8 179.4h11M8 181.4h11M8 183.4h11M8 185.4h11M8 187.4h11M8 189.4h11M8 191.4h4M4 203.4h7M19 203.4h4M54 203.4h11M4 205.4h7M19 205.4h4M54 205.4h11M4 209.4h1M4 211.4h5M4 213.4h5M10 213.4h9M4 215.4h5M10 215.4h9M4 217.4h3M21 217.4h1M23 217.4h1M26 217.4h1M31 217.4h1M33 217.4h1M36 217.4h1M38 217.4h1M41 217.4h1M4 219.4h11M24 219.4h4M44 219.4h9M11 221.4h5M18 221.4h6M11 223.4h5M18 223.4h6M11 225.4h5M18 225.4h6M11 227.4h5M18 227.4h6M8 229.4h4M8 235.4h1M19 235.4h5M8 237.4h1M19 237.4h5M8 239.4h1M19 239.4h5M8 241.4h5M14 241.4h9M8 243.4h5M14 243.4h9M12 245.4h1M23 245.4h5M11 247.4h1M8 249.4h7M15 251.4h11M8 253.4h4M13 253.4h1M8 257.4h11M20 257.4h13M53 257.4h4M8 277.4h11M8 279.4h11M8 281.4h1M17 281.4h6M15 283.4h5M8 285.4h7M24 285.4h4M8 287.4h4M8 289.4h4M8 291.4h4M8 297.4h4M8 299.4h4M8 301.4h4M4 309.4h6M7 311.4h5M4 313.4h4M8 315.4h1M19 315.4h7M8 317.4h1M19 317.4h7M8 319.4h1M19 319.4h7M10 321.4h11M44 321.4h6M51 321.4h1M4 323.4h7M4 325.4h11M24 325.4h4M4 327.4h11M24 327.4h4M8 329.4h1M19 329.4h7M11 331.4h7M4 333.4h11M16 333.4h13M49 333.4h4M8 351.4h4M4 361.4h11M24 361.4h4M44 361.4h9M4 363.4h7M18 363.4h4M39 363.4h5M4 365.4h7M18 365.4h4M39 365.4h5M4 367.4h7M18 367.4h4M39 367.4h5M4 369.4h11M24 369.4h4M44 369.4h9M4 371.4h7M20 371.4h4M4 373.4h6M4 375.4h1M8 377.4h1M19 377.4h7M8 379.4h1M19 379.4h7M4 381.4h4M4 383.4h5M10 383.4h9M4 385.4h5M10 385.4h9M4 387.4h5M10 387.4h9M8 389.4h4M4 397.4h5M4 399.4h7M4 401.4h7M4 403.4h7M8 405.4h1M19 405.4h5M8 407.4h1M19 407.4h5M11 409.4h5M4 411.4h11M4 413.4h11M4 415.4h11M8 425.4h1M19 425.4h7M8 427.4h1M19 427.4h7M11 429.4h11M4 431.4h5M4 433.4h11M8 435.4h4M19 435.4h7M27 435.4h4M8 437.4h11M4 439.4h11M4 441.4h11M4 443.4h11M4 445.4h11M4 449.4h4M9 449.4h1M4 451.4h11M16 451.4h13M49 451.4h4M4 453.4h11M16 453.4h13M49 453.4h4M4 455.4h11M16 455.4h13M49 455.4h4M4 457.4h11M16 457.4h13M49 457.4h4M8 459.4h4M4 467.4h5M4 469.4h6M4 471.4h4M9 471.4h1M12 473.4h7M12 475.4h5M12 477.4h1M12 479.4h11M24 479.4h13M57 479.4h4M12 497.4h11M12 499.4h4M19 501.4h11M12 503.4h5M12 505.4h11M24 505.4h13M57 505.4h4M12 523.4h4M17 523.4h1M12 525.4h3M29 525.4h1M31 525.4h1M34 525.4h1M39 525.4h1M41 525.4h1M44 525.4h1M46 525.4h1M49 525.4h1M12 527.4h3M29 527.4h1M31 527.4h1M34 527.4h1M39 527.4h1M41 527.4h1M44 527.4h1M46 527.4h1M49 527.4h1M12 529.4h3M29 529.4h1M31 529.4h1M34 529.4h1M39 529.4h1M41 529.4h1M44 529.4h1M46 529.4h1M49 529.4h1M12 531.4h3M29 531.4h1M31 531.4h1M34 531.4h1M39 531.4h1M41 531.4h1M44 531.4h1M46 531.4h1M49 531.4h1M12 533.4h1M21 533.4h6M12 535.4h5M12 541.4h7M4 543.4h5M11 545.4h11M7 547.4h1M4 549.4h11M16 549.4h13M49 549.4h4M8 567.4h4M8 575.4h7M24 575.4h4M8 577.4h7M8 579.4h7M8 583.4h11M8 585.4h11M8 587.4h11M8 589.4h11M8 591.4h4M12 593.4h1M23 593.4h7M12 595.4h1M23 595.4h7M12 597.4h1M23 597.4h7M8 599.4h9M8 601.4h3M8 603.4h7M22 603.4h4M43 603.4h5M8 605.4h7M22 605.4h4M43 605.4h5M8 607.4h7M22 607.4h4M43 607.4h5M11 609.4h1M4 613.4h7M20 613.4h4M4 615.4h7M20 615.4h4M4 617.4h7M20 617.4h4M4 619.4h7M20 619.4h4M4 621.4h4M4 623.4h4M4 625.4h4M4 627.4h4M4 635.4h4M4 637.4h4M4 639.4h4M4 641.4h4M4 643.4h4M4 645.4h7M4 647.4h7M4 649.4h7M4 651.4h7M8 653.4h4M4 661.4h4M15 661.4h7M23 661.4h4M7 663.4h5M10 667.4h4M31 667.4h6M38 667.4h1M51 667.4h1M10 669.4h4M31 669.4h6M38 669.4h1M51 669.4h1M10 671.4h4M31 671.4h6M38 671.4h1M51 671.4h1M10 673.4h4M31 673.4h6M38 673.4h1M51 673.4h1M4 675.4h11M16 675.4h13M49 675.4h4M4 693.4h11M4 695.4h11M4 697.4h6M11 699.4h5M4 701.4h11M16 701.4h13M49 701.4h4M8 719.4h4M4 727.4h4M4 729.4h4M4 731.4h4M4 733.4h3M4 735.4h7M25 735.4h11M51 735.4h1M53 735.4h1M4 737.4h7M25 737.4h11M51 737.4h1M53 737.4h1M4 739.4h7M25 739.4h11M51 739.4h1M53 739.4h1M12 743.4h4M12 745.4h4M12 747.4h11M12 749.4h6M12 751.4h3M12 753.4h6M19 753.4h5M12 755.4h7M19 757.4h7M12 759.4h11M12 761.4h4M23 761.4h7M31 761.4h4M12 763.4h4M23 763.4h7M31 763.4h4M12 765.4h1M21 765.4h6M12 767.4h1M21 767.4h6M12 769.4h4M17 769.4h1M16 771.4h1M31 771.4h1M12 773.4h11M32 773.4h4M52 773.4h9M12 775.4h11M32 775.4h4M52 775.4h9M12 777.4h11M32 777.4h4M52 777.4h9M12 779.4h5M16 781.4h1M27 781.4h7M16 783.4h1M27 783.4h7M16 785.4h1M27 785.4h7M8 787.4h4M4 795.4h11M4 797.4h11M4 799.4h11M4 801.4h11M4 803.4h11M16 803.4h13M49 803.4h4M11 821.4h5M4 825.4h11M4 827.4h11M4 829.4h11M4 831.4h11M4 833.4h7M4 835.4h7M8 837.4h4M4 847.4h4M9 847.4h1M10 849.4h4M64 849.4h1M10 851.4h4M64 851.4h1M10 853.4h4M64 853.4h1M10 855.4h4M64 855.4h1M4 857.4h7M4 859.4h11M4 861.4h6M15 865.4h5M12 867.4h11M24 867.4h13M57 867.4h4M12 885.4h1M21 885.4h6M12 887.4h1M21 887.4h6M16 891.4h1M27 891.4h7M12 893.4h11M12 895.4h7M28 895.4h4M12 897.4h5M18 897.4h9M12 899.4h5M18 899.4h9M12 901.4h5M18 901.4h9M12 903.4h1M21 903.4h6M12 905.4h11M12 907.4h11M12 909.4h5M12 919.4h3M12 921.4h4M17 921.4h1M12 923.4h11M12 925.4h11M8 927.4h4"/><path stroke="#68b3de" d="M60 7.4h1M51 25.4h1M51 27.4h1M51 29.4h1M51 31.4h1M49 33.4h1M54 33.4h1M61 33.4h1M49 35.4h1M54 35.4h1M61 35.4h1M45 45.4h1M49 45.4h1M61 63.4h1M61 65.4h1M41 111.4h1M47 111.4h1M54 111.4h1M60 111.4h1M47 131.4h1M63 131.4h1M47 133.4h1M63 133.4h1M64 157.4h1M41 161.4h1M43 161.4h1M45 173.4h1M49 173.4h1M56 173.4h1M61 173.4h1M45 175.4h1M49 175.4h1M56 175.4h1M61 175.4h1M45 177.4h1M49 177.4h1M56 177.4h1M61 177.4h1M45 179.4h1M49 179.4h1M56 179.4h1M61 179.4h1M45 181.4h1M49 181.4h1M56 181.4h1M61 181.4h1M53 203.4h1M53 205.4h1M20 217.4h1M28 217.4h1M30 217.4h1M43 217.4h1M60 219.4h1M32 281.4h1M33 281.4h1M48 287.4h1M54 287.4h1M48 289.4h1M54 289.4h1M48 291.4h1M54 291.4h1M48 297.4h1M54 297.4h1M44 313.4h1M50 313.4h1M43 321.4h1M59 321.4h1M53 325.4h1M53 327.4h1M60 361.4h1M53 363.4h1M53 365.4h1M53 367.4h1M60 369.4h1M64 371.4h1M37 399.4h1M43 399.4h1M50 399.4h1M56 399.4h1M37 401.4h1M43 401.4h1M50 401.4h1M56 401.4h1M37 403.4h1M43 403.4h1M50 403.4h1M56 403.4h1M27 469.4h1M28 469.4h1M49 497.4h1M54 497.4h1M61 497.4h1M28 525.4h1M36 525.4h1M38 525.4h1M51 525.4h1M28 527.4h1M36 527.4h1M38 527.4h1M51 527.4h1M28 529.4h1M36 529.4h1M38 529.4h1M51 529.4h1M28 531.4h1M36 531.4h1M38 531.4h1M51 531.4h1M36 533.4h1M37 533.4h1M45 541.4h1M50 541.4h1M45 583.4h1M50 583.4h1M57 583.4h1M62 583.4h1M45 585.4h1M50 585.4h1M57 585.4h1M62 585.4h1M45 587.4h1M50 587.4h1M57 587.4h1M62 587.4h1M45 589.4h1M50 589.4h1M57 589.4h1M62 589.4h1M57 603.4h1M57 605.4h1M57 607.4h1M44 621.4h1M50 621.4h1M44 623.4h1M50 623.4h1M44 625.4h1M50 625.4h1M44 627.4h1M50 627.4h1M37 645.4h1M41 645.4h1M37 647.4h1M41 647.4h1M37 649.4h1M41 649.4h1M37 651.4h1M41 651.4h1M37 667.4h1M39 667.4h1M37 669.4h1M39 669.4h1M37 671.4h1M39 671.4h1M37 673.4h1M39 673.4h1M44 727.4h1M50 727.4h1M44 729.4h1M50 729.4h1M44 731.4h1M50 731.4h1M24 735.4h1M24 737.4h1M24 739.4h1M45 755.4h1M50 755.4h1M36 765.4h1M37 765.4h1M36 767.4h1M37 767.4h1M30 771.4h1M32 771.4h1M41 825.4h1M46 825.4h1M53 825.4h1M58 825.4h1M41 827.4h1M46 827.4h1M53 827.4h1M58 827.4h1M41 829.4h1M46 829.4h1M53 829.4h1M58 829.4h1M41 831.4h1M46 831.4h1M53 831.4h1M58 831.4h1M63 849.4h1M63 851.4h1M63 853.4h1M63 855.4h1M36 885.4h1M37 885.4h1M36 887.4h1M37 887.4h1M36 903.4h1M37 903.4h1M49 923.4h1M54 923.4h1M61 923.4h1M49 925.4h1M54 925.4h1M61 925.4h1"/><path stroke="#9ece6a" d="M62 7.4h4M19 9.4h8M39 25.4h4M39 27.4h4M39 29.4h4M39 31.4h4M0 61.4h17M63 63.4h3M63 65.4h3M25 67.4h14M55 67.4h5M38 69.4h6M63 69.4h3M38 71.4h6M63 71.4h3M32 91.4h7M65 95.4h1M65 97.4h1M65 99.4h1M21 115.4h14M51 115.4h5M0 119.4h19M35 131.4h4M35 133.4h4M62 143.4h4M60 147.4h6M64 151.4h2M34 157.4h20M30 183.4h8M30 185.4h8M30 187.4h8M30 189.4h8M30 203.4h6M30 205.4h6M7 207.4h22M62 219.4h4M27 221.4h4M35 221.4h6M27 223.4h4M35 223.4h6M27 225.4h4M35 225.4h6M27 227.4h4M35 227.4h6M62 263.4h4M60 267.4h6M64 271.4h2M0 275.4h21M38 285.4h20M20 309.4h18M31 321.4h4M38 325.4h7M55 325.4h7M38 327.4h7M55 327.4h7M62 339.4h4M60 343.4h6M64 347.4h2M62 361.4h4M55 363.4h7M55 365.4h7M55 367.4h7M62 369.4h4M34 371.4h20M26 411.4h8M26 413.4h8M26 415.4h8M36 435.4h7M30 437.4h8M0 447.4h15M62 485.4h4M60 489.4h6M64 493.4h2M62 511.4h4M60 515.4h6M64 519.4h2M62 555.4h4M60 559.4h6M64 563.4h2M38 575.4h20M0 581.4h19M59 603.4h7M59 605.4h7M59 607.4h7M34 613.4h28M34 615.4h28M34 617.4h28M34 619.4h28M32 661.4h7M62 681.4h4M60 685.4h6M64 689.4h2M26 693.4h8M26 695.4h8M20 697.4h18M62 707.4h4M60 711.4h6M64 715.4h2M28 749.4h18M25 751.4h15M56 751.4h5M40 761.4h7M40 763.4h7M26 795.4h8M26 797.4h8M26 799.4h8M26 801.4h8M62 809.4h4M60 813.4h6M64 817.4h2M24 849.4h31M24 851.4h31M24 853.4h31M24 855.4h31M0 863.4h23M62 873.4h4M60 877.4h6M64 881.4h2M42 895.4h24M15 911.4h22M25 919.4h18M59 919.4h5"/><path stroke="#ff9e64" d="M33 21.4h1M42 21.4h1M33 23.4h1M42 23.4h1M33 33.4h1M42 33.4h1M50 33.4h1M52 33.4h2M62 33.4h2M65 33.4h1M33 35.4h1M42 35.4h1M50 35.4h1M52 35.4h2M62 35.4h2M65 35.4h1M29 45.4h1M38 45.4h1M46 45.4h1M48 45.4h1M56 45.4h1M52 69.4h2M52 71.4h2M48 91.4h6M27 95.4h3M37 95.4h3M45 95.4h3M53 95.4h3M27 97.4h3M37 97.4h3M45 97.4h3M53 97.4h3M27 99.4h3M37 99.4h3M45 99.4h3M53 99.4h3M25 111.4h1M34 111.4h1M42 111.4h2M45 111.4h2M55 111.4h2M58 111.4h2M63 115.4h3M25 123.4h1M34 123.4h1M25 125.4h1M34 125.4h1M25 127.4h1M34 127.4h1M56 139.4h3M57 141.4h3M63 145.4h1M64 161.4h1M29 173.4h1M38 173.4h1M46 173.4h1M48 173.4h1M57 173.4h2M60 173.4h1M29 175.4h1M38 175.4h1M46 175.4h1M48 175.4h1M57 175.4h2M60 175.4h1M29 177.4h1M38 177.4h1M46 177.4h1M48 177.4h1M57 177.4h2M60 177.4h1M29 179.4h1M38 179.4h1M46 179.4h1M48 179.4h1M57 179.4h2M60 179.4h1M29 181.4h1M38 181.4h1M46 181.4h1M48 181.4h1M57 181.4h2M60 181.4h1M27 183.4h1M27 185.4h1M27 187.4h1M27 189.4h1M44 221.4h1M46 221.4h2M44 223.4h1M46 223.4h2M44 225.4h1M46 225.4h2M44 227.4h1M46 227.4h2M14 247.4h1M25 249.4h1M34 249.4h1M16 253.4h1M56 259.4h3M57 261.4h3M63 265.4h1M31 277.4h3M41 277.4h3M49 277.4h3M57 277.4h3M31 279.4h3M41 279.4h3M49 279.4h3M57 279.4h3M23 287.4h3M39 287.4h3M49 287.4h1M51 287.4h3M23 289.4h3M39 289.4h3M49 289.4h1M51 289.4h3M23 291.4h3M39 291.4h3M49 291.4h1M51 291.4h3M23 297.4h3M39 297.4h3M49 297.4h1M51 297.4h3M14 311.4h1M19 313.4h3M35 313.4h3M45 313.4h1M47 313.4h3M21 323.4h1M30 323.4h1M64 325.4h2M64 327.4h2M56 335.4h3M57 337.4h3M63 341.4h1M64 363.4h2M64 365.4h2M64 367.4h2M11 397.4h1M21 399.4h1M30 399.4h1M38 399.4h2M41 399.4h2M51 399.4h2M54 399.4h2M21 401.4h1M30 401.4h1M38 401.4h2M41 401.4h2M51 401.4h2M54 401.4h2M21 403.4h1M30 403.4h1M38 403.4h2M41 403.4h2M51 403.4h2M54 403.4h2M23 411.4h1M23 413.4h1M23 415.4h1M25 433.4h1M34 433.4h1M52 435.4h6M27 437.4h1M25 439.4h1M34 439.4h1M25 441.4h1M34 441.4h1M25 443.4h1M34 443.4h1M25 445.4h1M34 445.4h1M12 449.4h1M11 467.4h1M12 471.4h1M29 473.4h1M38 473.4h1M56 481.4h3M57 483.4h3M63 487.4h1M33 497.4h1M42 497.4h1M50 497.4h1M52 497.4h2M62 497.4h2M65 497.4h1M56 507.4h3M57 509.4h3M63 513.4h1M20 523.4h1M29 541.4h1M38 541.4h1M46 541.4h1M48 541.4h2M57 541.4h1M10 547.4h1M56 551.4h3M57 553.4h3M63 557.4h1M25 577.4h1M34 577.4h1M25 579.4h1M34 579.4h1M29 583.4h1M38 583.4h1M46 583.4h1M48 583.4h2M58 583.4h2M61 583.4h1M29 585.4h1M38 585.4h1M46 585.4h1M48 585.4h2M58 585.4h2M61 585.4h1M29 587.4h1M38 587.4h1M46 587.4h1M48 587.4h2M58 587.4h2M61 587.4h1M29 589.4h1M38 589.4h1M46 589.4h1M48 589.4h2M58 589.4h2M61 589.4h1M14 609.4h1M19 621.4h3M35 621.4h3M45 621.4h1M47 621.4h3M19 623.4h3M35 623.4h3M45 623.4h1M47 623.4h3M19 625.4h3M35 625.4h3M45 625.4h1M47 625.4h3M19 627.4h3M35 627.4h3M45 627.4h1M47 627.4h3M19 635.4h3M19 637.4h3M19 639.4h3M19 641.4h3M21 645.4h1M30 645.4h1M38 645.4h1M40 645.4h1M48 645.4h1M21 647.4h1M30 647.4h1M38 647.4h1M40 647.4h1M48 647.4h1M21 649.4h1M30 649.4h1M38 649.4h1M40 649.4h1M48 649.4h1M21 651.4h1M30 651.4h1M38 651.4h1M40 651.4h1M48 651.4h1M48 661.4h6M14 663.4h1M60 667.4h1M60 669.4h1M60 671.4h1M60 673.4h1M56 677.4h3M57 679.4h3M63 683.4h1M23 693.4h1M23 695.4h1M56 703.4h3M57 705.4h3M63 709.4h1M19 727.4h3M35 727.4h3M45 727.4h1M47 727.4h3M19 729.4h3M35 729.4h3M45 729.4h1M47 729.4h3M19 731.4h3M35 731.4h3M45 731.4h1M47 731.4h3M63 735.4h2M63 737.4h2M63 739.4h2M33 747.4h1M42 747.4h1M29 755.4h1M38 755.4h1M46 755.4h1M48 755.4h2M57 755.4h1M20 769.4h1M23 795.4h1M23 797.4h1M23 799.4h1M23 801.4h1M56 805.4h3M57 807.4h3M63 811.4h1M25 825.4h1M34 825.4h1M42 825.4h1M44 825.4h2M54 825.4h2M57 825.4h1M25 827.4h1M34 827.4h1M42 827.4h1M44 827.4h2M54 827.4h2M57 827.4h1M25 829.4h1M34 829.4h1M42 829.4h1M44 829.4h2M54 829.4h2M57 829.4h1M25 831.4h1M34 831.4h1M42 831.4h1M44 831.4h2M54 831.4h2M57 831.4h1M21 833.4h1M30 833.4h1M21 835.4h1M30 835.4h1M12 847.4h1M21 857.4h1M30 857.4h1M25 859.4h1M34 859.4h1M22 865.4h1M56 869.4h3M57 871.4h3M63 875.4h1M33 893.4h1M42 893.4h1M33 905.4h1M42 905.4h1M33 907.4h1M42 907.4h1M20 921.4h1M33 923.4h1M42 923.4h1M50 923.4h1M52 923.4h2M62 923.4h2M65 923.4h1M33 925.4h1M42 925.4h1M50 925.4h1M52 925.4h2M62 925.4h2M65 925.4h1"/><path stroke="#9a7ecc" d="M58 25.4h1M60 25.4h1M65 25.4h1M58 27.4h1M60 27.4h1M65 27.4h1M58 29.4h1M60 29.4h1M65 29.4h1M58 31.4h1M60 31.4h1M65 31.4h1M54 131.4h1M56 131.4h1M61 131.4h1M62 131.4h1M54 133.4h1M56 133.4h1M61 133.4h1M62 133.4h1M22 217.4h1M24 217.4h1M25 217.4h1M27 217.4h1M32 217.4h1M34 217.4h1M37 217.4h1M39 217.4h1M40 217.4h1M42 217.4h1M50 321.4h1M52 321.4h1M57 321.4h1M58 321.4h1M30 525.4h1M32 525.4h1M33 525.4h1M35 525.4h1M40 525.4h1M42 525.4h1M45 525.4h1M47 525.4h1M48 525.4h1M50 525.4h1M30 527.4h1M32 527.4h1M33 527.4h1M35 527.4h1M40 527.4h1M42 527.4h1M45 527.4h1M47 527.4h1M48 527.4h1M50 527.4h1M30 529.4h1M32 529.4h1M33 529.4h1M35 529.4h1M40 529.4h1M42 529.4h1M45 529.4h1M47 529.4h1M48 529.4h1M50 529.4h1M30 531.4h1M32 531.4h1M33 531.4h1M35 531.4h1M40 531.4h1M42 531.4h1M45 531.4h1M47 531.4h1M48 531.4h1M50 531.4h1M52 735.4h1M54 735.4h1M52 737.4h1M54 737.4h1M52 739.4h1M54 739.4h1"/><path stroke="#0db9d7" d="M21 41.4h5M13 81.4h5M13 83.4h5M13 85.4h5M17 217.4h3M13 235.4h5M13 237.4h5M13 239.4h5M17 245.4h5M13 315.4h5M13 317.4h5M13 319.4h5M13 329.4h5M13 377.4h5M13 379.4h5M13 405.4h5M13 407.4h5M13 425.4h5M13 427.4h5M25 525.4h3M25 527.4h3M25 529.4h3M25 531.4h3M17 593.4h5M17 595.4h5M17 597.4h5M21 771.4h5M27 771.4h3M21 781.4h5M21 783.4h5M21 785.4h5M21 891.4h5"/><path stroke="#6f9bb0" d="M17 61.4h3M4 207.4h3M21 275.4h3M12 911.4h3"/><path stroke="#7dcfff" d="M4 87.4h6M4 331.4h6M12 757.4h6"/><path stroke="#51597d" d="M8 113.4h20M8 121.4h20M8 169.4h12"/></g></svg><div class="a" style="left:1831.3px;top:524px;width:2px;height:3px;background:#2f4170;"></div><div class="a" style="left:1831.3px;top:537.5px;width:2px;height:10.5px;background:#1b5a55;"></div><div class="a" style="left:1831.3px;top:548px;width:2px;height:28px;background:#2f4170;"></div><div class="a" style="left:1831.3px;top:579px;width:2px;height:19.600000000000023px;background:#2f4170;"></div><div class="a" style="left:1831.3px;top:601px;width:2px;height:11.5px;background:#2f4170;"></div><div class="a" style="left:1831.3px;top:615px;width:2px;height:6px;background:#2f4170;"></div><div class="a" style="left:1831.3px;top:623.6px;width:2px;height:4.399999999999977px;background:#2f4170;"></div><div class="a" style="left:1831.3px;top:635px;width:2px;height:2.5px;background:#7a3040;"></div><div class="a" style="left:1831.3px;top:661px;width:2px;height:4px;background:#1b5a55;"></div><div class="a" style="left:1831.3px;top:681px;width:2px;height:2.5px;background:#2f4170;"></div><div class="a" style="left:1831.3px;top:685.5px;width:2px;height:22.5px;background:#1b5a55;"></div><div class="a" style="left:1831.3px;top:708px;width:2px;height:19px;background:#2f4170;"></div><div class="a" style="left:1831.3px;top:735.5px;width:2px;height:221.5px;background:#1b5a55;"></div><div class="a" style="left:1831.3px;top:1000px;width:2px;height:51px;background:#1b5a55;"></div><div class="a" style="left:1903.3px;top:115px;width:1px;height:936px;background:#13141c;"></div><div class="a" style="left:1904.5px;top:130px;width:5px;height:6px;background:#394b70;"></div><div class="a" style="left:1904.5px;top:284px;width:5px;height:7px;background:#1b5a55;"></div><div class="a" style="left:1904.5px;top:302px;width:5px;height:7px;background:#394b70;"></div><div class="a" style="left:1904.5px;top:419px;width:5px;height:7px;background:#394b70;"></div><div class="a" style="left:1904.5px;top:592px;width:5px;height:7px;background:#6b3440;"></div><div class="a" style="left:1904.5px;top:599px;width:5px;height:7px;background:#394b70;"></div><div class="a" style="left:1904.5px;top:613px;width:5px;height:6px;background:#394b70;"></div><div class="a" style="left:1904.5px;top:650px;width:5px;height:6px;background:#394b70;"></div><div class="a" style="left:1904.5px;top:661px;width:5px;height:6px;background:#1b5a55;"></div><div class="a" style="left:1904.5px;top:668px;width:5px;height:50px;background:#394b70;"></div><div class="a" style="left:1904.5px;top:700px;width:5px;height:14px;background:#394b70;"></div><div class="a" style="left:1904.5px;top:714px;width:5px;height:6px;background:#6b3440;"></div><div class="a" style="left:1904.5px;top:724px;width:5px;height:6px;background:#1b5a55;"></div><div class="a" style="left:1904.5px;top:734px;width:5px;height:6px;background:#394b70;"></div><div class="a" style="left:1904.5px;top:741px;width:5px;height:12px;background:#1b5a55;"></div><div class="a" style="left:1904.5px;top:753px;width:5px;height:10px;background:#394b70;"></div><div class="a" style="left:1904.5px;top:766px;width:5px;height:120px;background:#1b5a55;"></div><div class="a" style="left:1904.5px;top:930px;width:5px;height:6px;background:#394b70;"></div><div class="a" style="left:1904.5px;top:960px;width:5px;height:6px;background:#394b70;"></div><div class="a" style="left:1903.5px;top:429.5px;width:16.5px;height:2px;background:#9da3c7;"></div><div class="a" style="left:1904px;top:775px;width:16px;height:41px;background:rgba(134,139,196,0.10);"></div><div class="a" style="left:0px;top:1051px;width:1920px;height:1px;background:#101014;"></div><div class="a" style="left:0px;top:1052px;width:1920px;height:25.8px;background:#16161e;"></div><div class="a" style="left:0px;top:1077.7px;width:1920px;height:2.3px;background:#000000;"></div><div class="a" style="left:0px;top:1052.5px;width:43px;height:25.2px;background:#3d59a1;"></div><svg class="ic" style="left:14px;top:1056px" width="16" height="18" viewBox="14 1056 16 18"><g fill="none" stroke="#e6e9f7" stroke-width="1.500"><path d="M16.200 1060.200l6.700 5.300-6.700 5.300"/><path d="M27.100 1057.300l-5.300 4.500 5.300 4.500"/></g></svg><svg class="ic" style="left:48px;top:1054px" width="260" height="22" viewBox="48 1054 260 22"><g fill="none" stroke="#787c99" stroke-width="1.250">
<circle cx="55" cy="1058.800" r="2.100"/><circle cx="55" cy="1071" r="2.100"/><circle cx="62.600" cy="1060.800" r="2.100"/><path d="M55 1061v7.800M62.600 1063c0 3.400-7.600 2.400-7.600 5.800"/>
<path d="M121 1063.500a6.300 6.300 0 0 1 11.600-1.700M133.500 1066.500a6.300 6.300 0 0 1-11.600 1.700"/><path d="M133.200 1058.300v3.900h-3.900M121.300 1071.700v-3.900h3.900"/>
<circle cx="161.900" cy="1065" r="7.200"/><path d="M158.800 1061.900l6.200 6.200M165 1061.900l-6.200 6.200"/>
<path d="M195.900 1058.200l7.300 13.400h-14.600z" stroke-linejoin="round"/><path d="M195.900 1063v4.300M195.900 1068.600v1.500"/>
<circle cx="246.100" cy="1062.300" r="1.600"/><path d="M246.100 1064l-3.300 8.300M246.100 1064l3.300 8.300M244 1069.500h4.200"/><path d="M242.700 1059.200a4.600 4.600 0 0 0 0 6.200M249.500 1059.200a4.600 4.600 0 0 1 0 6.200M240.400 1057.200a7.600 7.600 0 0 0 0 10.200M251.800 1057.200a7.600 7.600 0 0 1 0 10.200"/>
<ellipse cx="295.300" cy="1059.800" rx="5.200" ry="2.300"/><path d="M290.100 1059.800v10.600c0 1.300 2.300 2.300 5.200 2.300s5.200-1 5.200-2.300v-10.600"/>
</g></svg><span class="t" style="left:71.9px;top:1057px;font-size:14.55px;line-height:16px;color:#787c99;letter-spacing:0.139px;">main*</span><span class="t" style="left:175px;top:1057px;font-size:14.55px;line-height:16px;color:#787c99;letter-spacing:-0.594px;">0</span><span class="t" style="left:209px;top:1057px;font-size:14.55px;line-height:16px;color:#787c99;letter-spacing:-0.594px;">0</span><span class="t" style="left:258.3px;top:1057px;font-size:14.55px;line-height:16px;color:#787c99;letter-spacing:-0.594px;">0</span><span class="t" style="left:308px;top:1057px;font-size:14.55px;line-height:16px;color:#787c99;letter-spacing:0.116px;">Connect</span><span class="t" style="left:1260.2px;top:1057px;font-size:14.55px;line-height:16px;color:#787c99;letter-spacing:-0.11px;">Ln 103, Col 19</span><span class="t" style="left:1373.5px;top:1057px;font-size:14.55px;line-height:16px;color:#787c99;letter-spacing:-0.467px;">Spaces: 4</span><span class="t" style="left:1455px;top:1057px;font-size:14.55px;line-height:16px;color:#787c99;letter-spacing:-0.544px;">UTF-8</span><span class="t" style="left:1514px;top:1057px;font-size:14.55px;line-height:16px;color:#787c99;letter-spacing:-1.425px;">CRLF</span><span class="t" style="left:1566.2px;top:1056px;font-size:14.55px;line-height:16px;color:#787c99;">{</span><span class="t" style="left:1575.2px;top:1056px;font-size:14.55px;line-height:16px;color:#787c99;clip-path:inset(0 0 52% 0);">}</span><div class="a" style="left:1574.300px;top:1065.100px;width:6.600px;height:6.600px;border-radius:50%;background:#787c99"></div><span class="t" style="left:1589.5px;top:1057px;font-size:14.55px;line-height:16px;color:#787c99;letter-spacing:0.001px;">Python</span><span class="t" style="left:1653.2px;top:1057px;font-size:14.55px;line-height:16px;color:#787c99;letter-spacing:0.208px;">3.11.4 64-bit</span><svg class="ic" style="left:1750px;top:1054px" width="160" height="22" viewBox="1750 1054 160 22"><g fill="none" stroke="#787c99" stroke-width="1.250">
<circle cx="1764.400" cy="1063" r="2" fill="#787c99"/><path d="M1764.400 1064v7.500" stroke-width="2.200"/><path d="M1761.300 1066.300a4.300 4.300 0 1 1 6.200 0M1759.600 1068.600a6.900 6.900 0 1 1 9.600 0" />
<path d="M1849.500 1059.500h5.500l2 1.500h3.500l1.500 1.500v2.500l-2.500 1v3l1.500 1.500-1.500 2h-8.500l1-3-2.500-2.500v-3.500l-1.500-1.500z" stroke-linejoin="round"/>
<path d="M1892.700 1057.500a5.200 5.200 0 0 1 5.200 5.200v4.300l1.800 2.700h-14l1.800-2.700v-4.300a5.200 5.200 0 0 1 5.200-5.200zM1890.800 1072a2 2 0 0 0 3.800 0"/>
</g></svg><span class="t" style="left:1777.5px;top:1057px;font-size:14.55px;line-height:16px;color:#787c99;letter-spacing:-0.234px;">Go Live</span>
</body></html>
